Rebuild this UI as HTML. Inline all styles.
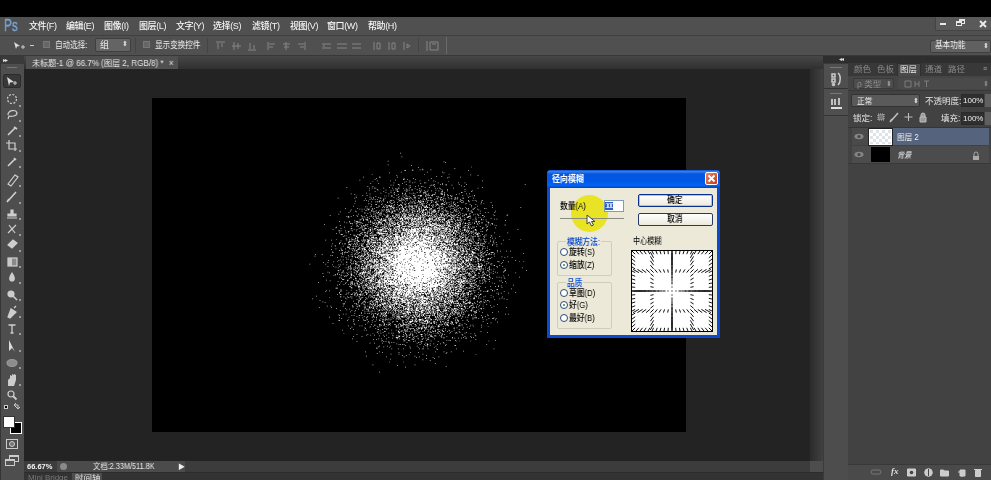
<!DOCTYPE html>
<html lang="zh-CN">
<head>
<meta charset="utf-8">
<title>Photoshop - 径向模糊</title>
<style>
*{box-sizing:border-box;margin:0;padding:0}
html,body{width:991px;height:480px;overflow:hidden;background:#232323}
body{position:relative;font-family:"Liberation Sans","Noto Sans CJK SC",sans-serif;font-size:9px;color:#dcdcdc;line-height:1}
.a{position:absolute}
.t{position:absolute;white-space:nowrap;will-change:transform}
#topblack{left:0;top:0;width:991px;height:17px;background:#000}
#menubar{left:0;top:17px;width:991px;height:18px;background:#505050}
#optbar{left:0;top:35px;width:991px;height:21px;background:#505050;border-top:1px solid #404040;border-bottom:1px solid #383838}
#menubar .t{top:5px;font-size:9px;color:#f6f6f6;letter-spacing:-0.4px;font-weight:500}
.n{transform:scaleX(.84);transform-origin:0 0}
.m{transform:scaleX(.86);transform-origin:0 0;font-weight:500}
#menubar #ps{left:4px;top:0px;font-size:17px;font-weight:normal;color:#7aa3d2;letter-spacing:0;transform:scaleX(.7);transform-origin:0 0;-webkit-text-stroke:0.4px #7aa3d2}
#toolbox{left:0;top:56px;width:24px;height:424px;background:#4e4e4e}
#tabbar{left:24px;top:56px;width:799px;height:13px;background:linear-gradient(#474747,#303030)}
#doctab{left:2px;top:0;width:152px;height:13px;background:#505050}
#work{left:24px;top:69px;width:786px;height:392px;background:#232323}
#vscroll{left:810px;top:69px;width:13px;height:392px;background:linear-gradient(90deg,#2b2b2b,#414141)}
#canvas{left:152px;top:98px;width:534px;height:334px;background:#000}
#status{left:24px;top:461px;width:799px;height:11px;background:#3c3c3c}
#bottom{left:24px;top:472px;width:799px;height:8px;background:#333}
#dock{left:823px;top:56px;width:168px;height:424px;background:#3a3a3a}
#iconstrip{left:1px;top:8px;width:24px;height:416px;background:#4f4f4f}
#panel{left:25px;top:7px;width:143px;height:417px;background:#424242}
/* dialog */
#dlg{left:547px;top:170px;width:173px;height:168px;background:#ece9d8;border:3px solid #0a49d2;border-top:none;border-radius:4px 4px 0 0;color:#000}
#dlgtitle{left:-3px;top:0;width:173px;height:18px;background:linear-gradient(#0a50d0 0,#3a80ea 9%,#0555e0 22%,#0058e6 60%,#0362f6 86%,#0044b8 100%);border-radius:4px 4px 0 0}
.btn{border:1px solid #253a6a;border-radius:2px;background:linear-gradient(#fff,#ece9dc);text-align:center;color:#000}
.grp{border:1px solid #d0cdbd;border-radius:2px}
.radio{width:8px;height:8px;border-radius:50%;border:1px solid #2a4a7a;background:#fff}
.dot:after{content:"";position:absolute;left:2px;top:2px;width:2px;height:2px;background:#2a9a2a;border-radius:50%}
</style>
</head>
<body>
<div id="topblack" class="a"></div>

<div id="menubar" class="a">
  <div id="ps" class="t">Ps</div>
  <div class="t" style="left:29px">文件(F)</div>
  <div class="t" style="left:66px">编辑(E)</div>
  <div class="t" style="left:104px">图像(I)</div>
  <div class="t" style="left:139px">图层(L)</div>
  <div class="t" style="left:176px">文字(Y)</div>
  <div class="t" style="left:213px">选择(S)</div>
  <div class="t" style="left:252px">滤镜(T)</div>
  <div class="t" style="left:290px">视图(V)</div>
  <div class="t" style="left:327px">窗口(W)</div>
  <div class="t" style="left:368px">帮助(H)</div>
  <div class="a" style="left:935px;top:0;width:56px;height:14px;background:#5a5a5a;border-left:1px solid #444;border-bottom:1px solid #444"></div>
  <div class="a" style="left:940px;top:6px;width:6px;height:2px;background:#e8e8e8"></div>
  <div class="a" style="left:959px;top:2px;width:6px;height:5px;border:1px solid #e8e8e8;border-top-width:2px"></div>
  <div class="a" style="left:956px;top:4px;width:6px;height:5px;border:1px solid #e8e8e8;border-top-width:2px;background:#5a5a5a"></div>
  <svg class="a" style="left:979px;top:3px" width="8" height="8"><path d="M1 1L7 7M7 1L1 7" stroke="#eee" stroke-width="1.8"/></svg>
</div>

<div id="optbar" class="a">
  <svg class="a" style="left:13px;top:5px" width="16" height="10"><path d="M1 1L7 5L4 5.5L3 8Z" fill="#ddd"/><path d="M8 6h4M10 4v4" stroke="#ccc" stroke-width="1"/></svg>
  <div class="a" style="left:30px;top:9px;width:4px;height:1px;background:#ccc"></div>
  <div class="a" style="left:43px;top:5px;width:7px;height:7px;background:#666;border:1px solid #777"></div>
  <div class="t n" style="left:55px;top:5px;color:#f0f0f0;font-size:9px">自动选择:</div>
  <div class="a" style="left:95px;top:2px;width:36px;height:14px;background:#646464;border:1px solid #3f3f3f;border-radius:2px"></div>
  <div class="t" style="left:100px;top:5px;color:#f0f0f0">组</div>
  <div class="t" style="left:122px;top:4px;color:#ddd;font-size:7px">⬍</div>
  <div class="a" style="left:135px;top:2px;width:1px;height:15px;background:#444"></div>
  <div class="a" style="left:143px;top:5px;width:7px;height:7px;background:#666;border:1px solid #777"></div>
  <div class="t n" style="left:155px;top:5px;color:#f0f0f0">显示变换控件</div>
  <div class="a" style="left:207px;top:2px;width:1px;height:15px;background:#444"></div>
  <!-- align icons (dim) -->
  <svg class="a" style="left:0;top:3px" width="460" height="14" fill="none" stroke="#858585" stroke-width="1">
    <path d="M216 3h9M218 4v6M222 4v4"/><path d="M232 7h9M234 3v8M238 4v6"/><path d="M248 11h8M250 4v6M254 6v4"/>
    <path d="M268 3v8M269 5h6M269 8h4"/><path d="M286 3v8M283 5h7M284 8h5"/><path d="M305 3v8M298 5h6M300 8h4"/>
    <path d="M322 5h9M322 9h9M324 6v2"/><path d="M337 5h10M337 9h10"/><path d="M352 5h9M352 9h9"/>
    <path d="M374 3v8M377 4v6h3v-6z"/><path d="M389 3v8M392 4v6h3v-6z"/><path d="M404 3v8M407 5l3 2l-3 2z"/>
    <path d="M427 2v10M430 3h8v8h-8zM432 5h4"/>
  </svg>
  <div class="a" style="left:418px;top:2px;width:1px;height:15px;background:#444"></div>
  <div class="a" style="left:446px;top:1px;width:1px;height:17px;background:#6a6a6a"></div>
  <div class="a" style="left:930px;top:4px;width:61px;height:13px;background:#606060;border:1px solid #3f3f3f;border-radius:2px"></div>
  <div class="t n" style="left:935px;top:5px;color:#f0f0f0;font-size:9px">基本功能</div>
  <div class="t" style="left:983px;top:6px;color:#ddd;font-size:7px">⬍</div>
</div>

<div id="tabbar" class="a">
  <div id="doctab" class="a"></div>
  <div class="t" style="left:7.500px;top:3px;color:#e6e6e6;font-size:8.5px;transform:scaleX(.95);transform-origin:0 0">未标题-1 @ 66.7% (图层 2, RGB/8) * <span style="padding-left:3px">×</span></div>
</div>

<div id="work" class="a"></div>
<div id="vscroll" class="a"></div>
<div id="canvas" class="a"></div>
<svg class="a" style="left:0;top:0" width="991" height="480"><path d="M-24 -154h1v1h-1zM-22 -149h1v1h-1zM-41 -143h1v1h-1zM36 -142h1v1h-1zM38 -141h1v1h-1zM-41 -138h1v1h-1zM-9 -137h1v1h-1zM74 -135h1v1h-1zM1 -134h1v1h-1zM51 -133h1v1h-1zM6 -132h1v1h-1zM-7 -131h1v1h-1zM3 -131h1v1h-1zM7 -131h1v1h-1zM18 -131h1v1h-1zM-18 -130h2v1h-2zM-7 -130h1v1h-1zM70 -130h1v1h-1zM-23 -128h1v1h-1zM13 -128h1v1h-1zM34 -128h1v1h-1zM-39 -127h1v1h-1zM36 -127h1v1h-1zM-63 -125h1v1h-1zM9 -125h1v1h-1zM43 -125h1v1h-1zM73 -124h1v1h-1zM-29 -123h1v1h-1zM83 -123h1v1h-1zM26 -122h1v1h-1zM33 -122h1v1h-1zM-75 -121h1v1h-1zM-53 -121h2v1h-2zM-28 -121h1v1h-1zM43 -121h1v1h-1zM59 -121h1v1h-1zM41 -120h1v1h-1zM-57 -119h1v1h-1zM-19 -119h1v1h-1zM-6 -119h1v1h-1zM19 -119h1v1h-1zM-59 -118h1v1h-1zM-20 -118h2v1h-2zM-14 -118h1v1h-1zM-3 -118h1v1h-1zM-80 -117h1v1h-1zM-31 -117h1v1h-1zM15 -117h1v1h-1zM-56 -116h1v1h-1zM-38 -116h1v1h-1zM-11 -116h1v1h-1zM3 -116h1v1h-1zM22 -116h1v1h-1zM89 -116h1v1h-1zM-62 -115h1v1h-1zM-16 -115h1v1h-1zM24 -115h1v1h-1zM42 -115h1v1h-1zM-18 -114h1v1h-1zM-11 -114h1v1h-1zM-4 -114h1v1h-1zM-33 -113h1v1h-1zM-7 -113h1v1h-1zM9 -113h1v1h-1zM11 -113h1v1h-1zM28 -113h1v1h-1zM56 -113h1v1h-1zM65 -113h1v1h-1zM-65 -112h1v1h-1zM-54 -112h1v1h-1zM-21 -112h1v1h-1zM4 -112h1v1h-1zM34 -112h1v1h-1zM-27 -111h2v1h-2zM-16 -111h1v1h-1zM23 -111h1v1h-1zM31 -111h1v1h-1zM34 -111h1v1h-1zM39 -111h1v1h-1zM57 -111h1v1h-1zM67 -111h1v1h-1zM148 -111h1v1h-1zM-37 -110h1v1h-1zM-34 -110h1v1h-1zM19 -110h1v1h-1zM21 -110h2v1h-2zM39 -110h1v1h-1zM47 -110h1v1h-1zM-25 -109h1v1h-1zM-12 -109h1v1h-1zM-10 -109h1v1h-1zM1 -109h1v1h-1zM17 -109h1v1h-1zM60 -109h1v1h-1zM-69 -108h1v1h-1zM-62 -108h1v1h-1zM-3 -108h1v1h-1zM5 -108h1v1h-1zM7 -108h1v1h-1zM23 -108h1v1h-1zM64 -108h1v1h-1zM-98 -107h1v1h-1zM-39 -107h1v1h-1zM-10 -107h1v1h-1zM10 -107h1v1h-1zM16 -107h1v1h-1zM89 -107h1v1h-1zM-67 -106h1v1h-1zM-63 -106h1v1h-1zM-60 -106h1v1h-1zM-58 -106h1v1h-1zM-47 -106h1v1h-1zM-35 -106h1v1h-1zM-27 -106h2v1h-2zM-12 -106h1v1h-1zM24 -106h1v1h-1zM30 -106h1v1h-1zM49 -106h1v1h-1zM83 -106h1v1h-1zM-31 -105h1v1h-1zM-29 -105h1v1h-1zM-20 -105h1v1h-1zM-16 -105h1v1h-1zM-4 -105h1v1h-1zM2 -105h2v1h-2zM27 -105h1v1h-1zM31 -105h1v1h-1zM-56 -104h1v1h-1zM-30 -104h1v1h-1zM-28 -104h1v1h-1zM-15 -104h1v1h-1zM-8 -104h1v1h-1zM-1 -104h1v1h-1zM32 -104h1v1h-1zM41 -104h1v1h-1zM65 -104h1v1h-1zM-67 -103h1v1h-1zM-55 -103h1v1h-1zM-44 -103h1v1h-1zM-34 -103h1v1h-1zM-18 -103h1v1h-1zM-16 -103h1v1h-1zM-12 -103h1v1h-1zM-8 -103h1v1h-1zM2 -103h1v1h-1zM5 -103h1v1h-1zM14 -103h1v1h-1zM25 -103h1v1h-1zM34 -103h1v1h-1zM-37 -102h1v1h-1zM-30 -102h1v1h-1zM-28 -102h1v1h-1zM-14 -102h1v1h-1zM3 -102h1v1h-1zM9 -102h1v1h-1zM19 -102h1v1h-1zM29 -102h1v1h-1zM41 -102h1v1h-1zM75 -102h1v1h-1zM-59 -101h1v1h-1zM-47 -101h1v1h-1zM-28 -101h2v1h-2zM-16 -101h1v1h-1zM4 -101h1v1h-1zM11 -101h1v1h-1zM13 -101h1v1h-1zM33 -101h2v1h-2zM65 -101h1v1h-1zM74 -101h1v1h-1zM-44 -100h1v1h-1zM-37 -100h1v1h-1zM-32 -100h1v1h-1zM-1 -100h1v1h-1zM3 -100h1v1h-1zM8 -100h2v1h-2zM11 -100h1v1h-1zM24 -100h1v1h-1zM37 -100h1v1h-1zM60 -100h2v1h-2zM-71 -99h1v1h-1zM-51 -99h1v1h-1zM-33 -99h1v1h-1zM-21 -99h1v1h-1zM-17 -99h1v1h-1zM-11 -99h1v1h-1zM-6 -99h1v1h-1zM10 -99h1v1h-1zM32 -99h3v1h-3zM-92 -98h1v1h-1zM-66 -98h1v1h-1zM-40 -98h1v1h-1zM-21 -98h1v1h-1zM-17 -98h1v1h-1zM-8 -98h1v1h-1zM-4 -98h1v1h-1zM8 -98h1v1h-1zM11 -98h1v1h-1zM15 -98h1v1h-1zM24 -98h1v1h-1zM32 -98h1v1h-1zM37 -98h1v1h-1zM57 -98h1v1h-1zM67 -98h1v1h-1zM71 -98h1v1h-1zM-87 -97h1v1h-1zM-32 -97h1v1h-1zM-27 -97h1v1h-1zM-18 -97h1v1h-1zM12 -97h1v1h-1zM14 -97h1v1h-1zM20 -97h1v1h-1zM22 -97h2v1h-2zM33 -97h2v1h-2zM37 -97h1v1h-1zM41 -97h1v1h-1zM53 -97h1v1h-1zM-76 -96h1v1h-1zM-70 -96h1v1h-1zM-36 -96h1v1h-1zM-29 -96h1v1h-1zM-16 -96h1v1h-1zM-6 -96h2v1h-2zM1 -96h1v1h-1zM3 -96h3v1h-3zM11 -96h1v1h-1zM14 -96h1v1h-1zM16 -96h1v1h-1zM19 -96h2v1h-2zM37 -96h1v1h-1zM42 -96h1v1h-1zM45 -96h1v1h-1zM62 -96h1v1h-1zM78 -96h1v1h-1zM-85 -95h1v1h-1zM-66 -95h1v1h-1zM-46 -95h1v1h-1zM-43 -95h1v1h-1zM-40 -95h1v1h-1zM-35 -95h1v1h-1zM-21 -95h2v1h-2zM-17 -95h1v1h-1zM-1 -95h1v1h-1zM3 -95h1v1h-1zM5 -95h1v1h-1zM11 -95h1v1h-1zM14 -95h1v1h-1zM20 -95h1v1h-1zM41 -95h1v1h-1zM46 -95h1v1h-1zM48 -95h1v1h-1zM69 -95h1v1h-1zM75 -95h1v1h-1zM78 -95h1v1h-1zM-58 -94h1v1h-1zM-36 -94h1v1h-1zM-26 -94h1v1h-1zM-15 -94h1v1h-1zM-12 -94h1v1h-1zM-4 -94h1v1h-1zM4 -94h1v1h-1zM11 -94h1v1h-1zM26 -94h1v1h-1zM28 -94h1v1h-1zM36 -94h1v1h-1zM46 -94h1v1h-1zM72 -94h1v1h-1zM-85 -93h1v1h-1zM-66 -93h1v1h-1zM-61 -93h1v1h-1zM-54 -93h1v1h-1zM-33 -93h1v1h-1zM-27 -93h1v1h-1zM-19 -93h1v1h-1zM-10 -93h1v1h-1zM-5 -93h1v1h-1zM-3 -93h1v1h-1zM15 -93h1v1h-1zM17 -93h1v1h-1zM29 -93h1v1h-1zM32 -93h2v1h-2zM42 -93h1v1h-1zM52 -93h1v1h-1zM55 -93h1v1h-1zM70 -93h1v1h-1zM-110 -92h1v1h-1zM-87 -92h1v1h-1zM-64 -92h1v1h-1zM-52 -92h2v1h-2zM-45 -92h1v1h-1zM-22 -92h1v1h-1zM-18 -92h1v1h-1zM-16 -92h1v1h-1zM-14 -92h1v1h-1zM-12 -92h1v1h-1zM-9 -92h1v1h-1zM-5 -92h1v1h-1zM1 -92h2v1h-2zM8 -92h1v1h-1zM12 -92h1v1h-1zM14 -92h1v1h-1zM17 -92h1v1h-1zM19 -92h1v1h-1zM27 -92h1v1h-1zM31 -92h1v1h-1zM36 -92h1v1h-1zM46 -92h1v1h-1zM51 -92h1v1h-1zM62 -92h2v1h-2zM77 -92h1v1h-1zM-72 -91h1v1h-1zM-61 -91h1v1h-1zM-47 -91h1v1h-1zM-29 -91h1v1h-1zM-25 -91h1v1h-1zM-22 -91h1v1h-1zM-17 -91h4v1h-4zM-11 -91h1v1h-1zM-3 -91h1v1h-1zM12 -91h1v1h-1zM25 -91h1v1h-1zM27 -91h1v1h-1zM35 -91h1v1h-1zM38 -91h1v1h-1zM43 -91h1v1h-1zM47 -91h1v1h-1zM52 -91h1v1h-1zM54 -91h2v1h-2zM-66 -90h1v1h-1zM-63 -90h1v1h-1zM-59 -90h1v1h-1zM-56 -90h1v1h-1zM-47 -90h1v1h-1zM-27 -90h1v1h-1zM-22 -90h1v1h-1zM-20 -90h1v1h-1zM-7 -90h1v1h-1zM7 -90h1v1h-1zM9 -90h1v1h-1zM12 -90h1v1h-1zM23 -90h1v1h-1zM31 -90h2v1h-2zM34 -90h1v1h-1zM51 -90h1v1h-1zM59 -90h1v1h-1zM-74 -89h1v1h-1zM-71 -89h1v1h-1zM-52 -89h1v1h-1zM-48 -89h1v1h-1zM-38 -89h1v1h-1zM-36 -89h1v1h-1zM-34 -89h1v1h-1zM-25 -89h2v1h-2zM-22 -89h1v1h-1zM-19 -89h1v1h-1zM-15 -89h1v1h-1zM-3 -89h1v1h-1zM1 -89h1v1h-1zM4 -89h1v1h-1zM13 -89h1v1h-1zM15 -89h1v1h-1zM17 -89h1v1h-1zM19 -89h2v1h-2zM32 -89h1v1h-1zM35 -89h1v1h-1zM60 -89h1v1h-1zM62 -89h1v1h-1zM70 -89h1v1h-1zM76 -89h1v1h-1zM79 -89h1v1h-1zM89 -89h1v1h-1zM-86 -88h1v1h-1zM-68 -88h1v1h-1zM-53 -88h1v1h-1zM-47 -88h1v1h-1zM-37 -88h1v1h-1zM-26 -88h1v1h-1zM-10 -88h1v1h-1zM-6 -88h1v1h-1zM1 -88h1v1h-1zM3 -88h1v1h-1zM6 -88h1v1h-1zM8 -88h1v1h-1zM11 -88h1v1h-1zM25 -88h1v1h-1zM28 -88h1v1h-1zM35 -88h1v1h-1zM38 -88h1v1h-1zM58 -88h2v1h-2zM70 -88h1v1h-1zM81 -88h1v1h-1zM88 -88h1v1h-1zM-64 -87h1v1h-1zM-58 -87h1v1h-1zM-56 -87h2v1h-2zM-53 -87h1v1h-1zM-50 -87h1v1h-1zM-42 -87h1v1h-1zM-39 -87h1v1h-1zM-32 -87h1v1h-1zM-23 -87h1v1h-1zM-17 -87h1v1h-1zM-8 -87h1v1h-1zM-5 -87h1v1h-1zM1 -87h3v1h-3zM5 -87h1v1h-1zM7 -87h2v1h-2zM13 -87h1v1h-1zM19 -87h1v1h-1zM21 -87h1v1h-1zM26 -87h1v1h-1zM46 -87h1v1h-1zM50 -87h1v1h-1zM63 -87h1v1h-1zM71 -87h1v1h-1zM-42 -86h1v1h-1zM-38 -86h1v1h-1zM-33 -86h1v1h-1zM-28 -86h1v1h-1zM-21 -86h1v1h-1zM-11 -86h1v1h-1zM-8 -86h1v1h-1zM-4 -86h1v1h-1zM-1 -86h1v1h-1zM3 -86h2v1h-2zM13 -86h1v1h-1zM19 -86h1v1h-1zM24 -86h2v1h-2zM37 -86h1v1h-1zM40 -86h1v1h-1zM43 -86h1v1h-1zM49 -86h1v1h-1zM55 -86h1v1h-1zM60 -86h1v1h-1zM62 -86h1v1h-1zM88 -86h1v1h-1zM101 -86h1v1h-1zM-87 -85h1v1h-1zM-66 -85h1v1h-1zM-36 -85h2v1h-2zM-21 -85h1v1h-1zM-18 -85h1v1h-1zM-16 -85h1v1h-1zM-13 -85h1v1h-1zM-8 -85h1v1h-1zM-5 -85h3v1h-3zM6 -85h1v1h-1zM9 -85h1v1h-1zM12 -85h1v1h-1zM17 -85h1v1h-1zM34 -85h1v1h-1zM39 -85h1v1h-1zM49 -85h1v1h-1zM67 -85h1v1h-1zM91 -85h1v1h-1zM-68 -84h1v1h-1zM-49 -84h1v1h-1zM-37 -84h1v1h-1zM-13 -84h1v1h-1zM-11 -84h1v1h-1zM2 -84h1v1h-1zM5 -84h2v1h-2zM8 -84h1v1h-1zM26 -84h2v1h-2zM32 -84h4v1h-4zM40 -84h1v1h-1zM46 -84h1v1h-1zM52 -84h1v1h-1zM66 -84h1v1h-1zM87 -84h1v1h-1zM-64 -83h1v1h-1zM-58 -83h2v1h-2zM-50 -83h1v1h-1zM-45 -83h1v1h-1zM-32 -83h1v1h-1zM-28 -83h1v1h-1zM-24 -83h2v1h-2zM-18 -83h2v1h-2zM0 -83h1v1h-1zM4 -83h1v1h-1zM6 -83h1v1h-1zM14 -83h1v1h-1zM16 -83h1v1h-1zM21 -83h1v1h-1zM25 -83h1v1h-1zM27 -83h2v1h-2zM33 -83h1v1h-1zM36 -83h2v1h-2zM44 -83h1v1h-1zM50 -83h2v1h-2zM72 -83h1v1h-1zM80 -83h1v1h-1zM-43 -82h1v1h-1zM-40 -82h2v1h-2zM-36 -82h1v1h-1zM-33 -82h1v1h-1zM-26 -82h2v1h-2zM-23 -82h2v1h-2zM-12 -82h1v1h-1zM-8 -82h1v1h-1zM-5 -82h1v1h-1zM-3 -82h1v1h-1zM-1 -82h1v1h-1zM6 -82h2v1h-2zM12 -82h1v1h-1zM16 -82h1v1h-1zM19 -82h1v1h-1zM21 -82h1v1h-1zM26 -82h1v1h-1zM29 -82h1v1h-1zM46 -82h1v1h-1zM52 -82h1v1h-1zM55 -82h2v1h-2zM74 -82h1v1h-1zM103 -82h1v1h-1zM-89 -81h1v1h-1zM-64 -81h1v1h-1zM-54 -81h2v1h-2zM-47 -81h1v1h-1zM-44 -81h1v1h-1zM-42 -81h2v1h-2zM-39 -81h2v1h-2zM-36 -81h1v1h-1zM-21 -81h1v1h-1zM-17 -81h2v1h-2zM-12 -81h3v1h-3zM-8 -81h1v1h-1zM-2 -81h1v1h-1zM0 -81h1v1h-1zM3 -81h1v1h-1zM8 -81h3v1h-3zM12 -81h1v1h-1zM21 -81h1v1h-1zM24 -81h1v1h-1zM32 -81h1v1h-1zM34 -81h1v1h-1zM42 -81h1v1h-1zM46 -81h1v1h-1zM48 -81h2v1h-2zM82 -81h1v1h-1zM-72 -80h1v1h-1zM-70 -80h1v1h-1zM-65 -80h1v1h-1zM-47 -80h1v1h-1zM-38 -80h3v1h-3zM-34 -80h1v1h-1zM-27 -80h1v1h-1zM-21 -80h1v1h-1zM-15 -80h1v1h-1zM-13 -80h1v1h-1zM-9 -80h3v1h-3zM-5 -80h1v1h-1zM-3 -80h2v1h-2zM2 -80h1v1h-1zM5 -80h1v1h-1zM11 -80h3v1h-3zM20 -80h1v1h-1zM30 -80h1v1h-1zM32 -80h1v1h-1zM44 -80h2v1h-2zM53 -80h1v1h-1zM55 -80h1v1h-1zM74 -80h1v1h-1zM-57 -79h1v1h-1zM-55 -79h1v1h-1zM-49 -79h1v1h-1zM-46 -79h1v1h-1zM-43 -79h2v1h-2zM-35 -79h2v1h-2zM-32 -79h1v1h-1zM-29 -79h1v1h-1zM-23 -79h1v1h-1zM-21 -79h1v1h-1zM-18 -79h2v1h-2zM-12 -79h1v1h-1zM-8 -79h1v1h-1zM-2 -79h1v1h-1zM1 -79h1v1h-1zM5 -79h1v1h-1zM9 -79h3v1h-3zM13 -79h2v1h-2zM16 -79h1v1h-1zM21 -79h1v1h-1zM29 -79h1v1h-1zM35 -79h1v1h-1zM40 -79h1v1h-1zM51 -79h1v1h-1zM58 -79h1v1h-1zM66 -79h1v1h-1zM79 -79h1v1h-1zM103 -79h1v1h-1zM142 -79h1v1h-1zM-100 -78h1v1h-1zM-83 -78h1v1h-1zM-70 -78h1v1h-1zM-63 -78h1v1h-1zM-60 -78h1v1h-1zM-37 -78h1v1h-1zM-34 -78h2v1h-2zM-25 -78h1v1h-1zM-21 -78h2v1h-2zM-11 -78h1v1h-1zM-7 -78h3v1h-3zM1 -78h2v1h-2zM5 -78h1v1h-1zM18 -78h2v1h-2zM27 -78h2v1h-2zM30 -78h1v1h-1zM33 -78h2v1h-2zM47 -78h1v1h-1zM49 -78h1v1h-1zM56 -78h1v1h-1zM59 -78h1v1h-1zM62 -78h1v1h-1zM67 -78h1v1h-1zM70 -78h1v1h-1zM78 -78h1v1h-1zM92 -78h1v1h-1zM94 -78h1v1h-1zM-80 -77h1v1h-1zM-77 -77h1v1h-1zM-74 -77h1v1h-1zM-68 -77h2v1h-2zM-62 -77h1v1h-1zM-43 -77h1v1h-1zM-41 -77h2v1h-2zM-38 -77h1v1h-1zM-29 -77h1v1h-1zM-25 -77h1v1h-1zM-23 -77h1v1h-1zM-20 -77h2v1h-2zM-16 -77h2v1h-2zM-11 -77h1v1h-1zM-8 -77h1v1h-1zM-2 -77h1v1h-1zM2 -77h2v1h-2zM8 -77h1v1h-1zM11 -77h2v1h-2zM16 -77h2v1h-2zM24 -77h1v1h-1zM35 -77h1v1h-1zM38 -77h1v1h-1zM45 -77h1v1h-1zM51 -77h1v1h-1zM54 -77h1v1h-1zM61 -77h1v1h-1zM68 -77h1v1h-1zM70 -77h1v1h-1zM76 -77h2v1h-2zM82 -77h1v1h-1zM-92 -76h1v1h-1zM-70 -76h1v1h-1zM-68 -76h1v1h-1zM-63 -76h1v1h-1zM-50 -76h1v1h-1zM-48 -76h1v1h-1zM-46 -76h1v1h-1zM-43 -76h2v1h-2zM-36 -76h1v1h-1zM-33 -76h1v1h-1zM-30 -76h1v1h-1zM-28 -76h1v1h-1zM-25 -76h1v1h-1zM-20 -76h2v1h-2zM-15 -76h1v1h-1zM-11 -76h1v1h-1zM-9 -76h1v1h-1zM-7 -76h1v1h-1zM-4 -76h1v1h-1zM1 -76h2v1h-2zM5 -76h1v1h-1zM7 -76h2v1h-2zM10 -76h3v1h-3zM17 -76h1v1h-1zM19 -76h1v1h-1zM21 -76h1v1h-1zM23 -76h1v1h-1zM30 -76h1v1h-1zM32 -76h1v1h-1zM51 -76h1v1h-1zM53 -76h1v1h-1zM84 -76h1v1h-1zM-72 -75h2v1h-2zM-64 -75h1v1h-1zM-57 -75h1v1h-1zM-53 -75h1v1h-1zM-49 -75h1v1h-1zM-43 -75h1v1h-1zM-40 -75h1v1h-1zM-32 -75h1v1h-1zM-21 -75h1v1h-1zM-17 -75h3v1h-3zM-8 -75h1v1h-1zM-6 -75h1v1h-1zM0 -75h1v1h-1zM2 -75h1v1h-1zM5 -75h1v1h-1zM7 -75h3v1h-3zM13 -75h1v1h-1zM16 -75h1v1h-1zM22 -75h3v1h-3zM28 -75h2v1h-2zM37 -75h2v1h-2zM40 -75h1v1h-1zM50 -75h2v1h-2zM56 -75h1v1h-1zM60 -75h1v1h-1zM70 -75h1v1h-1zM74 -75h1v1h-1zM-93 -74h1v1h-1zM-86 -74h1v1h-1zM-77 -74h1v1h-1zM-64 -74h1v1h-1zM-62 -74h1v1h-1zM-58 -74h1v1h-1zM-48 -74h1v1h-1zM-44 -74h1v1h-1zM-41 -74h3v1h-3zM-35 -74h1v1h-1zM-33 -74h3v1h-3zM-27 -74h1v1h-1zM-22 -74h4v1h-4zM-17 -74h1v1h-1zM-14 -74h1v1h-1zM-12 -74h1v1h-1zM-7 -74h1v1h-1zM-5 -74h2v1h-2zM-1 -74h2v1h-2zM2 -74h1v1h-1zM6 -74h2v1h-2zM19 -74h1v1h-1zM21 -74h4v1h-4zM29 -74h1v1h-1zM34 -74h2v1h-2zM39 -74h1v1h-1zM52 -74h2v1h-2zM69 -74h1v1h-1zM72 -74h1v1h-1zM86 -74h1v1h-1zM107 -74h1v1h-1zM-107 -73h1v1h-1zM-85 -73h1v1h-1zM-61 -73h2v1h-2zM-54 -73h1v1h-1zM-50 -73h1v1h-1zM-42 -73h1v1h-1zM-39 -73h1v1h-1zM-36 -73h2v1h-2zM-24 -73h1v1h-1zM-21 -73h1v1h-1zM-16 -73h1v1h-1zM-11 -73h1v1h-1zM-7 -73h1v1h-1zM-4 -73h1v1h-1zM-1 -73h2v1h-2zM3 -73h2v1h-2zM6 -73h1v1h-1zM8 -73h1v1h-1zM13 -73h2v1h-2zM16 -73h1v1h-1zM20 -73h2v1h-2zM24 -73h2v1h-2zM28 -73h1v1h-1zM33 -73h1v1h-1zM39 -73h1v1h-1zM41 -73h2v1h-2zM45 -73h1v1h-1zM49 -73h1v1h-1zM54 -73h1v1h-1zM57 -73h1v1h-1zM74 -73h2v1h-2zM-95 -72h1v1h-1zM-73 -72h1v1h-1zM-66 -72h1v1h-1zM-57 -72h1v1h-1zM-55 -72h2v1h-2zM-51 -72h1v1h-1zM-43 -72h1v1h-1zM-37 -72h1v1h-1zM-35 -72h1v1h-1zM-25 -72h2v1h-2zM-19 -72h1v1h-1zM-14 -72h2v1h-2zM-8 -72h2v1h-2zM2 -72h1v1h-1zM6 -72h2v1h-2zM10 -72h2v1h-2zM14 -72h1v1h-1zM16 -72h1v1h-1zM19 -72h1v1h-1zM21 -72h1v1h-1zM23 -72h1v1h-1zM28 -72h1v1h-1zM35 -72h1v1h-1zM46 -72h1v1h-1zM48 -72h1v1h-1zM58 -72h1v1h-1zM75 -72h1v1h-1zM93 -72h1v1h-1zM97 -72h1v1h-1zM106 -72h1v1h-1zM-73 -71h1v1h-1zM-69 -71h1v1h-1zM-59 -71h1v1h-1zM-56 -71h1v1h-1zM-52 -71h1v1h-1zM-50 -71h1v1h-1zM-36 -71h1v1h-1zM-33 -71h1v1h-1zM-26 -71h1v1h-1zM-23 -71h1v1h-1zM-20 -71h1v1h-1zM-18 -71h1v1h-1zM-11 -71h1v1h-1zM-7 -71h1v1h-1zM-4 -71h1v1h-1zM0 -71h1v1h-1zM5 -71h1v1h-1zM8 -71h1v1h-1zM11 -71h1v1h-1zM13 -71h1v1h-1zM16 -71h1v1h-1zM18 -71h2v1h-2zM26 -71h1v1h-1zM31 -71h1v1h-1zM34 -71h1v1h-1zM41 -71h2v1h-2zM56 -71h1v1h-1zM62 -71h1v1h-1zM72 -71h1v1h-1zM86 -71h1v1h-1zM-109 -70h1v1h-1zM-82 -70h1v1h-1zM-65 -70h1v1h-1zM-61 -70h1v1h-1zM-53 -70h2v1h-2zM-47 -70h1v1h-1zM-42 -70h1v1h-1zM-31 -70h2v1h-2zM-28 -70h1v1h-1zM-19 -70h4v1h-4zM-13 -70h1v1h-1zM-10 -70h2v1h-2zM-6 -70h1v1h-1zM-2 -70h1v1h-1zM0 -70h3v1h-3zM6 -70h1v1h-1zM10 -70h2v1h-2zM13 -70h1v1h-1zM20 -70h2v1h-2zM25 -70h2v1h-2zM31 -70h5v1h-5zM39 -70h1v1h-1zM41 -70h1v1h-1zM45 -70h2v1h-2zM50 -70h1v1h-1zM54 -70h1v1h-1zM59 -70h1v1h-1zM66 -70h2v1h-2zM71 -70h1v1h-1zM79 -70h1v1h-1zM82 -70h1v1h-1zM-59 -69h1v1h-1zM-54 -69h1v1h-1zM-50 -69h1v1h-1zM-46 -69h1v1h-1zM-40 -69h1v1h-1zM-30 -69h2v1h-2zM-27 -69h3v1h-3zM-22 -69h3v1h-3zM-16 -69h1v1h-1zM-13 -69h1v1h-1zM-11 -69h1v1h-1zM-8 -69h3v1h-3zM-2 -69h1v1h-1zM6 -69h6v1h-6zM16 -69h1v1h-1zM19 -69h1v1h-1zM24 -69h1v1h-1zM28 -69h1v1h-1zM33 -69h1v1h-1zM36 -69h1v1h-1zM38 -69h2v1h-2zM46 -69h1v1h-1zM53 -69h1v1h-1zM64 -69h1v1h-1zM67 -69h1v1h-1zM77 -69h1v1h-1zM83 -69h1v1h-1zM104 -69h1v1h-1zM124 -69h1v1h-1zM-121 -68h1v1h-1zM-89 -68h1v1h-1zM-84 -68h1v1h-1zM-78 -68h1v1h-1zM-71 -68h1v1h-1zM-64 -68h1v1h-1zM-58 -68h1v1h-1zM-52 -68h1v1h-1zM-44 -68h1v1h-1zM-42 -68h2v1h-2zM-35 -68h2v1h-2zM-30 -68h1v1h-1zM-28 -68h1v1h-1zM-26 -68h1v1h-1zM-21 -68h1v1h-1zM-19 -68h3v1h-3zM-12 -68h4v1h-4zM-6 -68h1v1h-1zM-4 -68h1v1h-1zM-2 -68h1v1h-1zM0 -68h1v1h-1zM3 -68h2v1h-2zM6 -68h1v1h-1zM8 -68h1v1h-1zM12 -68h2v1h-2zM15 -68h3v1h-3zM19 -68h1v1h-1zM22 -68h2v1h-2zM26 -68h1v1h-1zM30 -68h1v1h-1zM32 -68h2v1h-2zM35 -68h1v1h-1zM37 -68h1v1h-1zM39 -68h1v1h-1zM42 -68h3v1h-3zM47 -68h3v1h-3zM51 -68h2v1h-2zM56 -68h2v1h-2zM62 -68h1v1h-1zM64 -68h1v1h-1zM72 -68h1v1h-1zM84 -68h1v1h-1zM89 -68h2v1h-2zM106 -68h1v1h-1zM123 -68h1v1h-1zM-98 -67h1v1h-1zM-96 -67h1v1h-1zM-92 -67h1v1h-1zM-83 -67h1v1h-1zM-77 -67h1v1h-1zM-74 -67h1v1h-1zM-66 -67h1v1h-1zM-64 -67h1v1h-1zM-61 -67h1v1h-1zM-59 -67h1v1h-1zM-55 -67h1v1h-1zM-49 -67h1v1h-1zM-43 -67h3v1h-3zM-38 -67h1v1h-1zM-35 -67h2v1h-2zM-31 -67h1v1h-1zM-28 -67h1v1h-1zM-25 -67h1v1h-1zM-22 -67h1v1h-1zM-19 -67h3v1h-3zM-14 -67h1v1h-1zM-11 -67h1v1h-1zM-7 -67h1v1h-1zM-3 -67h3v1h-3zM1 -67h1v1h-1zM4 -67h1v1h-1zM6 -67h1v1h-1zM9 -67h1v1h-1zM11 -67h1v1h-1zM14 -67h2v1h-2zM18 -67h1v1h-1zM20 -67h1v1h-1zM23 -67h3v1h-3zM27 -67h1v1h-1zM32 -67h1v1h-1zM37 -67h1v1h-1zM41 -67h1v1h-1zM43 -67h1v1h-1zM45 -67h1v1h-1zM49 -67h1v1h-1zM51 -67h1v1h-1zM62 -67h1v1h-1zM70 -67h3v1h-3zM92 -67h1v1h-1zM-96 -66h2v1h-2zM-76 -66h1v1h-1zM-69 -66h1v1h-1zM-62 -66h1v1h-1zM-58 -66h2v1h-2zM-54 -66h1v1h-1zM-44 -66h2v1h-2zM-32 -66h1v1h-1zM-30 -66h1v1h-1zM-27 -66h1v1h-1zM-25 -66h1v1h-1zM-23 -66h1v1h-1zM-20 -66h2v1h-2zM-17 -66h1v1h-1zM-15 -66h1v1h-1zM-13 -66h2v1h-2zM-10 -66h1v1h-1zM-8 -66h1v1h-1zM-5 -66h1v1h-1zM1 -66h4v1h-4zM7 -66h2v1h-2zM17 -66h1v1h-1zM21 -66h2v1h-2zM30 -66h2v1h-2zM33 -66h1v1h-1zM36 -66h1v1h-1zM39 -66h1v1h-1zM46 -66h3v1h-3zM54 -66h2v1h-2zM59 -66h1v1h-1zM68 -66h3v1h-3zM73 -66h1v1h-1zM80 -66h1v1h-1zM-73 -65h1v1h-1zM-70 -65h1v1h-1zM-42 -65h2v1h-2zM-39 -65h1v1h-1zM-37 -65h1v1h-1zM-34 -65h3v1h-3zM-29 -65h1v1h-1zM-27 -65h2v1h-2zM-23 -65h2v1h-2zM-19 -65h2v1h-2zM-16 -65h4v1h-4zM-11 -65h1v1h-1zM-9 -65h2v1h-2zM-5 -65h1v1h-1zM-3 -65h1v1h-1zM-1 -65h1v1h-1zM2 -65h1v1h-1zM4 -65h2v1h-2zM7 -65h1v1h-1zM9 -65h2v1h-2zM16 -65h1v1h-1zM19 -65h2v1h-2zM23 -65h2v1h-2zM26 -65h6v1h-6zM33 -65h3v1h-3zM41 -65h1v1h-1zM46 -65h1v1h-1zM49 -65h1v1h-1zM51 -65h1v1h-1zM54 -65h1v1h-1zM56 -65h1v1h-1zM58 -65h1v1h-1zM64 -65h1v1h-1zM68 -65h1v1h-1zM84 -65h1v1h-1zM86 -65h1v1h-1zM91 -65h1v1h-1zM-76 -64h1v1h-1zM-67 -64h1v1h-1zM-61 -64h1v1h-1zM-57 -64h2v1h-2zM-54 -64h1v1h-1zM-50 -64h1v1h-1zM-47 -64h1v1h-1zM-40 -64h1v1h-1zM-38 -64h1v1h-1zM-36 -64h1v1h-1zM-34 -64h1v1h-1zM-32 -64h2v1h-2zM-27 -64h1v1h-1zM-25 -64h5v1h-5zM-18 -64h5v1h-5zM-12 -64h3v1h-3zM-8 -64h2v1h-2zM-5 -64h4v1h-4zM0 -64h2v1h-2zM3 -64h2v1h-2zM8 -64h1v1h-1zM10 -64h1v1h-1zM15 -64h3v1h-3zM19 -64h2v1h-2zM25 -64h2v1h-2zM28 -64h2v1h-2zM35 -64h1v1h-1zM37 -64h1v1h-1zM39 -64h1v1h-1zM46 -64h1v1h-1zM49 -64h1v1h-1zM59 -64h1v1h-1zM72 -64h1v1h-1zM80 -64h1v1h-1zM101 -64h1v1h-1zM-78 -63h1v1h-1zM-75 -63h1v1h-1zM-72 -63h1v1h-1zM-70 -63h2v1h-2zM-53 -63h1v1h-1zM-50 -63h1v1h-1zM-45 -63h2v1h-2zM-41 -63h4v1h-4zM-36 -63h1v1h-1zM-24 -63h1v1h-1zM-22 -63h2v1h-2zM-19 -63h1v1h-1zM-17 -63h1v1h-1zM-14 -63h2v1h-2zM-9 -63h1v1h-1zM-7 -63h1v1h-1zM-5 -63h3v1h-3zM0 -63h5v1h-5zM7 -63h2v1h-2zM12 -63h1v1h-1zM16 -63h3v1h-3zM20 -63h1v1h-1zM24 -63h1v1h-1zM26 -63h1v1h-1zM28 -63h4v1h-4zM33 -63h2v1h-2zM36 -63h2v1h-2zM46 -63h1v1h-1zM50 -63h2v1h-2zM55 -63h1v1h-1zM57 -63h1v1h-1zM59 -63h1v1h-1zM64 -63h1v1h-1zM66 -63h1v1h-1zM88 -63h1v1h-1zM106 -63h1v1h-1zM109 -63h1v1h-1zM-80 -62h2v1h-2zM-75 -62h1v1h-1zM-71 -62h2v1h-2zM-60 -62h1v1h-1zM-58 -62h1v1h-1zM-52 -62h3v1h-3zM-48 -62h1v1h-1zM-46 -62h1v1h-1zM-44 -62h1v1h-1zM-38 -62h2v1h-2zM-31 -62h1v1h-1zM-29 -62h2v1h-2zM-25 -62h2v1h-2zM-21 -62h1v1h-1zM-19 -62h1v1h-1zM-17 -62h1v1h-1zM-15 -62h1v1h-1zM-13 -62h1v1h-1zM-11 -62h1v1h-1zM-9 -62h5v1h-5zM-2 -62h4v1h-4zM4 -62h1v1h-1zM7 -62h1v1h-1zM9 -62h1v1h-1zM11 -62h7v1h-7zM19 -62h2v1h-2zM22 -62h3v1h-3zM26 -62h1v1h-1zM30 -62h2v1h-2zM34 -62h4v1h-4zM42 -62h7v1h-7zM55 -62h1v1h-1zM60 -62h2v1h-2zM64 -62h1v1h-1zM76 -62h1v1h-1zM79 -62h1v1h-1zM81 -62h1v1h-1zM88 -62h1v1h-1zM90 -62h1v1h-1zM94 -62h1v1h-1zM-87 -61h1v1h-1zM-75 -61h1v1h-1zM-69 -61h1v1h-1zM-65 -61h1v1h-1zM-59 -61h1v1h-1zM-56 -61h2v1h-2zM-51 -61h1v1h-1zM-48 -61h5v1h-5zM-40 -61h2v1h-2zM-37 -61h1v1h-1zM-35 -61h1v1h-1zM-32 -61h1v1h-1zM-29 -61h1v1h-1zM-27 -61h1v1h-1zM-22 -61h3v1h-3zM-13 -61h1v1h-1zM-9 -61h1v1h-1zM-7 -61h1v1h-1zM-4 -61h1v1h-1zM-2 -61h1v1h-1zM0 -61h1v1h-1zM3 -61h1v1h-1zM6 -61h1v1h-1zM8 -61h2v1h-2zM11 -61h1v1h-1zM13 -61h4v1h-4zM21 -61h1v1h-1zM23 -61h1v1h-1zM25 -61h1v1h-1zM27 -61h2v1h-2zM30 -61h1v1h-1zM33 -61h1v1h-1zM37 -61h1v1h-1zM41 -61h2v1h-2zM52 -61h1v1h-1zM54 -61h1v1h-1zM56 -61h2v1h-2zM59 -61h1v1h-1zM70 -61h2v1h-2zM121 -61h1v1h-1zM-108 -60h1v1h-1zM-94 -60h1v1h-1zM-85 -60h3v1h-3zM-65 -60h1v1h-1zM-54 -60h2v1h-2zM-49 -60h1v1h-1zM-45 -60h2v1h-2zM-39 -60h2v1h-2zM-36 -60h1v1h-1zM-33 -60h1v1h-1zM-25 -60h4v1h-4zM-19 -60h2v1h-2zM-16 -60h1v1h-1zM-13 -60h1v1h-1zM-9 -60h1v1h-1zM-6 -60h4v1h-4zM-1 -60h1v1h-1zM1 -60h2v1h-2zM4 -60h3v1h-3zM9 -60h2v1h-2zM13 -60h1v1h-1zM16 -60h4v1h-4zM22 -60h1v1h-1zM25 -60h1v1h-1zM28 -60h1v1h-1zM31 -60h1v1h-1zM34 -60h1v1h-1zM39 -60h2v1h-2zM42 -60h1v1h-1zM44 -60h1v1h-1zM46 -60h3v1h-3zM52 -60h1v1h-1zM60 -60h1v1h-1zM80 -60h2v1h-2zM84 -60h2v1h-2zM95 -60h1v1h-1zM-101 -59h1v1h-1zM-94 -59h1v1h-1zM-87 -59h1v1h-1zM-82 -59h3v1h-3zM-68 -59h1v1h-1zM-66 -59h2v1h-2zM-63 -59h2v1h-2zM-58 -59h1v1h-1zM-54 -59h5v1h-5zM-42 -59h1v1h-1zM-36 -59h2v1h-2zM-33 -59h1v1h-1zM-28 -59h2v1h-2zM-23 -59h1v1h-1zM-21 -59h2v1h-2zM-17 -59h2v1h-2zM-14 -59h1v1h-1zM-11 -59h1v1h-1zM-9 -59h4v1h-4zM-3 -59h1v1h-1zM-1 -59h1v1h-1zM1 -59h1v1h-1zM3 -59h2v1h-2zM8 -59h1v1h-1zM10 -59h2v1h-2zM13 -59h2v1h-2zM17 -59h1v1h-1zM31 -59h1v1h-1zM33 -59h2v1h-2zM36 -59h1v1h-1zM39 -59h1v1h-1zM41 -59h4v1h-4zM49 -59h1v1h-1zM57 -59h1v1h-1zM59 -59h1v1h-1zM63 -59h1v1h-1zM81 -59h1v1h-1zM84 -59h1v1h-1zM97 -59h1v1h-1zM-98 -58h1v1h-1zM-84 -58h2v1h-2zM-79 -58h2v1h-2zM-60 -58h1v1h-1zM-57 -58h1v1h-1zM-55 -58h3v1h-3zM-51 -58h1v1h-1zM-44 -58h2v1h-2zM-40 -58h3v1h-3zM-36 -58h1v1h-1zM-34 -58h1v1h-1zM-32 -58h2v1h-2zM-28 -58h2v1h-2zM-24 -58h1v1h-1zM-22 -58h2v1h-2zM-18 -58h1v1h-1zM-16 -58h4v1h-4zM-11 -58h1v1h-1zM-7 -58h1v1h-1zM-4 -58h1v1h-1zM-2 -58h1v1h-1zM0 -58h3v1h-3zM4 -58h3v1h-3zM10 -58h2v1h-2zM14 -58h3v1h-3zM18 -58h1v1h-1zM20 -58h1v1h-1zM24 -58h3v1h-3zM29 -58h1v1h-1zM35 -58h1v1h-1zM39 -58h1v1h-1zM41 -58h1v1h-1zM43 -58h2v1h-2zM48 -58h1v1h-1zM53 -58h1v1h-1zM55 -58h1v1h-1zM57 -58h2v1h-2zM66 -58h1v1h-1zM70 -58h3v1h-3zM75 -58h1v1h-1zM78 -58h1v1h-1zM88 -58h2v1h-2zM97 -58h2v1h-2zM-93 -57h2v1h-2zM-90 -57h1v1h-1zM-85 -57h1v1h-1zM-76 -57h1v1h-1zM-62 -57h3v1h-3zM-57 -57h1v1h-1zM-55 -57h1v1h-1zM-51 -57h2v1h-2zM-46 -57h1v1h-1zM-42 -57h1v1h-1zM-39 -57h1v1h-1zM-36 -57h3v1h-3zM-31 -57h1v1h-1zM-29 -57h2v1h-2zM-25 -57h1v1h-1zM-22 -57h3v1h-3zM-17 -57h2v1h-2zM-13 -57h1v1h-1zM-10 -57h5v1h-5zM-4 -57h1v1h-1zM-2 -57h1v1h-1zM0 -57h1v1h-1zM2 -57h1v1h-1zM5 -57h2v1h-2zM9 -57h2v1h-2zM16 -57h2v1h-2zM20 -57h5v1h-5zM26 -57h1v1h-1zM29 -57h1v1h-1zM37 -57h1v1h-1zM40 -57h2v1h-2zM44 -57h1v1h-1zM51 -57h2v1h-2zM55 -57h1v1h-1zM59 -57h1v1h-1zM62 -57h1v1h-1zM65 -57h2v1h-2zM68 -57h1v1h-1zM78 -57h1v1h-1zM82 -57h1v1h-1zM85 -57h1v1h-1zM102 -57h2v1h-2zM-129 -56h1v1h-1zM-80 -56h1v1h-1zM-72 -56h1v1h-1zM-69 -56h1v1h-1zM-65 -56h1v1h-1zM-59 -56h1v1h-1zM-56 -56h1v1h-1zM-54 -56h1v1h-1zM-51 -56h1v1h-1zM-49 -56h1v1h-1zM-46 -56h1v1h-1zM-41 -56h1v1h-1zM-39 -56h2v1h-2zM-33 -56h3v1h-3zM-28 -56h3v1h-3zM-22 -56h3v1h-3zM-18 -56h1v1h-1zM-12 -56h4v1h-4zM-7 -56h2v1h-2zM-4 -56h4v1h-4zM1 -56h1v1h-1zM3 -56h1v1h-1zM5 -56h1v1h-1zM7 -56h1v1h-1zM9 -56h2v1h-2zM14 -56h1v1h-1zM16 -56h4v1h-4zM21 -56h1v1h-1zM23 -56h2v1h-2zM26 -56h2v1h-2zM30 -56h1v1h-1zM33 -56h1v1h-1zM35 -56h1v1h-1zM37 -56h1v1h-1zM39 -56h1v1h-1zM41 -56h1v1h-1zM43 -56h1v1h-1zM45 -56h1v1h-1zM47 -56h1v1h-1zM52 -56h1v1h-1zM54 -56h1v1h-1zM56 -56h1v1h-1zM58 -56h2v1h-2zM70 -56h1v1h-1zM73 -56h1v1h-1zM82 -56h1v1h-1zM94 -56h1v1h-1zM103 -56h1v1h-1zM-90 -55h1v1h-1zM-85 -55h2v1h-2zM-71 -55h2v1h-2zM-62 -55h1v1h-1zM-58 -55h1v1h-1zM-52 -55h1v1h-1zM-49 -55h1v1h-1zM-47 -55h1v1h-1zM-45 -55h3v1h-3zM-41 -55h1v1h-1zM-39 -55h2v1h-2zM-35 -55h5v1h-5zM-27 -55h3v1h-3zM-22 -55h2v1h-2zM-16 -55h1v1h-1zM-13 -55h1v1h-1zM-10 -55h1v1h-1zM-7 -55h3v1h-3zM-3 -55h1v1h-1zM-1 -55h1v1h-1zM1 -55h8v1h-8zM10 -55h5v1h-5zM17 -55h2v1h-2zM20 -55h1v1h-1zM22 -55h5v1h-5zM28 -55h2v1h-2zM31 -55h2v1h-2zM34 -55h1v1h-1zM36 -55h1v1h-1zM41 -55h2v1h-2zM44 -55h1v1h-1zM47 -55h1v1h-1zM49 -55h2v1h-2zM54 -55h3v1h-3zM58 -55h1v1h-1zM62 -55h1v1h-1zM70 -55h2v1h-2zM84 -55h1v1h-1zM97 -55h1v1h-1zM100 -55h1v1h-1zM106 -55h1v1h-1zM120 -55h2v1h-2zM-107 -54h1v1h-1zM-83 -54h1v1h-1zM-78 -54h1v1h-1zM-75 -54h2v1h-2zM-72 -54h1v1h-1zM-61 -54h1v1h-1zM-56 -54h1v1h-1zM-46 -54h1v1h-1zM-40 -54h1v1h-1zM-38 -54h1v1h-1zM-36 -54h2v1h-2zM-26 -54h3v1h-3zM-22 -54h1v1h-1zM-17 -54h1v1h-1zM-14 -54h1v1h-1zM-12 -54h1v1h-1zM-9 -54h3v1h-3zM-2 -54h2v1h-2zM1 -54h1v1h-1zM7 -54h1v1h-1zM13 -54h1v1h-1zM15 -54h8v1h-8zM26 -54h7v1h-7zM34 -54h1v1h-1zM36 -54h2v1h-2zM39 -54h2v1h-2zM42 -54h3v1h-3zM51 -54h1v1h-1zM54 -54h3v1h-3zM58 -54h1v1h-1zM65 -54h2v1h-2zM68 -54h1v1h-1zM94 -54h1v1h-1zM108 -54h1v1h-1zM-92 -53h1v1h-1zM-84 -53h1v1h-1zM-82 -53h1v1h-1zM-77 -53h1v1h-1zM-74 -53h1v1h-1zM-69 -53h1v1h-1zM-59 -53h3v1h-3zM-49 -53h1v1h-1zM-47 -53h1v1h-1zM-44 -53h2v1h-2zM-40 -53h1v1h-1zM-38 -53h2v1h-2zM-34 -53h1v1h-1zM-31 -53h1v1h-1zM-29 -53h5v1h-5zM-21 -53h6v1h-6zM-14 -53h5v1h-5zM-6 -53h2v1h-2zM-3 -53h5v1h-5zM4 -53h3v1h-3zM9 -53h1v1h-1zM11 -53h3v1h-3zM19 -53h2v1h-2zM23 -53h3v1h-3zM30 -53h1v1h-1zM32 -53h5v1h-5zM42 -53h5v1h-5zM48 -53h1v1h-1zM52 -53h2v1h-2zM55 -53h1v1h-1zM57 -53h1v1h-1zM59 -53h1v1h-1zM64 -53h1v1h-1zM70 -53h1v1h-1zM76 -53h1v1h-1zM81 -53h1v1h-1zM86 -53h1v1h-1zM96 -53h1v1h-1zM-112 -52h1v1h-1zM-101 -52h1v1h-1zM-78 -52h1v1h-1zM-76 -52h1v1h-1zM-63 -52h1v1h-1zM-56 -52h2v1h-2zM-51 -52h2v1h-2zM-46 -52h2v1h-2zM-33 -52h1v1h-1zM-30 -52h4v1h-4zM-25 -52h1v1h-1zM-22 -52h1v1h-1zM-19 -52h1v1h-1zM-13 -52h1v1h-1zM-11 -52h1v1h-1zM-9 -52h1v1h-1zM-7 -52h1v1h-1zM-4 -52h2v1h-2zM2 -52h2v1h-2zM7 -52h1v1h-1zM9 -52h4v1h-4zM14 -52h2v1h-2zM17 -52h1v1h-1zM19 -52h1v1h-1zM22 -52h2v1h-2zM25 -52h3v1h-3zM29 -52h3v1h-3zM33 -52h1v1h-1zM38 -52h1v1h-1zM41 -52h1v1h-1zM45 -52h1v1h-1zM49 -52h1v1h-1zM52 -52h1v1h-1zM55 -52h2v1h-2zM63 -52h1v1h-1zM68 -52h1v1h-1zM70 -52h1v1h-1zM72 -52h1v1h-1zM78 -52h1v1h-1zM95 -52h1v1h-1zM-113 -51h1v1h-1zM-79 -51h1v1h-1zM-73 -51h1v1h-1zM-66 -51h2v1h-2zM-57 -51h1v1h-1zM-54 -51h1v1h-1zM-52 -51h1v1h-1zM-49 -51h1v1h-1zM-47 -51h2v1h-2zM-44 -51h1v1h-1zM-42 -51h1v1h-1zM-40 -51h2v1h-2zM-32 -51h2v1h-2zM-26 -51h2v1h-2zM-23 -51h2v1h-2zM-18 -51h1v1h-1zM-15 -51h1v1h-1zM-11 -51h1v1h-1zM-9 -51h1v1h-1zM-7 -51h3v1h-3zM-1 -51h1v1h-1zM2 -51h1v1h-1zM4 -51h1v1h-1zM6 -51h4v1h-4zM12 -51h1v1h-1zM14 -51h3v1h-3zM18 -51h1v1h-1zM20 -51h1v1h-1zM22 -51h5v1h-5zM28 -51h1v1h-1zM32 -51h1v1h-1zM34 -51h4v1h-4zM39 -51h4v1h-4zM46 -51h1v1h-1zM49 -51h1v1h-1zM51 -51h2v1h-2zM54 -51h1v1h-1zM56 -51h2v1h-2zM62 -51h1v1h-1zM64 -51h3v1h-3zM70 -51h1v1h-1zM75 -51h1v1h-1zM77 -51h1v1h-1zM89 -51h1v1h-1zM91 -51h1v1h-1zM107 -51h1v1h-1zM-106 -50h1v1h-1zM-92 -50h2v1h-2zM-81 -50h1v1h-1zM-77 -50h1v1h-1zM-73 -50h3v1h-3zM-68 -50h1v1h-1zM-63 -50h1v1h-1zM-60 -50h3v1h-3zM-49 -50h1v1h-1zM-47 -50h1v1h-1zM-45 -50h1v1h-1zM-43 -50h2v1h-2zM-39 -50h2v1h-2zM-36 -50h1v1h-1zM-33 -50h2v1h-2zM-30 -50h1v1h-1zM-28 -50h2v1h-2zM-25 -50h1v1h-1zM-23 -50h1v1h-1zM-21 -50h4v1h-4zM-16 -50h2v1h-2zM-13 -50h1v1h-1zM-9 -50h2v1h-2zM-5 -50h10v1h-10zM6 -50h10v1h-10zM17 -50h3v1h-3zM21 -50h1v1h-1zM23 -50h1v1h-1zM25 -50h1v1h-1zM27 -50h5v1h-5zM33 -50h4v1h-4zM38 -50h3v1h-3zM43 -50h2v1h-2zM49 -50h1v1h-1zM52 -50h2v1h-2zM56 -50h1v1h-1zM58 -50h1v1h-1zM69 -50h1v1h-1zM71 -50h1v1h-1zM74 -50h1v1h-1zM89 -50h1v1h-1zM-117 -49h1v1h-1zM-88 -49h1v1h-1zM-84 -49h1v1h-1zM-76 -49h1v1h-1zM-74 -49h1v1h-1zM-66 -49h2v1h-2zM-62 -49h1v1h-1zM-60 -49h1v1h-1zM-56 -49h2v1h-2zM-53 -49h5v1h-5zM-47 -49h1v1h-1zM-45 -49h1v1h-1zM-41 -49h2v1h-2zM-38 -49h2v1h-2zM-33 -49h1v1h-1zM-31 -49h3v1h-3zM-27 -49h2v1h-2zM-21 -49h3v1h-3zM-17 -49h4v1h-4zM-12 -49h2v1h-2zM-9 -49h7v1h-7zM-1 -49h3v1h-3zM4 -49h1v1h-1zM7 -49h2v1h-2zM10 -49h8v1h-8zM19 -49h1v1h-1zM22 -49h6v1h-6zM29 -49h3v1h-3zM37 -49h5v1h-5zM43 -49h3v1h-3zM48 -49h2v1h-2zM56 -49h1v1h-1zM59 -49h1v1h-1zM64 -49h2v1h-2zM68 -49h1v1h-1zM79 -49h2v1h-2zM87 -49h1v1h-1zM96 -49h1v1h-1zM138 -49h1v1h-1zM-92 -48h1v1h-1zM-76 -48h2v1h-2zM-66 -48h2v1h-2zM-62 -48h1v1h-1zM-58 -48h1v1h-1zM-56 -48h1v1h-1zM-54 -48h1v1h-1zM-52 -48h1v1h-1zM-50 -48h2v1h-2zM-47 -48h1v1h-1zM-44 -48h1v1h-1zM-40 -48h1v1h-1zM-38 -48h2v1h-2zM-34 -48h2v1h-2zM-27 -48h1v1h-1zM-25 -48h2v1h-2zM-20 -48h2v1h-2zM-17 -48h2v1h-2zM-13 -48h12v1h-12zM0 -48h5v1h-5zM6 -48h2v1h-2zM9 -48h1v1h-1zM11 -48h5v1h-5zM17 -48h5v1h-5zM25 -48h1v1h-1zM27 -48h1v1h-1zM29 -48h2v1h-2zM33 -48h1v1h-1zM36 -48h1v1h-1zM39 -48h1v1h-1zM43 -48h1v1h-1zM45 -48h1v1h-1zM47 -48h1v1h-1zM51 -48h2v1h-2zM54 -48h2v1h-2zM62 -48h1v1h-1zM64 -48h3v1h-3zM71 -48h1v1h-1zM79 -48h2v1h-2zM95 -48h1v1h-1zM-109 -47h2v1h-2zM-106 -47h1v1h-1zM-100 -47h1v1h-1zM-90 -47h1v1h-1zM-85 -47h1v1h-1zM-74 -47h1v1h-1zM-68 -47h1v1h-1zM-65 -47h1v1h-1zM-54 -47h5v1h-5zM-45 -47h1v1h-1zM-43 -47h1v1h-1zM-39 -47h1v1h-1zM-37 -47h1v1h-1zM-35 -47h1v1h-1zM-33 -47h1v1h-1zM-31 -47h3v1h-3zM-26 -47h2v1h-2zM-23 -47h1v1h-1zM-21 -47h9v1h-9zM-10 -47h3v1h-3zM-6 -47h4v1h-4zM-1 -47h2v1h-2zM2 -47h1v1h-1zM5 -47h3v1h-3zM10 -47h1v1h-1zM12 -47h1v1h-1zM14 -47h4v1h-4zM20 -47h1v1h-1zM23 -47h2v1h-2zM27 -47h1v1h-1zM29 -47h1v1h-1zM31 -47h1v1h-1zM33 -47h8v1h-8zM44 -47h2v1h-2zM47 -47h2v1h-2zM50 -47h4v1h-4zM56 -47h1v1h-1zM58 -47h1v1h-1zM61 -47h1v1h-1zM64 -47h1v1h-1zM67 -47h4v1h-4zM77 -47h1v1h-1zM81 -47h1v1h-1zM95 -47h1v1h-1zM-96 -46h2v1h-2zM-80 -46h1v1h-1zM-69 -46h1v1h-1zM-66 -46h1v1h-1zM-62 -46h1v1h-1zM-55 -46h1v1h-1zM-51 -46h1v1h-1zM-48 -46h6v1h-6zM-41 -46h1v1h-1zM-38 -46h2v1h-2zM-33 -46h1v1h-1zM-31 -46h2v1h-2zM-27 -46h1v1h-1zM-25 -46h2v1h-2zM-16 -46h2v1h-2zM-13 -46h16v1h-16zM4 -46h2v1h-2zM7 -46h2v1h-2zM10 -46h4v1h-4zM15 -46h1v1h-1zM17 -46h6v1h-6zM24 -46h1v1h-1zM26 -46h3v1h-3zM31 -46h1v1h-1zM33 -46h1v1h-1zM36 -46h1v1h-1zM38 -46h1v1h-1zM40 -46h1v1h-1zM42 -46h3v1h-3zM46 -46h1v1h-1zM48 -46h1v1h-1zM51 -46h1v1h-1zM53 -46h2v1h-2zM59 -46h1v1h-1zM67 -46h1v1h-1zM70 -46h1v1h-1zM73 -46h2v1h-2zM76 -46h1v1h-1zM87 -46h1v1h-1zM89 -46h1v1h-1zM-77 -45h1v1h-1zM-73 -45h2v1h-2zM-64 -45h1v1h-1zM-62 -45h1v1h-1zM-56 -45h3v1h-3zM-52 -45h1v1h-1zM-39 -45h3v1h-3zM-33 -45h1v1h-1zM-30 -45h1v1h-1zM-28 -45h8v1h-8zM-19 -45h1v1h-1zM-17 -45h5v1h-5zM-11 -45h3v1h-3zM-7 -45h2v1h-2zM-3 -45h3v1h-3zM1 -45h2v1h-2zM6 -45h1v1h-1zM8 -45h1v1h-1zM11 -45h2v1h-2zM14 -45h2v1h-2zM19 -45h1v1h-1zM22 -45h3v1h-3zM30 -45h2v1h-2zM33 -45h2v1h-2zM36 -45h1v1h-1zM39 -45h1v1h-1zM41 -45h1v1h-1zM44 -45h4v1h-4zM49 -45h2v1h-2zM54 -45h2v1h-2zM63 -45h1v1h-1zM66 -45h1v1h-1zM69 -45h1v1h-1zM74 -45h1v1h-1zM76 -45h1v1h-1zM-108 -44h1v1h-1zM-99 -44h1v1h-1zM-96 -44h1v1h-1zM-77 -44h1v1h-1zM-74 -44h2v1h-2zM-70 -44h2v1h-2zM-64 -44h1v1h-1zM-57 -44h1v1h-1zM-55 -44h3v1h-3zM-51 -44h2v1h-2zM-48 -44h1v1h-1zM-45 -44h1v1h-1zM-42 -44h1v1h-1zM-36 -44h2v1h-2zM-30 -44h1v1h-1zM-28 -44h1v1h-1zM-21 -44h4v1h-4zM-14 -44h3v1h-3zM-10 -44h7v1h-7zM-2 -44h4v1h-4zM5 -44h1v1h-1zM9 -44h1v1h-1zM11 -44h4v1h-4zM17 -44h1v1h-1zM19 -44h1v1h-1zM21 -44h1v1h-1zM25 -44h1v1h-1zM27 -44h3v1h-3zM32 -44h2v1h-2zM35 -44h3v1h-3zM41 -44h1v1h-1zM49 -44h2v1h-2zM53 -44h1v1h-1zM56 -44h2v1h-2zM60 -44h1v1h-1zM62 -44h1v1h-1zM69 -44h1v1h-1zM72 -44h1v1h-1zM76 -44h1v1h-1zM79 -44h3v1h-3zM84 -44h1v1h-1zM106 -44h1v1h-1zM124 -44h1v1h-1zM-112 -43h1v1h-1zM-79 -43h2v1h-2zM-70 -43h1v1h-1zM-66 -43h2v1h-2zM-62 -43h1v1h-1zM-56 -43h1v1h-1zM-54 -43h10v1h-10zM-43 -43h2v1h-2zM-38 -43h2v1h-2zM-35 -43h1v1h-1zM-31 -43h2v1h-2zM-28 -43h1v1h-1zM-23 -43h3v1h-3zM-18 -43h2v1h-2zM-15 -43h5v1h-5zM-9 -43h2v1h-2zM-6 -43h1v1h-1zM-3 -43h4v1h-4zM3 -43h3v1h-3zM8 -43h1v1h-1zM10 -43h7v1h-7zM18 -43h3v1h-3zM25 -43h1v1h-1zM27 -43h1v1h-1zM31 -43h1v1h-1zM33 -43h2v1h-2zM37 -43h1v1h-1zM39 -43h2v1h-2zM42 -43h4v1h-4zM49 -43h2v1h-2zM52 -43h1v1h-1zM57 -43h1v1h-1zM60 -43h1v1h-1zM62 -43h1v1h-1zM71 -43h1v1h-1zM74 -43h1v1h-1zM79 -43h1v1h-1zM82 -43h2v1h-2zM85 -43h1v1h-1zM-106 -42h3v1h-3zM-93 -42h1v1h-1zM-83 -42h1v1h-1zM-81 -42h1v1h-1zM-76 -42h1v1h-1zM-72 -42h1v1h-1zM-63 -42h1v1h-1zM-59 -42h1v1h-1zM-53 -42h2v1h-2zM-50 -42h2v1h-2zM-43 -42h2v1h-2zM-39 -42h2v1h-2zM-34 -42h8v1h-8zM-23 -42h3v1h-3zM-18 -42h2v1h-2zM-15 -42h2v1h-2zM-11 -42h5v1h-5zM-5 -42h6v1h-6zM2 -42h6v1h-6zM9 -42h5v1h-5zM15 -42h1v1h-1zM17 -42h2v1h-2zM20 -42h1v1h-1zM22 -42h1v1h-1zM24 -42h1v1h-1zM26 -42h2v1h-2zM30 -42h2v1h-2zM33 -42h1v1h-1zM36 -42h1v1h-1zM38 -42h1v1h-1zM43 -42h1v1h-1zM45 -42h2v1h-2zM48 -42h1v1h-1zM52 -42h1v1h-1zM55 -42h1v1h-1zM60 -42h1v1h-1zM63 -42h1v1h-1zM66 -42h1v1h-1zM70 -42h1v1h-1zM77 -42h1v1h-1zM81 -42h3v1h-3zM89 -42h1v1h-1zM94 -42h1v1h-1zM-89 -41h1v1h-1zM-87 -41h1v1h-1zM-81 -41h3v1h-3zM-73 -41h1v1h-1zM-70 -41h1v1h-1zM-67 -41h1v1h-1zM-65 -41h1v1h-1zM-61 -41h5v1h-5zM-54 -41h1v1h-1zM-48 -41h1v1h-1zM-45 -41h1v1h-1zM-43 -41h1v1h-1zM-41 -41h2v1h-2zM-36 -41h2v1h-2zM-33 -41h1v1h-1zM-31 -41h1v1h-1zM-29 -41h1v1h-1zM-26 -41h1v1h-1zM-23 -41h2v1h-2zM-19 -41h2v1h-2zM-16 -41h1v1h-1zM-14 -41h2v1h-2zM-11 -41h1v1h-1zM-9 -41h3v1h-3zM-5 -41h2v1h-2zM-2 -41h3v1h-3zM3 -41h1v1h-1zM5 -41h2v1h-2zM8 -41h2v1h-2zM16 -41h6v1h-6zM30 -41h1v1h-1zM32 -41h5v1h-5zM38 -41h1v1h-1zM40 -41h3v1h-3zM44 -41h1v1h-1zM46 -41h1v1h-1zM48 -41h1v1h-1zM52 -41h2v1h-2zM58 -41h1v1h-1zM61 -41h1v1h-1zM64 -41h1v1h-1zM67 -41h1v1h-1zM82 -41h1v1h-1zM-101 -40h1v1h-1zM-99 -40h1v1h-1zM-87 -40h1v1h-1zM-85 -40h1v1h-1zM-73 -40h4v1h-4zM-65 -40h4v1h-4zM-50 -40h5v1h-5zM-43 -40h1v1h-1zM-39 -40h3v1h-3zM-31 -40h4v1h-4zM-26 -40h2v1h-2zM-22 -40h2v1h-2zM-19 -40h2v1h-2zM-16 -40h1v1h-1zM-14 -40h10v1h-10zM-3 -40h1v1h-1zM-1 -40h4v1h-4zM5 -40h8v1h-8zM14 -40h4v1h-4zM19 -40h7v1h-7zM27 -40h9v1h-9zM37 -40h2v1h-2zM40 -40h1v1h-1zM42 -40h2v1h-2zM45 -40h2v1h-2zM48 -40h1v1h-1zM58 -40h1v1h-1zM62 -40h2v1h-2zM66 -40h1v1h-1zM72 -40h1v1h-1zM74 -40h1v1h-1zM79 -40h1v1h-1zM84 -40h1v1h-1zM86 -40h1v1h-1zM92 -40h1v1h-1zM94 -40h1v1h-1zM101 -40h2v1h-2zM-103 -39h1v1h-1zM-85 -39h2v1h-2zM-74 -39h1v1h-1zM-70 -39h2v1h-2zM-61 -39h1v1h-1zM-51 -39h1v1h-1zM-47 -39h1v1h-1zM-42 -39h3v1h-3zM-38 -39h3v1h-3zM-34 -39h1v1h-1zM-31 -39h7v1h-7zM-22 -39h6v1h-6zM-15 -39h2v1h-2zM-11 -39h4v1h-4zM-6 -39h1v1h-1zM-4 -39h1v1h-1zM-2 -39h4v1h-4zM4 -39h2v1h-2zM7 -39h8v1h-8zM17 -39h1v1h-1zM21 -39h4v1h-4zM26 -39h2v1h-2zM29 -39h1v1h-1zM33 -39h5v1h-5zM39 -39h2v1h-2zM44 -39h1v1h-1zM49 -39h1v1h-1zM51 -39h2v1h-2zM57 -39h1v1h-1zM59 -39h2v1h-2zM65 -39h1v1h-1zM70 -39h1v1h-1zM75 -39h1v1h-1zM77 -39h1v1h-1zM79 -39h1v1h-1zM82 -39h1v1h-1zM84 -39h1v1h-1zM91 -39h1v1h-1zM113 -39h1v1h-1zM-95 -38h1v1h-1zM-83 -38h2v1h-2zM-75 -38h1v1h-1zM-67 -38h1v1h-1zM-64 -38h4v1h-4zM-58 -38h2v1h-2zM-52 -38h3v1h-3zM-47 -38h1v1h-1zM-44 -38h2v1h-2zM-40 -38h2v1h-2zM-37 -38h1v1h-1zM-34 -38h1v1h-1zM-32 -38h6v1h-6zM-25 -38h6v1h-6zM-18 -38h3v1h-3zM-14 -38h1v1h-1zM-12 -38h7v1h-7zM-4 -38h3v1h-3zM0 -38h2v1h-2zM4 -38h3v1h-3zM8 -38h4v1h-4zM14 -38h5v1h-5zM20 -38h5v1h-5zM26 -38h1v1h-1zM28 -38h3v1h-3zM32 -38h1v1h-1zM35 -38h3v1h-3zM39 -38h2v1h-2zM42 -38h1v1h-1zM44 -38h1v1h-1zM47 -38h2v1h-2zM59 -38h1v1h-1zM61 -38h3v1h-3zM66 -38h1v1h-1zM69 -38h1v1h-1zM76 -38h1v1h-1zM92 -38h1v1h-1zM100 -38h1v1h-1zM-91 -37h1v1h-1zM-86 -37h1v1h-1zM-84 -37h2v1h-2zM-62 -37h3v1h-3zM-58 -37h2v1h-2zM-53 -37h1v1h-1zM-50 -37h3v1h-3zM-45 -37h2v1h-2zM-42 -37h1v1h-1zM-39 -37h3v1h-3zM-35 -37h2v1h-2zM-32 -37h1v1h-1zM-30 -37h7v1h-7zM-22 -37h4v1h-4zM-16 -37h5v1h-5zM-10 -37h1v1h-1zM-8 -37h2v1h-2zM-5 -37h3v1h-3zM-1 -37h6v1h-6zM7 -37h12v1h-12zM20 -37h3v1h-3zM24 -37h1v1h-1zM26 -37h1v1h-1zM28 -37h3v1h-3zM32 -37h2v1h-2zM35 -37h2v1h-2zM40 -37h1v1h-1zM43 -37h1v1h-1zM45 -37h2v1h-2zM48 -37h8v1h-8zM58 -37h1v1h-1zM61 -37h1v1h-1zM66 -37h3v1h-3zM73 -37h1v1h-1zM75 -37h1v1h-1zM84 -37h1v1h-1zM103 -37h1v1h-1zM107 -37h1v1h-1zM-99 -36h2v1h-2zM-86 -36h1v1h-1zM-75 -36h1v1h-1zM-67 -36h4v1h-4zM-59 -36h1v1h-1zM-56 -36h1v1h-1zM-53 -36h3v1h-3zM-49 -36h1v1h-1zM-47 -36h4v1h-4zM-42 -36h2v1h-2zM-37 -36h1v1h-1zM-35 -36h1v1h-1zM-33 -36h6v1h-6zM-25 -36h4v1h-4zM-20 -36h1v1h-1zM-18 -36h6v1h-6zM-11 -36h3v1h-3zM-6 -36h8v1h-8zM3 -36h6v1h-6zM10 -36h1v1h-1zM12 -36h6v1h-6zM20 -36h3v1h-3zM24 -36h1v1h-1zM26 -36h3v1h-3zM32 -36h1v1h-1zM34 -36h2v1h-2zM37 -36h1v1h-1zM39 -36h5v1h-5zM45 -36h1v1h-1zM50 -36h1v1h-1zM57 -36h1v1h-1zM60 -36h1v1h-1zM68 -36h1v1h-1zM77 -36h1v1h-1zM85 -36h1v1h-1zM91 -36h1v1h-1zM-112 -35h1v1h-1zM-94 -35h1v1h-1zM-91 -35h3v1h-3zM-87 -35h1v1h-1zM-83 -35h1v1h-1zM-73 -35h1v1h-1zM-70 -35h2v1h-2zM-64 -35h3v1h-3zM-57 -35h1v1h-1zM-54 -35h3v1h-3zM-49 -35h1v1h-1zM-47 -35h5v1h-5zM-40 -35h1v1h-1zM-37 -35h1v1h-1zM-33 -35h3v1h-3zM-29 -35h2v1h-2zM-24 -35h4v1h-4zM-18 -35h3v1h-3zM-14 -35h4v1h-4zM-9 -35h9v1h-9zM1 -35h9v1h-9zM12 -35h5v1h-5zM18 -35h1v1h-1zM20 -35h3v1h-3zM24 -35h1v1h-1zM26 -35h1v1h-1zM29 -35h4v1h-4zM36 -35h1v1h-1zM38 -35h2v1h-2zM41 -35h3v1h-3zM49 -35h2v1h-2zM52 -35h1v1h-1zM57 -35h3v1h-3zM63 -35h1v1h-1zM65 -35h4v1h-4zM70 -35h2v1h-2zM73 -35h1v1h-1zM76 -35h1v1h-1zM87 -35h1v1h-1zM91 -35h1v1h-1zM94 -35h1v1h-1zM126 -35h1v1h-1zM142 -35h1v1h-1zM-127 -34h1v1h-1zM-119 -34h1v1h-1zM-98 -34h1v1h-1zM-94 -34h1v1h-1zM-91 -34h1v1h-1zM-83 -34h1v1h-1zM-78 -34h1v1h-1zM-76 -34h3v1h-3zM-72 -34h1v1h-1zM-69 -34h3v1h-3zM-64 -34h2v1h-2zM-61 -34h1v1h-1zM-59 -34h1v1h-1zM-56 -34h1v1h-1zM-53 -34h1v1h-1zM-51 -34h3v1h-3zM-47 -34h2v1h-2zM-43 -34h3v1h-3zM-39 -34h3v1h-3zM-33 -34h1v1h-1zM-31 -34h1v1h-1zM-29 -34h7v1h-7zM-21 -34h2v1h-2zM-18 -34h2v1h-2zM-12 -34h4v1h-4zM-7 -34h8v1h-8zM2 -34h1v1h-1zM4 -34h1v1h-1zM7 -34h5v1h-5zM15 -34h1v1h-1zM17 -34h5v1h-5zM24 -34h7v1h-7zM34 -34h2v1h-2zM37 -34h1v1h-1zM39 -34h1v1h-1zM41 -34h1v1h-1zM44 -34h3v1h-3zM48 -34h1v1h-1zM50 -34h2v1h-2zM55 -34h3v1h-3zM63 -34h1v1h-1zM65 -34h2v1h-2zM71 -34h2v1h-2zM74 -34h1v1h-1zM77 -34h1v1h-1zM83 -34h2v1h-2zM92 -34h1v1h-1zM100 -34h1v1h-1zM105 -34h1v1h-1zM118 -34h1v1h-1zM-106 -33h1v1h-1zM-88 -33h1v1h-1zM-86 -33h1v1h-1zM-84 -33h3v1h-3zM-73 -33h1v1h-1zM-69 -33h3v1h-3zM-63 -33h1v1h-1zM-61 -33h2v1h-2zM-58 -33h1v1h-1zM-56 -33h2v1h-2zM-52 -33h1v1h-1zM-49 -33h3v1h-3zM-45 -33h1v1h-1zM-43 -33h4v1h-4zM-38 -33h1v1h-1zM-36 -33h5v1h-5zM-30 -33h1v1h-1zM-28 -33h2v1h-2zM-25 -33h2v1h-2zM-22 -33h3v1h-3zM-18 -33h9v1h-9zM-8 -33h10v1h-10zM3 -33h3v1h-3zM7 -33h9v1h-9zM17 -33h5v1h-5zM23 -33h1v1h-1zM25 -33h1v1h-1zM27 -33h1v1h-1zM29 -33h4v1h-4zM35 -33h1v1h-1zM37 -33h7v1h-7zM45 -33h1v1h-1zM47 -33h4v1h-4zM53 -33h1v1h-1zM55 -33h2v1h-2zM59 -33h4v1h-4zM66 -33h2v1h-2zM69 -33h1v1h-1zM71 -33h1v1h-1zM73 -33h1v1h-1zM87 -33h1v1h-1zM-95 -32h3v1h-3zM-91 -32h1v1h-1zM-87 -32h1v1h-1zM-82 -32h2v1h-2zM-76 -32h1v1h-1zM-74 -32h1v1h-1zM-70 -32h3v1h-3zM-65 -32h2v1h-2zM-59 -32h1v1h-1zM-48 -32h2v1h-2zM-45 -32h5v1h-5zM-38 -32h1v1h-1zM-36 -32h2v1h-2zM-32 -32h6v1h-6zM-23 -32h11v1h-11zM-11 -32h10v1h-10zM0 -32h4v1h-4zM5 -32h13v1h-13zM20 -32h2v1h-2zM23 -32h1v1h-1zM25 -32h4v1h-4zM30 -32h5v1h-5zM37 -32h5v1h-5zM43 -32h3v1h-3zM47 -32h1v1h-1zM49 -32h1v1h-1zM53 -32h1v1h-1zM55 -32h1v1h-1zM60 -32h1v1h-1zM63 -32h2v1h-2zM67 -32h1v1h-1zM74 -32h2v1h-2zM78 -32h1v1h-1zM92 -32h1v1h-1zM94 -32h1v1h-1zM100 -32h1v1h-1zM104 -32h1v1h-1zM-107 -31h1v1h-1zM-96 -31h2v1h-2zM-84 -31h1v1h-1zM-74 -31h1v1h-1zM-69 -31h2v1h-2zM-66 -31h1v1h-1zM-64 -31h1v1h-1zM-62 -31h5v1h-5zM-56 -31h1v1h-1zM-54 -31h3v1h-3zM-49 -31h1v1h-1zM-46 -31h4v1h-4zM-40 -31h2v1h-2zM-37 -31h2v1h-2zM-33 -31h4v1h-4zM-28 -31h2v1h-2zM-24 -31h1v1h-1zM-22 -31h5v1h-5zM-16 -31h6v1h-6zM-9 -31h5v1h-5zM-1 -31h14v1h-14zM14 -31h13v1h-13zM28 -31h2v1h-2zM33 -31h1v1h-1zM39 -31h4v1h-4zM44 -31h1v1h-1zM46 -31h3v1h-3zM59 -31h1v1h-1zM71 -31h1v1h-1zM76 -31h1v1h-1zM80 -31h1v1h-1zM83 -31h2v1h-2zM93 -31h1v1h-1zM104 -31h1v1h-1zM108 -31h1v1h-1zM-108 -30h1v1h-1zM-87 -30h1v1h-1zM-84 -30h1v1h-1zM-70 -30h1v1h-1zM-67 -30h1v1h-1zM-65 -30h1v1h-1zM-63 -30h4v1h-4zM-58 -30h1v1h-1zM-56 -30h2v1h-2zM-52 -30h2v1h-2zM-48 -30h2v1h-2zM-44 -30h3v1h-3zM-40 -30h2v1h-2zM-37 -30h3v1h-3zM-33 -30h4v1h-4zM-28 -30h2v1h-2zM-25 -30h1v1h-1zM-23 -30h2v1h-2zM-20 -30h1v1h-1zM-18 -30h15v1h-15zM-2 -30h10v1h-10zM9 -30h1v1h-1zM11 -30h10v1h-10zM22 -30h1v1h-1zM26 -30h5v1h-5zM32 -30h2v1h-2zM35 -30h1v1h-1zM37 -30h2v1h-2zM41 -30h1v1h-1zM44 -30h1v1h-1zM46 -30h1v1h-1zM48 -30h1v1h-1zM50 -30h2v1h-2zM54 -30h2v1h-2zM58 -30h2v1h-2zM62 -30h2v1h-2zM69 -30h1v1h-1zM71 -30h1v1h-1zM73 -30h1v1h-1zM77 -30h1v1h-1zM80 -30h1v1h-1zM84 -30h1v1h-1zM87 -30h1v1h-1zM90 -30h1v1h-1zM98 -30h1v1h-1zM-118 -29h1v1h-1zM-108 -29h1v1h-1zM-104 -29h1v1h-1zM-101 -29h2v1h-2zM-95 -29h1v1h-1zM-91 -29h1v1h-1zM-87 -29h1v1h-1zM-84 -29h1v1h-1zM-80 -29h1v1h-1zM-78 -29h1v1h-1zM-76 -29h2v1h-2zM-69 -29h3v1h-3zM-57 -29h1v1h-1zM-52 -29h1v1h-1zM-48 -29h1v1h-1zM-46 -29h7v1h-7zM-38 -29h2v1h-2zM-34 -29h1v1h-1zM-31 -29h3v1h-3zM-26 -29h2v1h-2zM-23 -29h9v1h-9zM-12 -29h1v1h-1zM-10 -29h3v1h-3zM-5 -29h16v1h-16zM12 -29h1v1h-1zM14 -29h1v1h-1zM17 -29h1v1h-1zM19 -29h3v1h-3zM23 -29h6v1h-6zM31 -29h7v1h-7zM43 -29h1v1h-1zM46 -29h2v1h-2zM50 -29h2v1h-2zM53 -29h1v1h-1zM55 -29h1v1h-1zM60 -29h1v1h-1zM62 -29h1v1h-1zM65 -29h1v1h-1zM67 -29h2v1h-2zM72 -29h3v1h-3zM81 -29h3v1h-3zM87 -29h1v1h-1zM89 -29h1v1h-1zM91 -29h2v1h-2zM105 -29h1v1h-1zM115 -29h1v1h-1zM-95 -28h3v1h-3zM-89 -28h1v1h-1zM-86 -28h1v1h-1zM-83 -28h1v1h-1zM-77 -28h1v1h-1zM-71 -28h2v1h-2zM-67 -28h1v1h-1zM-63 -28h2v1h-2zM-60 -28h1v1h-1zM-56 -28h2v1h-2zM-52 -28h2v1h-2zM-48 -28h1v1h-1zM-46 -28h1v1h-1zM-43 -28h3v1h-3zM-35 -28h2v1h-2zM-30 -28h2v1h-2zM-26 -28h2v1h-2zM-22 -28h2v1h-2zM-19 -28h4v1h-4zM-14 -28h9v1h-9zM-4 -28h2v1h-2zM-1 -28h1v1h-1zM2 -28h10v1h-10zM13 -28h2v1h-2zM16 -28h5v1h-5zM22 -28h3v1h-3zM27 -28h2v1h-2zM33 -28h2v1h-2zM36 -28h4v1h-4zM41 -28h5v1h-5zM47 -28h2v1h-2zM50 -28h6v1h-6zM65 -28h2v1h-2zM69 -28h1v1h-1zM86 -28h1v1h-1zM103 -28h1v1h-1zM109 -28h1v1h-1zM-114 -27h1v1h-1zM-93 -27h1v1h-1zM-81 -27h1v1h-1zM-78 -27h2v1h-2zM-70 -27h1v1h-1zM-65 -27h2v1h-2zM-60 -27h2v1h-2zM-54 -27h2v1h-2zM-51 -27h1v1h-1zM-49 -27h6v1h-6zM-42 -27h3v1h-3zM-38 -27h2v1h-2zM-35 -27h2v1h-2zM-31 -27h3v1h-3zM-27 -27h5v1h-5zM-21 -27h2v1h-2zM-18 -27h2v1h-2zM-15 -27h8v1h-8zM-5 -27h3v1h-3zM-1 -27h16v1h-16zM16 -27h3v1h-3zM20 -27h1v1h-1zM22 -27h1v1h-1zM25 -27h2v1h-2zM31 -27h5v1h-5zM38 -27h4v1h-4zM44 -27h4v1h-4zM50 -27h1v1h-1zM52 -27h1v1h-1zM54 -27h1v1h-1zM56 -27h1v1h-1zM59 -27h1v1h-1zM61 -27h1v1h-1zM67 -27h1v1h-1zM70 -27h1v1h-1zM73 -27h1v1h-1zM77 -27h2v1h-2zM80 -27h1v1h-1zM82 -27h1v1h-1zM84 -27h1v1h-1zM86 -27h1v1h-1zM88 -27h2v1h-2zM103 -27h1v1h-1zM-119 -26h1v1h-1zM-103 -26h1v1h-1zM-96 -26h1v1h-1zM-89 -26h1v1h-1zM-86 -26h3v1h-3zM-76 -26h1v1h-1zM-71 -26h1v1h-1zM-69 -26h2v1h-2zM-65 -26h1v1h-1zM-63 -26h4v1h-4zM-58 -26h1v1h-1zM-56 -26h1v1h-1zM-53 -26h3v1h-3zM-48 -26h1v1h-1zM-46 -26h3v1h-3zM-40 -26h2v1h-2zM-37 -26h1v1h-1zM-34 -26h4v1h-4zM-29 -26h5v1h-5zM-23 -26h9v1h-9zM-13 -26h3v1h-3zM-9 -26h12v1h-12zM4 -26h2v1h-2zM7 -26h11v1h-11zM19 -26h6v1h-6zM26 -26h6v1h-6zM33 -26h1v1h-1zM35 -26h3v1h-3zM43 -26h1v1h-1zM46 -26h1v1h-1zM54 -26h1v1h-1zM58 -26h2v1h-2zM61 -26h2v1h-2zM64 -26h1v1h-1zM72 -26h1v1h-1zM84 -26h1v1h-1zM109 -26h1v1h-1zM-114 -25h1v1h-1zM-97 -25h1v1h-1zM-94 -25h1v1h-1zM-90 -25h1v1h-1zM-88 -25h1v1h-1zM-82 -25h1v1h-1zM-78 -25h1v1h-1zM-76 -25h2v1h-2zM-70 -25h3v1h-3zM-66 -25h1v1h-1zM-63 -25h2v1h-2zM-58 -25h2v1h-2zM-55 -25h2v1h-2zM-52 -25h1v1h-1zM-49 -25h5v1h-5zM-43 -25h3v1h-3zM-39 -25h10v1h-10zM-27 -25h13v1h-13zM-13 -25h5v1h-5zM-7 -25h2v1h-2zM-4 -25h12v1h-12zM9 -25h10v1h-10zM20 -25h7v1h-7zM28 -25h2v1h-2zM32 -25h2v1h-2zM36 -25h5v1h-5zM42 -25h1v1h-1zM45 -25h1v1h-1zM47 -25h1v1h-1zM49 -25h1v1h-1zM51 -25h1v1h-1zM53 -25h1v1h-1zM55 -25h3v1h-3zM60 -25h1v1h-1zM64 -25h1v1h-1zM66 -25h1v1h-1zM68 -25h1v1h-1zM73 -25h1v1h-1zM81 -25h1v1h-1zM90 -25h3v1h-3zM96 -25h1v1h-1zM-97 -24h3v1h-3zM-80 -24h1v1h-1zM-74 -24h1v1h-1zM-72 -24h1v1h-1zM-70 -24h1v1h-1zM-67 -24h1v1h-1zM-64 -24h1v1h-1zM-61 -24h1v1h-1zM-58 -24h1v1h-1zM-55 -24h8v1h-8zM-44 -24h3v1h-3zM-40 -24h2v1h-2zM-37 -24h2v1h-2zM-33 -24h1v1h-1zM-30 -24h3v1h-3zM-26 -24h12v1h-12zM-13 -24h5v1h-5zM-7 -24h11v1h-11zM5 -24h5v1h-5zM11 -24h2v1h-2zM14 -24h1v1h-1zM16 -24h3v1h-3zM20 -24h6v1h-6zM31 -24h2v1h-2zM34 -24h7v1h-7zM42 -24h2v1h-2zM46 -24h1v1h-1zM48 -24h1v1h-1zM50 -24h1v1h-1zM53 -24h1v1h-1zM55 -24h1v1h-1zM58 -24h1v1h-1zM60 -24h1v1h-1zM62 -24h1v1h-1zM66 -24h1v1h-1zM75 -24h1v1h-1zM79 -24h1v1h-1zM84 -24h1v1h-1zM-106 -23h1v1h-1zM-94 -23h1v1h-1zM-89 -23h1v1h-1zM-86 -23h1v1h-1zM-81 -23h2v1h-2zM-77 -23h1v1h-1zM-75 -23h2v1h-2zM-67 -23h1v1h-1zM-63 -23h1v1h-1zM-60 -23h3v1h-3zM-54 -23h1v1h-1zM-51 -23h3v1h-3zM-47 -23h2v1h-2zM-44 -23h5v1h-5zM-37 -23h2v1h-2zM-34 -23h1v1h-1zM-32 -23h1v1h-1zM-30 -23h42v1h-42zM13 -23h1v1h-1zM15 -23h1v1h-1zM17 -23h2v1h-2zM20 -23h5v1h-5zM27 -23h10v1h-10zM38 -23h3v1h-3zM42 -23h1v1h-1zM45 -23h2v1h-2zM48 -23h1v1h-1zM53 -23h1v1h-1zM55 -23h3v1h-3zM59 -23h1v1h-1zM62 -23h1v1h-1zM65 -23h3v1h-3zM71 -23h1v1h-1zM74 -23h1v1h-1zM79 -23h2v1h-2zM85 -23h1v1h-1zM89 -23h2v1h-2zM93 -23h1v1h-1zM96 -23h1v1h-1zM-113 -22h1v1h-1zM-100 -22h1v1h-1zM-94 -22h1v1h-1zM-92 -22h1v1h-1zM-90 -22h2v1h-2zM-82 -22h1v1h-1zM-77 -22h2v1h-2zM-74 -22h2v1h-2zM-67 -22h2v1h-2zM-60 -22h1v1h-1zM-57 -22h4v1h-4zM-52 -22h2v1h-2zM-49 -22h2v1h-2zM-45 -22h5v1h-5zM-39 -22h4v1h-4zM-34 -22h1v1h-1zM-32 -22h2v1h-2zM-29 -22h2v1h-2zM-26 -22h8v1h-8zM-17 -22h19v1h-19zM3 -22h2v1h-2zM6 -22h3v1h-3zM10 -22h6v1h-6zM17 -22h9v1h-9zM27 -22h1v1h-1zM29 -22h1v1h-1zM31 -22h1v1h-1zM33 -22h1v1h-1zM38 -22h1v1h-1zM40 -22h4v1h-4zM45 -22h1v1h-1zM47 -22h3v1h-3zM51 -22h1v1h-1zM55 -22h1v1h-1zM59 -22h1v1h-1zM61 -22h3v1h-3zM68 -22h1v1h-1zM71 -22h1v1h-1zM80 -22h3v1h-3zM-119 -21h1v1h-1zM-105 -21h1v1h-1zM-87 -21h1v1h-1zM-83 -21h2v1h-2zM-80 -21h1v1h-1zM-76 -21h1v1h-1zM-74 -21h3v1h-3zM-68 -21h1v1h-1zM-65 -21h2v1h-2zM-62 -21h4v1h-4zM-56 -21h2v1h-2zM-53 -21h2v1h-2zM-49 -21h5v1h-5zM-43 -21h2v1h-2zM-40 -21h7v1h-7zM-32 -21h4v1h-4zM-27 -21h10v1h-10zM-16 -21h1v1h-1zM-13 -21h18v1h-18zM6 -21h13v1h-13zM20 -21h1v1h-1zM22 -21h3v1h-3zM26 -21h2v1h-2zM29 -21h2v1h-2zM32 -21h3v1h-3zM37 -21h9v1h-9zM47 -21h2v1h-2zM51 -21h1v1h-1zM54 -21h1v1h-1zM57 -21h1v1h-1zM59 -21h1v1h-1zM63 -21h1v1h-1zM66 -21h1v1h-1zM68 -21h1v1h-1zM70 -21h2v1h-2zM75 -21h1v1h-1zM77 -21h2v1h-2zM83 -21h2v1h-2zM89 -21h1v1h-1zM99 -21h1v1h-1zM-108 -20h1v1h-1zM-105 -20h2v1h-2zM-90 -20h1v1h-1zM-87 -20h1v1h-1zM-85 -20h2v1h-2zM-77 -20h1v1h-1zM-74 -20h1v1h-1zM-71 -20h1v1h-1zM-67 -20h2v1h-2zM-64 -20h2v1h-2zM-60 -20h1v1h-1zM-53 -20h2v1h-2zM-50 -20h2v1h-2zM-47 -20h4v1h-4zM-42 -20h1v1h-1zM-39 -20h4v1h-4zM-34 -20h2v1h-2zM-31 -20h1v1h-1zM-28 -20h3v1h-3zM-23 -20h19v1h-19zM-3 -20h1v1h-1zM-1 -20h31v1h-31zM31 -20h1v1h-1zM34 -20h2v1h-2zM37 -20h2v1h-2zM40 -20h2v1h-2zM44 -20h1v1h-1zM47 -20h6v1h-6zM54 -20h1v1h-1zM59 -20h1v1h-1zM61 -20h3v1h-3zM67 -20h1v1h-1zM72 -20h1v1h-1zM80 -20h1v1h-1zM84 -20h1v1h-1zM87 -20h1v1h-1zM95 -20h2v1h-2zM110 -20h1v1h-1zM-96 -19h1v1h-1zM-88 -19h1v1h-1zM-75 -19h1v1h-1zM-72 -19h2v1h-2zM-67 -19h1v1h-1zM-65 -19h14v1h-14zM-50 -19h4v1h-4zM-44 -19h2v1h-2zM-41 -19h2v1h-2zM-38 -19h1v1h-1zM-35 -19h1v1h-1zM-32 -19h1v1h-1zM-30 -19h1v1h-1zM-27 -19h24v1h-24zM-2 -19h7v1h-7zM7 -19h13v1h-13zM22 -19h1v1h-1zM25 -19h8v1h-8zM34 -19h2v1h-2zM37 -19h2v1h-2zM40 -19h1v1h-1zM42 -19h1v1h-1zM44 -19h1v1h-1zM47 -19h1v1h-1zM49 -19h4v1h-4zM54 -19h1v1h-1zM59 -19h1v1h-1zM61 -19h1v1h-1zM63 -19h2v1h-2zM66 -19h2v1h-2zM69 -19h1v1h-1zM74 -19h3v1h-3zM114 -19h1v1h-1zM122 -19h1v1h-1zM128 -19h1v1h-1zM-118 -18h1v1h-1zM-100 -18h1v1h-1zM-95 -18h1v1h-1zM-85 -18h1v1h-1zM-83 -18h1v1h-1zM-78 -18h1v1h-1zM-74 -18h2v1h-2zM-70 -18h1v1h-1zM-63 -18h2v1h-2zM-60 -18h2v1h-2zM-56 -18h2v1h-2zM-53 -18h3v1h-3zM-49 -18h4v1h-4zM-40 -18h1v1h-1zM-36 -18h1v1h-1zM-34 -18h8v1h-8zM-25 -18h9v1h-9zM-15 -18h3v1h-3zM-11 -18h9v1h-9zM-1 -18h2v1h-2zM2 -18h32v1h-32zM35 -18h5v1h-5zM41 -18h1v1h-1zM43 -18h4v1h-4zM48 -18h1v1h-1zM53 -18h4v1h-4zM60 -18h2v1h-2zM63 -18h2v1h-2zM67 -18h2v1h-2zM72 -18h1v1h-1zM75 -18h2v1h-2zM86 -18h1v1h-1zM89 -18h1v1h-1zM93 -18h1v1h-1zM110 -18h1v1h-1zM-117 -17h1v1h-1zM-104 -17h1v1h-1zM-101 -17h1v1h-1zM-99 -17h1v1h-1zM-97 -17h1v1h-1zM-91 -17h1v1h-1zM-84 -17h1v1h-1zM-81 -17h2v1h-2zM-73 -17h1v1h-1zM-70 -17h1v1h-1zM-68 -17h1v1h-1zM-61 -17h1v1h-1zM-58 -17h8v1h-8zM-49 -17h1v1h-1zM-47 -17h1v1h-1zM-44 -17h37v1h-37zM-6 -17h15v1h-15zM11 -17h7v1h-7zM20 -17h8v1h-8zM29 -17h4v1h-4zM34 -17h2v1h-2zM37 -17h4v1h-4zM42 -17h1v1h-1zM44 -17h7v1h-7zM53 -17h6v1h-6zM62 -17h1v1h-1zM68 -17h1v1h-1zM75 -17h5v1h-5zM87 -17h2v1h-2zM92 -17h1v1h-1zM96 -17h1v1h-1zM101 -17h4v1h-4zM-106 -16h1v1h-1zM-104 -16h1v1h-1zM-86 -16h1v1h-1zM-82 -16h1v1h-1zM-77 -16h1v1h-1zM-74 -16h1v1h-1zM-70 -16h2v1h-2zM-63 -16h4v1h-4zM-57 -16h1v1h-1zM-55 -16h3v1h-3zM-51 -16h1v1h-1zM-48 -16h1v1h-1zM-45 -16h1v1h-1zM-43 -16h2v1h-2zM-37 -16h22v1h-22zM-14 -16h5v1h-5zM-8 -16h9v1h-9zM2 -16h15v1h-15zM18 -16h16v1h-16zM35 -16h3v1h-3zM39 -16h1v1h-1zM41 -16h2v1h-2zM44 -16h1v1h-1zM46 -16h1v1h-1zM48 -16h1v1h-1zM51 -16h2v1h-2zM54 -16h2v1h-2zM61 -16h1v1h-1zM63 -16h1v1h-1zM68 -16h1v1h-1zM74 -16h1v1h-1zM76 -16h3v1h-3zM80 -16h1v1h-1zM86 -16h1v1h-1zM91 -16h1v1h-1zM99 -16h1v1h-1zM106 -16h1v1h-1zM146 -16h1v1h-1zM-101 -15h1v1h-1zM-90 -15h1v1h-1zM-87 -15h1v1h-1zM-83 -15h1v1h-1zM-74 -15h1v1h-1zM-72 -15h1v1h-1zM-70 -15h1v1h-1zM-67 -15h3v1h-3zM-63 -15h2v1h-2zM-58 -15h2v1h-2zM-54 -15h2v1h-2zM-51 -15h1v1h-1zM-48 -15h4v1h-4zM-43 -15h2v1h-2zM-40 -15h5v1h-5zM-32 -15h3v1h-3zM-28 -15h4v1h-4zM-23 -15h33v1h-33zM11 -15h5v1h-5zM17 -15h6v1h-6zM24 -15h2v1h-2zM27 -15h1v1h-1zM29 -15h4v1h-4zM35 -15h3v1h-3zM39 -15h1v1h-1zM41 -15h2v1h-2zM44 -15h4v1h-4zM49 -15h1v1h-1zM51 -15h2v1h-2zM54 -15h1v1h-1zM56 -15h4v1h-4zM61 -15h2v1h-2zM65 -15h8v1h-8zM82 -15h3v1h-3zM87 -15h1v1h-1zM89 -15h2v1h-2zM97 -15h1v1h-1zM99 -15h1v1h-1zM102 -15h1v1h-1zM-141 -14h1v1h-1zM-132 -14h1v1h-1zM-104 -14h1v1h-1zM-92 -14h1v1h-1zM-87 -14h1v1h-1zM-84 -14h1v1h-1zM-77 -14h1v1h-1zM-74 -14h1v1h-1zM-72 -14h1v1h-1zM-69 -14h2v1h-2zM-61 -14h2v1h-2zM-58 -14h3v1h-3zM-53 -14h16v1h-16zM-34 -14h9v1h-9zM-24 -14h7v1h-7zM-16 -14h26v1h-26zM11 -14h7v1h-7zM19 -14h5v1h-5zM25 -14h7v1h-7zM33 -14h7v1h-7zM42 -14h5v1h-5zM48 -14h1v1h-1zM53 -14h3v1h-3zM60 -14h3v1h-3zM66 -14h2v1h-2zM71 -14h2v1h-2zM74 -14h3v1h-3zM88 -14h1v1h-1zM94 -14h2v1h-2zM98 -14h1v1h-1zM101 -14h1v1h-1zM105 -14h1v1h-1zM-120 -13h1v1h-1zM-118 -13h1v1h-1zM-96 -13h1v1h-1zM-81 -13h1v1h-1zM-78 -13h2v1h-2zM-74 -13h2v1h-2zM-68 -13h1v1h-1zM-66 -13h2v1h-2zM-63 -13h1v1h-1zM-61 -13h1v1h-1zM-57 -13h1v1h-1zM-54 -13h1v1h-1zM-51 -13h6v1h-6zM-44 -13h5v1h-5zM-38 -13h1v1h-1zM-36 -13h2v1h-2zM-33 -13h1v1h-1zM-31 -13h2v1h-2zM-28 -13h23v1h-23zM-4 -13h22v1h-22zM19 -13h15v1h-15zM35 -13h6v1h-6zM43 -13h2v1h-2zM46 -13h2v1h-2zM50 -13h5v1h-5zM58 -13h1v1h-1zM70 -13h1v1h-1zM75 -13h2v1h-2zM84 -13h1v1h-1zM86 -13h1v1h-1zM88 -13h1v1h-1zM94 -13h1v1h-1zM-142 -12h1v1h-1zM-92 -12h1v1h-1zM-90 -12h1v1h-1zM-87 -12h1v1h-1zM-82 -12h2v1h-2zM-79 -12h1v1h-1zM-77 -12h1v1h-1zM-75 -12h1v1h-1zM-70 -12h1v1h-1zM-68 -12h2v1h-2zM-65 -12h1v1h-1zM-62 -12h1v1h-1zM-60 -12h1v1h-1zM-57 -12h1v1h-1zM-54 -12h2v1h-2zM-51 -12h4v1h-4zM-46 -12h3v1h-3zM-42 -12h2v1h-2zM-38 -12h10v1h-10zM-27 -12h25v1h-25zM-1 -12h10v1h-10zM10 -12h20v1h-20zM31 -12h3v1h-3zM35 -12h5v1h-5zM41 -12h2v1h-2zM44 -12h1v1h-1zM47 -12h2v1h-2zM51 -12h1v1h-1zM53 -12h1v1h-1zM57 -12h4v1h-4zM64 -12h2v1h-2zM67 -12h1v1h-1zM71 -12h2v1h-2zM75 -12h2v1h-2zM78 -12h1v1h-1zM80 -12h1v1h-1zM89 -12h1v1h-1zM91 -12h1v1h-1zM106 -12h1v1h-1zM-105 -11h1v1h-1zM-103 -11h1v1h-1zM-95 -11h1v1h-1zM-90 -11h1v1h-1zM-86 -11h1v1h-1zM-83 -11h1v1h-1zM-79 -11h2v1h-2zM-76 -11h2v1h-2zM-70 -11h2v1h-2zM-66 -11h1v1h-1zM-63 -11h2v1h-2zM-60 -11h4v1h-4zM-55 -11h1v1h-1zM-53 -11h1v1h-1zM-50 -11h1v1h-1zM-47 -11h1v1h-1zM-45 -11h1v1h-1zM-43 -11h5v1h-5zM-37 -11h3v1h-3zM-32 -11h3v1h-3zM-28 -11h19v1h-19zM-8 -11h29v1h-29zM22 -11h9v1h-9zM32 -11h9v1h-9zM45 -11h3v1h-3zM49 -11h1v1h-1zM51 -11h3v1h-3zM55 -11h1v1h-1zM57 -11h1v1h-1zM59 -11h1v1h-1zM62 -11h1v1h-1zM64 -11h2v1h-2zM68 -11h1v1h-1zM70 -11h1v1h-1zM72 -11h3v1h-3zM79 -11h1v1h-1zM81 -11h1v1h-1zM86 -11h2v1h-2zM91 -11h1v1h-1zM116 -11h1v1h-1zM124 -11h1v1h-1zM-111 -10h1v1h-1zM-99 -10h1v1h-1zM-86 -10h1v1h-1zM-84 -10h2v1h-2zM-80 -10h1v1h-1zM-73 -10h1v1h-1zM-71 -10h1v1h-1zM-68 -10h1v1h-1zM-65 -10h1v1h-1zM-61 -10h1v1h-1zM-55 -10h2v1h-2zM-48 -10h13v1h-13zM-34 -10h1v1h-1zM-32 -10h3v1h-3zM-28 -10h27v1h-27zM0 -10h11v1h-11zM12 -10h14v1h-14zM27 -10h5v1h-5zM34 -10h6v1h-6zM41 -10h3v1h-3zM45 -10h1v1h-1zM47 -10h5v1h-5zM54 -10h1v1h-1zM57 -10h1v1h-1zM60 -10h2v1h-2zM63 -10h2v1h-2zM67 -10h2v1h-2zM72 -10h1v1h-1zM76 -10h1v1h-1zM79 -10h1v1h-1zM81 -10h2v1h-2zM88 -10h1v1h-1zM102 -10h1v1h-1zM120 -10h1v1h-1zM130 -10h1v1h-1zM-82 -9h1v1h-1zM-79 -9h1v1h-1zM-77 -9h1v1h-1zM-73 -9h2v1h-2zM-69 -9h2v1h-2zM-65 -9h1v1h-1zM-63 -9h1v1h-1zM-57 -9h1v1h-1zM-49 -9h1v1h-1zM-47 -9h1v1h-1zM-44 -9h7v1h-7zM-36 -9h4v1h-4zM-31 -9h21v1h-21zM-9 -9h12v1h-12zM4 -9h20v1h-20zM25 -9h12v1h-12zM38 -9h10v1h-10zM49 -9h4v1h-4zM54 -9h1v1h-1zM56 -9h1v1h-1zM59 -9h1v1h-1zM61 -9h1v1h-1zM64 -9h2v1h-2zM68 -9h1v1h-1zM70 -9h2v1h-2zM74 -9h2v1h-2zM82 -9h2v1h-2zM97 -9h2v1h-2zM100 -9h1v1h-1zM-98 -8h1v1h-1zM-96 -8h1v1h-1zM-91 -8h1v1h-1zM-80 -8h1v1h-1zM-78 -8h1v1h-1zM-74 -8h1v1h-1zM-71 -8h2v1h-2zM-65 -8h2v1h-2zM-62 -8h1v1h-1zM-60 -8h2v1h-2zM-57 -8h2v1h-2zM-53 -8h4v1h-4zM-47 -8h1v1h-1zM-44 -8h7v1h-7zM-36 -8h1v1h-1zM-34 -8h16v1h-16zM-17 -8h5v1h-5zM-11 -8h2v1h-2zM-8 -8h31v1h-31zM24 -8h8v1h-8zM33 -8h2v1h-2zM36 -8h1v1h-1zM38 -8h4v1h-4zM43 -8h3v1h-3zM47 -8h2v1h-2zM50 -8h1v1h-1zM52 -8h2v1h-2zM55 -8h6v1h-6zM65 -8h1v1h-1zM67 -8h1v1h-1zM70 -8h1v1h-1zM72 -8h1v1h-1zM74 -8h1v1h-1zM79 -8h1v1h-1zM83 -8h2v1h-2zM86 -8h2v1h-2zM91 -8h1v1h-1zM96 -8h2v1h-2zM-107 -7h1v1h-1zM-103 -7h1v1h-1zM-93 -7h1v1h-1zM-79 -7h1v1h-1zM-73 -7h1v1h-1zM-71 -7h2v1h-2zM-67 -7h1v1h-1zM-64 -7h1v1h-1zM-62 -7h1v1h-1zM-60 -7h2v1h-2zM-57 -7h3v1h-3zM-51 -7h2v1h-2zM-48 -7h4v1h-4zM-41 -7h6v1h-6zM-34 -7h6v1h-6zM-27 -7h7v1h-7zM-19 -7h21v1h-21zM3 -7h4v1h-4zM8 -7h12v1h-12zM21 -7h12v1h-12zM34 -7h8v1h-8zM44 -7h2v1h-2zM47 -7h1v1h-1zM49 -7h2v1h-2zM54 -7h2v1h-2zM60 -7h2v1h-2zM66 -7h3v1h-3zM70 -7h1v1h-1zM72 -7h3v1h-3zM76 -7h2v1h-2zM82 -7h1v1h-1zM86 -7h2v1h-2zM91 -7h1v1h-1zM-123 -6h1v1h-1zM-109 -6h1v1h-1zM-92 -6h1v1h-1zM-87 -6h1v1h-1zM-77 -6h4v1h-4zM-67 -6h4v1h-4zM-62 -6h1v1h-1zM-60 -6h3v1h-3zM-54 -6h1v1h-1zM-52 -6h4v1h-4zM-42 -6h2v1h-2zM-39 -6h7v1h-7zM-31 -6h21v1h-21zM-9 -6h22v1h-22zM14 -6h6v1h-6zM21 -6h4v1h-4zM26 -6h4v1h-4zM31 -6h1v1h-1zM33 -6h9v1h-9zM43 -6h3v1h-3zM47 -6h1v1h-1zM50 -6h3v1h-3zM54 -6h4v1h-4zM62 -6h2v1h-2zM66 -6h5v1h-5zM73 -6h2v1h-2zM83 -6h1v1h-1zM86 -6h1v1h-1zM89 -6h1v1h-1zM91 -6h1v1h-1zM118 -6h1v1h-1zM135 -6h1v1h-1zM-111 -5h1v1h-1zM-92 -5h1v1h-1zM-86 -5h1v1h-1zM-84 -5h1v1h-1zM-82 -5h1v1h-1zM-78 -5h1v1h-1zM-75 -5h2v1h-2zM-69 -5h5v1h-5zM-63 -5h2v1h-2zM-60 -5h7v1h-7zM-52 -5h12v1h-12zM-39 -5h35v1h-35zM-3 -5h27v1h-27zM25 -5h3v1h-3zM29 -5h10v1h-10zM41 -5h6v1h-6zM50 -5h3v1h-3zM56 -5h1v1h-1zM58 -5h1v1h-1zM62 -5h2v1h-2zM67 -5h4v1h-4zM83 -5h2v1h-2zM94 -5h1v1h-1zM96 -5h1v1h-1zM110 -5h2v1h-2zM140 -5h1v1h-1zM146 -5h1v1h-1zM-116 -4h1v1h-1zM-105 -4h1v1h-1zM-98 -4h1v1h-1zM-89 -4h1v1h-1zM-86 -4h1v1h-1zM-80 -4h3v1h-3zM-73 -4h2v1h-2zM-70 -4h2v1h-2zM-65 -4h3v1h-3zM-61 -4h3v1h-3zM-57 -4h1v1h-1zM-55 -4h1v1h-1zM-50 -4h1v1h-1zM-48 -4h1v1h-1zM-46 -4h1v1h-1zM-43 -4h1v1h-1zM-41 -4h4v1h-4zM-36 -4h13v1h-13zM-22 -4h8v1h-8zM-13 -4h13v1h-13zM1 -4h9v1h-9zM11 -4h14v1h-14zM26 -4h5v1h-5zM32 -4h1v1h-1zM34 -4h4v1h-4zM40 -4h1v1h-1zM42 -4h5v1h-5zM48 -4h3v1h-3zM52 -4h2v1h-2zM55 -4h1v1h-1zM59 -4h1v1h-1zM61 -4h3v1h-3zM65 -4h1v1h-1zM67 -4h1v1h-1zM72 -4h1v1h-1zM76 -4h1v1h-1zM79 -4h2v1h-2zM83 -4h1v1h-1zM92 -4h1v1h-1zM112 -4h1v1h-1zM125 -4h1v1h-1zM-130 -3h1v1h-1zM-124 -3h1v1h-1zM-98 -3h1v1h-1zM-93 -3h1v1h-1zM-84 -3h1v1h-1zM-77 -3h1v1h-1zM-74 -3h2v1h-2zM-70 -3h1v1h-1zM-68 -3h1v1h-1zM-63 -3h1v1h-1zM-61 -3h2v1h-2zM-57 -3h3v1h-3zM-51 -3h4v1h-4zM-45 -3h3v1h-3zM-40 -3h4v1h-4zM-34 -3h9v1h-9zM-24 -3h7v1h-7zM-16 -3h29v1h-29zM15 -3h25v1h-25zM41 -3h1v1h-1zM43 -3h1v1h-1zM46 -3h1v1h-1zM48 -3h2v1h-2zM51 -3h2v1h-2zM54 -3h1v1h-1zM60 -3h1v1h-1zM62 -3h2v1h-2zM66 -3h1v1h-1zM70 -3h1v1h-1zM72 -3h1v1h-1zM98 -3h1v1h-1zM117 -3h1v1h-1zM-91 -2h1v1h-1zM-89 -2h1v1h-1zM-86 -2h2v1h-2zM-74 -2h1v1h-1zM-72 -2h1v1h-1zM-69 -2h1v1h-1zM-66 -2h1v1h-1zM-61 -2h2v1h-2zM-57 -2h1v1h-1zM-54 -2h2v1h-2zM-51 -2h1v1h-1zM-49 -2h5v1h-5zM-43 -2h2v1h-2zM-40 -2h2v1h-2zM-37 -2h9v1h-9zM-27 -2h3v1h-3zM-23 -2h12v1h-12zM-10 -2h17v1h-17zM8 -2h5v1h-5zM14 -2h9v1h-9zM24 -2h3v1h-3zM28 -2h3v1h-3zM32 -2h3v1h-3zM36 -2h1v1h-1zM38 -2h1v1h-1zM41 -2h1v1h-1zM43 -2h1v1h-1zM48 -2h1v1h-1zM50 -2h1v1h-1zM55 -2h1v1h-1zM57 -2h2v1h-2zM60 -2h2v1h-2zM64 -2h2v1h-2zM69 -2h1v1h-1zM71 -2h1v1h-1zM83 -2h2v1h-2zM87 -2h1v1h-1zM95 -2h1v1h-1zM97 -2h1v1h-1zM102 -2h1v1h-1zM115 -2h1v1h-1zM-149 -1h1v1h-1zM-127 -1h1v1h-1zM-103 -1h1v1h-1zM-91 -1h1v1h-1zM-86 -1h1v1h-1zM-84 -1h1v1h-1zM-77 -1h2v1h-2zM-70 -1h1v1h-1zM-68 -1h2v1h-2zM-65 -1h2v1h-2zM-58 -1h1v1h-1zM-56 -1h2v1h-2zM-52 -1h5v1h-5zM-46 -1h1v1h-1zM-44 -1h1v1h-1zM-42 -1h2v1h-2zM-38 -1h8v1h-8zM-28 -1h7v1h-7zM-20 -1h7v1h-7zM-12 -1h35v1h-35zM24 -1h9v1h-9zM34 -1h2v1h-2zM37 -1h10v1h-10zM48 -1h1v1h-1zM50 -1h1v1h-1zM52 -1h1v1h-1zM55 -1h2v1h-2zM58 -1h2v1h-2zM66 -1h1v1h-1zM68 -1h1v1h-1zM71 -1h4v1h-4zM84 -1h1v1h-1zM88 -1h1v1h-1zM100 -1h1v1h-1zM-118 0h1v1h-1zM-109 0h1v1h-1zM-107 0h1v1h-1zM-98 0h1v1h-1zM-85 0h1v1h-1zM-83 0h1v1h-1zM-81 0h1v1h-1zM-77 0h2v1h-2zM-73 0h1v1h-1zM-70 0h2v1h-2zM-67 0h2v1h-2zM-60 0h7v1h-7zM-52 0h4v1h-4zM-46 0h13v1h-13zM-32 0h14v1h-14zM-17 0h8v1h-8zM-8 0h32v1h-32zM25 0h2v1h-2zM28 0h5v1h-5zM34 0h11v1h-11zM47 0h3v1h-3zM51 0h3v1h-3zM55 0h1v1h-1zM58 0h4v1h-4zM65 0h3v1h-3zM71 0h2v1h-2zM75 0h2v1h-2zM79 0h1v1h-1zM81 0h1v1h-1zM84 0h2v1h-2zM89 0h1v1h-1zM95 0h1v1h-1zM102 0h1v1h-1zM-93 1h1v1h-1zM-82 1h2v1h-2zM-73 1h1v1h-1zM-71 1h2v1h-2zM-68 1h1v1h-1zM-66 1h1v1h-1zM-64 1h2v1h-2zM-61 1h2v1h-2zM-58 1h3v1h-3zM-54 1h1v1h-1zM-52 1h2v1h-2zM-49 1h1v1h-1zM-47 1h1v1h-1zM-45 1h3v1h-3zM-40 1h3v1h-3zM-36 1h7v1h-7zM-28 1h21v1h-21zM-6 1h31v1h-31zM26 1h4v1h-4zM31 1h12v1h-12zM44 1h4v1h-4zM49 1h1v1h-1zM51 1h2v1h-2zM54 1h1v1h-1zM56 1h2v1h-2zM60 1h1v1h-1zM63 1h1v1h-1zM68 1h3v1h-3zM72 1h1v1h-1zM76 1h1v1h-1zM84 1h1v1h-1zM88 1h2v1h-2zM92 1h1v1h-1zM105 1h2v1h-2zM113 1h1v1h-1zM-124 2h1v1h-1zM-116 2h1v1h-1zM-108 2h1v1h-1zM-95 2h1v1h-1zM-93 2h1v1h-1zM-86 2h1v1h-1zM-81 2h1v1h-1zM-78 2h2v1h-2zM-75 2h1v1h-1zM-72 2h3v1h-3zM-66 2h4v1h-4zM-61 2h3v1h-3zM-57 2h2v1h-2zM-54 2h1v1h-1zM-52 2h1v1h-1zM-50 2h1v1h-1zM-48 2h2v1h-2zM-45 2h1v1h-1zM-42 2h5v1h-5zM-36 2h1v1h-1zM-33 2h23v1h-23zM-9 2h14v1h-14zM6 2h37v1h-37zM45 2h2v1h-2zM48 2h1v1h-1zM50 2h1v1h-1zM52 2h1v1h-1zM54 2h1v1h-1zM57 2h2v1h-2zM61 2h3v1h-3zM68 2h3v1h-3zM73 2h2v1h-2zM77 2h2v1h-2zM80 2h1v1h-1zM83 2h6v1h-6zM99 2h1v1h-1zM109 2h1v1h-1zM117 2h1v1h-1zM-113 3h1v1h-1zM-96 3h1v1h-1zM-82 3h1v1h-1zM-72 3h2v1h-2zM-65 3h2v1h-2zM-61 3h1v1h-1zM-58 3h1v1h-1zM-56 3h1v1h-1zM-53 3h9v1h-9zM-42 3h2v1h-2zM-39 3h1v1h-1zM-35 3h4v1h-4zM-30 3h8v1h-8zM-21 3h29v1h-29zM9 3h6v1h-6zM16 3h19v1h-19zM36 3h2v1h-2zM39 3h3v1h-3zM43 3h3v1h-3zM48 3h2v1h-2zM51 3h2v1h-2zM54 3h1v1h-1zM59 3h4v1h-4zM64 3h1v1h-1zM66 3h2v1h-2zM73 3h1v1h-1zM75 3h1v1h-1zM83 3h3v1h-3zM88 3h1v1h-1zM93 3h1v1h-1zM110 3h1v1h-1zM-110 4h1v1h-1zM-99 4h1v1h-1zM-96 4h1v1h-1zM-93 4h2v1h-2zM-88 4h1v1h-1zM-86 4h1v1h-1zM-84 4h2v1h-2zM-80 4h1v1h-1zM-78 4h2v1h-2zM-75 4h2v1h-2zM-71 4h2v1h-2zM-68 4h1v1h-1zM-66 4h2v1h-2zM-63 4h4v1h-4zM-58 4h5v1h-5zM-52 4h10v1h-10zM-41 4h23v1h-23zM-17 4h11v1h-11zM-4 4h30v1h-30zM27 4h4v1h-4zM32 4h4v1h-4zM37 4h4v1h-4zM42 4h3v1h-3zM46 4h1v1h-1zM48 4h11v1h-11zM60 4h1v1h-1zM62 4h1v1h-1zM66 4h1v1h-1zM69 4h1v1h-1zM72 4h1v1h-1zM74 4h1v1h-1zM77 4h1v1h-1zM81 4h1v1h-1zM85 4h1v1h-1zM87 4h1v1h-1zM98 4h2v1h-2zM144 4h1v1h-1zM-94 5h1v1h-1zM-92 5h1v1h-1zM-86 5h1v1h-1zM-83 5h1v1h-1zM-80 5h1v1h-1zM-78 5h2v1h-2zM-75 5h5v1h-5zM-69 5h1v1h-1zM-65 5h3v1h-3zM-60 5h2v1h-2zM-57 5h4v1h-4zM-49 5h1v1h-1zM-47 5h6v1h-6zM-40 5h2v1h-2zM-36 5h1v1h-1zM-34 5h3v1h-3zM-29 5h24v1h-24zM-4 5h15v1h-15zM12 5h17v1h-17zM30 5h7v1h-7zM39 5h5v1h-5zM45 5h1v1h-1zM49 5h6v1h-6zM56 5h4v1h-4zM62 5h3v1h-3zM70 5h4v1h-4zM77 5h2v1h-2zM80 5h1v1h-1zM82 5h1v1h-1zM88 5h1v1h-1zM90 5h1v1h-1zM96 5h1v1h-1zM119 5h1v1h-1zM-96 6h1v1h-1zM-92 6h1v1h-1zM-89 6h1v1h-1zM-76 6h2v1h-2zM-73 6h1v1h-1zM-65 6h1v1h-1zM-59 6h3v1h-3zM-54 6h3v1h-3zM-50 6h1v1h-1zM-48 6h1v1h-1zM-46 6h3v1h-3zM-42 6h1v1h-1zM-40 6h3v1h-3zM-36 6h1v1h-1zM-33 6h22v1h-22zM-10 6h35v1h-35zM26 6h1v1h-1zM28 6h7v1h-7zM37 6h1v1h-1zM39 6h1v1h-1zM41 6h2v1h-2zM44 6h7v1h-7zM52 6h1v1h-1zM55 6h4v1h-4zM61 6h2v1h-2zM64 6h2v1h-2zM69 6h1v1h-1zM73 6h3v1h-3zM78 6h1v1h-1zM80 6h8v1h-8zM90 6h1v1h-1zM93 6h1v1h-1zM99 6h1v1h-1zM105 6h1v1h-1zM121 6h1v1h-1zM-107 7h1v1h-1zM-97 7h1v1h-1zM-93 7h1v1h-1zM-88 7h2v1h-2zM-82 7h1v1h-1zM-80 7h1v1h-1zM-75 7h1v1h-1zM-73 7h1v1h-1zM-71 7h2v1h-2zM-68 7h1v1h-1zM-66 7h1v1h-1zM-59 7h2v1h-2zM-54 7h1v1h-1zM-52 7h5v1h-5zM-46 7h5v1h-5zM-40 7h1v1h-1zM-38 7h2v1h-2zM-34 7h9v1h-9zM-24 7h8v1h-8zM-15 7h4v1h-4zM-10 7h3v1h-3zM-6 7h14v1h-14zM9 7h10v1h-10zM20 7h6v1h-6zM28 7h1v1h-1zM30 7h1v1h-1zM33 7h2v1h-2zM37 7h1v1h-1zM39 7h1v1h-1zM42 7h5v1h-5zM48 7h1v1h-1zM50 7h1v1h-1zM52 7h1v1h-1zM54 7h1v1h-1zM56 7h2v1h-2zM61 7h1v1h-1zM63 7h2v1h-2zM67 7h2v1h-2zM71 7h1v1h-1zM76 7h1v1h-1zM85 7h1v1h-1zM90 7h1v1h-1zM99 7h1v1h-1zM101 7h1v1h-1zM-110 8h2v1h-2zM-103 8h1v1h-1zM-86 8h1v1h-1zM-84 8h1v1h-1zM-82 8h1v1h-1zM-77 8h1v1h-1zM-73 8h1v1h-1zM-66 8h2v1h-2zM-60 8h2v1h-2zM-57 8h2v1h-2zM-53 8h4v1h-4zM-47 8h1v1h-1zM-44 8h3v1h-3zM-40 8h7v1h-7zM-30 8h25v1h-25zM-3 8h8v1h-8zM6 8h1v1h-1zM8 8h23v1h-23zM32 8h8v1h-8zM41 8h1v1h-1zM43 8h4v1h-4zM48 8h5v1h-5zM55 8h1v1h-1zM58 8h1v1h-1zM62 8h1v1h-1zM66 8h1v1h-1zM76 8h1v1h-1zM80 8h2v1h-2zM87 8h1v1h-1zM96 8h2v1h-2zM120 8h2v1h-2zM150 8h1v1h-1zM-103 9h1v1h-1zM-92 9h1v1h-1zM-85 9h1v1h-1zM-83 9h1v1h-1zM-75 9h1v1h-1zM-72 9h1v1h-1zM-68 9h1v1h-1zM-66 9h1v1h-1zM-62 9h1v1h-1zM-60 9h1v1h-1zM-57 9h1v1h-1zM-55 9h1v1h-1zM-53 9h3v1h-3zM-49 9h3v1h-3zM-43 9h5v1h-5zM-37 9h2v1h-2zM-34 9h1v1h-1zM-32 9h3v1h-3zM-28 9h6v1h-6zM-21 9h3v1h-3zM-17 9h40v1h-40zM24 9h4v1h-4zM30 9h1v1h-1zM32 9h7v1h-7zM40 9h1v1h-1zM43 9h1v1h-1zM46 9h1v1h-1zM48 9h6v1h-6zM56 9h1v1h-1zM58 9h2v1h-2zM61 9h1v1h-1zM63 9h2v1h-2zM66 9h1v1h-1zM73 9h1v1h-1zM75 9h2v1h-2zM86 9h1v1h-1zM90 9h1v1h-1zM98 9h1v1h-1zM104 9h1v1h-1zM119 9h1v1h-1zM-124 10h1v1h-1zM-109 10h1v1h-1zM-104 10h1v1h-1zM-95 10h1v1h-1zM-88 10h1v1h-1zM-84 10h2v1h-2zM-78 10h1v1h-1zM-76 10h5v1h-5zM-70 10h4v1h-4zM-65 10h1v1h-1zM-62 10h1v1h-1zM-59 10h1v1h-1zM-57 10h1v1h-1zM-55 10h8v1h-8zM-46 10h3v1h-3zM-41 10h30v1h-30zM-10 10h43v1h-43zM34 10h3v1h-3zM38 10h3v1h-3zM42 10h1v1h-1zM44 10h1v1h-1zM46 10h3v1h-3zM50 10h2v1h-2zM56 10h1v1h-1zM60 10h1v1h-1zM66 10h1v1h-1zM68 10h1v1h-1zM74 10h1v1h-1zM77 10h3v1h-3zM91 10h1v1h-1zM95 10h1v1h-1zM107 10h1v1h-1zM118 10h1v1h-1zM-122 11h1v1h-1zM-105 11h1v1h-1zM-102 11h1v1h-1zM-98 11h1v1h-1zM-92 11h1v1h-1zM-87 11h1v1h-1zM-80 11h2v1h-2zM-77 11h4v1h-4zM-72 11h2v1h-2zM-67 11h1v1h-1zM-63 11h1v1h-1zM-58 11h10v1h-10zM-45 11h3v1h-3zM-40 11h1v1h-1zM-38 11h1v1h-1zM-36 11h1v1h-1zM-33 11h12v1h-12zM-20 11h4v1h-4zM-15 11h45v1h-45zM31 11h2v1h-2zM35 11h3v1h-3zM40 11h1v1h-1zM42 11h1v1h-1zM45 11h1v1h-1zM47 11h2v1h-2zM51 11h2v1h-2zM54 11h4v1h-4zM62 11h1v1h-1zM68 11h2v1h-2zM71 11h1v1h-1zM84 11h1v1h-1zM89 11h2v1h-2zM99 11h1v1h-1zM101 11h1v1h-1zM110 11h1v1h-1zM135 11h1v1h-1zM-131 12h1v1h-1zM-111 12h1v1h-1zM-97 12h1v1h-1zM-92 12h1v1h-1zM-85 12h1v1h-1zM-80 12h2v1h-2zM-77 12h2v1h-2zM-74 12h1v1h-1zM-69 12h3v1h-3zM-65 12h1v1h-1zM-60 12h2v1h-2zM-57 12h2v1h-2zM-54 12h2v1h-2zM-50 12h1v1h-1zM-46 12h2v1h-2zM-43 12h3v1h-3zM-39 12h4v1h-4zM-33 12h2v1h-2zM-30 12h9v1h-9zM-20 12h40v1h-40zM21 12h21v1h-21zM43 12h1v1h-1zM45 12h2v1h-2zM48 12h4v1h-4zM53 12h3v1h-3zM62 12h1v1h-1zM64 12h1v1h-1zM66 12h2v1h-2zM70 12h3v1h-3zM75 12h1v1h-1zM78 12h1v1h-1zM84 12h2v1h-2zM92 12h1v1h-1zM104 12h1v1h-1zM-114 13h1v1h-1zM-111 13h1v1h-1zM-108 13h1v1h-1zM-96 13h1v1h-1zM-92 13h2v1h-2zM-85 13h1v1h-1zM-82 13h1v1h-1zM-80 13h1v1h-1zM-77 13h2v1h-2zM-74 13h1v1h-1zM-70 13h1v1h-1zM-66 13h2v1h-2zM-61 13h1v1h-1zM-58 13h2v1h-2zM-55 13h3v1h-3zM-50 13h1v1h-1zM-46 13h5v1h-5zM-40 13h4v1h-4zM-35 13h7v1h-7zM-27 13h13v1h-13zM-13 13h20v1h-20zM8 13h20v1h-20zM29 13h7v1h-7zM38 13h1v1h-1zM42 13h6v1h-6zM54 13h1v1h-1zM58 13h3v1h-3zM62 13h3v1h-3zM70 13h2v1h-2zM73 13h1v1h-1zM80 13h1v1h-1zM91 13h1v1h-1zM93 13h1v1h-1zM99 13h1v1h-1zM-114 14h1v1h-1zM-106 14h2v1h-2zM-92 14h1v1h-1zM-80 14h1v1h-1zM-78 14h1v1h-1zM-74 14h1v1h-1zM-71 14h1v1h-1zM-69 14h1v1h-1zM-63 14h1v1h-1zM-61 14h5v1h-5zM-52 14h2v1h-2zM-48 14h2v1h-2zM-45 14h1v1h-1zM-43 14h4v1h-4zM-38 14h1v1h-1zM-36 14h2v1h-2zM-33 14h4v1h-4zM-28 14h4v1h-4zM-22 14h11v1h-11zM-10 14h39v1h-39zM31 14h10v1h-10zM42 14h1v1h-1zM47 14h2v1h-2zM52 14h3v1h-3zM56 14h1v1h-1zM58 14h4v1h-4zM64 14h1v1h-1zM72 14h1v1h-1zM74 14h1v1h-1zM78 14h3v1h-3zM89 14h2v1h-2zM95 14h2v1h-2zM98 14h1v1h-1zM125 14h1v1h-1zM-116 15h1v1h-1zM-102 15h1v1h-1zM-100 15h1v1h-1zM-98 15h2v1h-2zM-92 15h2v1h-2zM-89 15h2v1h-2zM-81 15h1v1h-1zM-79 15h1v1h-1zM-75 15h1v1h-1zM-73 15h1v1h-1zM-69 15h1v1h-1zM-66 15h1v1h-1zM-64 15h2v1h-2zM-61 15h1v1h-1zM-59 15h2v1h-2zM-55 15h3v1h-3zM-51 15h15v1h-15zM-35 15h1v1h-1zM-33 15h1v1h-1zM-31 15h5v1h-5zM-25 15h48v1h-48zM24 15h8v1h-8zM33 15h5v1h-5zM39 15h9v1h-9zM49 15h2v1h-2zM52 15h1v1h-1zM54 15h1v1h-1zM58 15h1v1h-1zM66 15h1v1h-1zM69 15h3v1h-3zM73 15h1v1h-1zM80 15h1v1h-1zM84 15h1v1h-1zM87 15h1v1h-1zM96 15h1v1h-1zM118 15h1v1h-1zM-130 16h1v1h-1zM-101 16h1v1h-1zM-99 16h1v1h-1zM-87 16h1v1h-1zM-83 16h1v1h-1zM-80 16h1v1h-1zM-78 16h1v1h-1zM-74 16h2v1h-2zM-71 16h1v1h-1zM-68 16h2v1h-2zM-63 16h1v1h-1zM-61 16h1v1h-1zM-59 16h2v1h-2zM-55 16h2v1h-2zM-52 16h5v1h-5zM-46 16h19v1h-19zM-26 16h2v1h-2zM-22 16h14v1h-14zM-7 16h8v1h-8zM2 16h6v1h-6zM9 16h22v1h-22zM33 16h2v1h-2zM36 16h5v1h-5zM42 16h2v1h-2zM45 16h2v1h-2zM49 16h1v1h-1zM51 16h1v1h-1zM56 16h2v1h-2zM59 16h1v1h-1zM61 16h1v1h-1zM63 16h1v1h-1zM66 16h1v1h-1zM71 16h1v1h-1zM76 16h2v1h-2zM99 16h1v1h-1zM-106 17h1v1h-1zM-93 17h2v1h-2zM-78 17h1v1h-1zM-76 17h1v1h-1zM-73 17h1v1h-1zM-67 17h1v1h-1zM-65 17h6v1h-6zM-52 17h1v1h-1zM-49 17h1v1h-1zM-46 17h2v1h-2zM-43 17h2v1h-2zM-40 17h1v1h-1zM-37 17h13v1h-13zM-23 17h40v1h-40zM18 17h6v1h-6zM25 17h3v1h-3zM29 17h7v1h-7zM37 17h8v1h-8zM46 17h1v1h-1zM48 17h4v1h-4zM53 17h3v1h-3zM59 17h1v1h-1zM62 17h1v1h-1zM64 17h2v1h-2zM74 17h1v1h-1zM76 17h1v1h-1zM78 17h2v1h-2zM84 17h2v1h-2zM88 17h2v1h-2zM91 17h2v1h-2zM99 17h1v1h-1zM109 17h1v1h-1zM112 17h1v1h-1zM119 17h1v1h-1zM140 17h1v1h-1zM-108 18h1v1h-1zM-92 18h1v1h-1zM-86 18h1v1h-1zM-76 18h1v1h-1zM-74 18h1v1h-1zM-69 18h5v1h-5zM-62 18h2v1h-2zM-58 18h1v1h-1zM-54 18h2v1h-2zM-51 18h2v1h-2zM-46 18h2v1h-2zM-43 18h5v1h-5zM-36 18h2v1h-2zM-33 18h5v1h-5zM-27 18h13v1h-13zM-13 18h8v1h-8zM-3 18h1v1h-1zM-1 18h27v1h-27zM28 18h10v1h-10zM40 18h3v1h-3zM44 18h3v1h-3zM48 18h3v1h-3zM56 18h1v1h-1zM62 18h2v1h-2zM65 18h1v1h-1zM67 18h1v1h-1zM73 18h1v1h-1zM75 18h3v1h-3zM88 18h1v1h-1zM91 18h2v1h-2zM100 18h1v1h-1zM115 18h1v1h-1zM-105 19h1v1h-1zM-94 19h1v1h-1zM-86 19h2v1h-2zM-80 19h1v1h-1zM-75 19h1v1h-1zM-72 19h6v1h-6zM-64 19h3v1h-3zM-59 19h1v1h-1zM-57 19h1v1h-1zM-51 19h3v1h-3zM-47 19h4v1h-4zM-42 19h8v1h-8zM-33 19h5v1h-5zM-27 19h10v1h-10zM-16 19h8v1h-8zM-7 19h13v1h-13zM7 19h6v1h-6zM14 19h5v1h-5zM20 19h2v1h-2zM23 19h9v1h-9zM36 19h2v1h-2zM39 19h1v1h-1zM42 19h3v1h-3zM46 19h2v1h-2zM49 19h5v1h-5zM58 19h2v1h-2zM63 19h4v1h-4zM70 19h1v1h-1zM72 19h1v1h-1zM81 19h2v1h-2zM94 19h1v1h-1zM103 19h1v1h-1zM120 19h1v1h-1zM-104 20h3v1h-3zM-89 20h1v1h-1zM-80 20h1v1h-1zM-78 20h1v1h-1zM-72 20h2v1h-2zM-66 20h1v1h-1zM-64 20h1v1h-1zM-62 20h2v1h-2zM-58 20h1v1h-1zM-56 20h1v1h-1zM-53 20h1v1h-1zM-51 20h6v1h-6zM-42 20h2v1h-2zM-39 20h1v1h-1zM-37 20h1v1h-1zM-34 20h3v1h-3zM-30 20h1v1h-1zM-28 20h9v1h-9zM-18 20h12v1h-12zM-5 20h23v1h-23zM19 20h2v1h-2zM22 20h5v1h-5zM28 20h1v1h-1zM30 20h4v1h-4zM35 20h1v1h-1zM37 20h3v1h-3zM41 20h2v1h-2zM45 20h1v1h-1zM47 20h1v1h-1zM50 20h1v1h-1zM52 20h1v1h-1zM55 20h3v1h-3zM59 20h2v1h-2zM62 20h1v1h-1zM66 20h1v1h-1zM68 20h1v1h-1zM72 20h1v1h-1zM74 20h1v1h-1zM79 20h1v1h-1zM90 20h1v1h-1zM92 20h1v1h-1zM97 20h1v1h-1zM99 20h1v1h-1zM-126 21h1v1h-1zM-97 21h2v1h-2zM-86 21h2v1h-2zM-79 21h1v1h-1zM-75 21h1v1h-1zM-73 21h1v1h-1zM-71 21h1v1h-1zM-66 21h3v1h-3zM-62 21h1v1h-1zM-59 21h2v1h-2zM-55 21h1v1h-1zM-53 21h2v1h-2zM-46 21h7v1h-7zM-38 21h2v1h-2zM-33 21h3v1h-3zM-29 21h11v1h-11zM-17 21h22v1h-22zM6 21h18v1h-18zM25 21h6v1h-6zM32 21h3v1h-3zM36 21h8v1h-8zM45 21h1v1h-1zM50 21h1v1h-1zM53 21h1v1h-1zM57 21h2v1h-2zM60 21h1v1h-1zM63 21h2v1h-2zM72 21h1v1h-1zM75 21h1v1h-1zM77 21h2v1h-2zM-121 22h1v1h-1zM-97 22h1v1h-1zM-84 22h1v1h-1zM-82 22h1v1h-1zM-76 22h2v1h-2zM-72 22h1v1h-1zM-70 22h1v1h-1zM-68 22h6v1h-6zM-59 22h1v1h-1zM-55 22h4v1h-4zM-50 22h8v1h-8zM-41 22h9v1h-9zM-31 22h3v1h-3zM-27 22h1v1h-1zM-25 22h11v1h-11zM-13 22h1v1h-1zM-11 22h25v1h-25zM15 22h2v1h-2zM18 22h1v1h-1zM20 22h4v1h-4zM25 22h7v1h-7zM33 22h4v1h-4zM38 22h2v1h-2zM42 22h3v1h-3zM46 22h4v1h-4zM53 22h1v1h-1zM55 22h2v1h-2zM59 22h3v1h-3zM63 22h7v1h-7zM71 22h1v1h-1zM78 22h1v1h-1zM85 22h2v1h-2zM89 22h1v1h-1zM92 22h2v1h-2zM113 22h1v1h-1zM115 22h1v1h-1zM-110 23h1v1h-1zM-105 23h1v1h-1zM-92 23h1v1h-1zM-90 23h1v1h-1zM-83 23h2v1h-2zM-77 23h1v1h-1zM-73 23h1v1h-1zM-71 23h1v1h-1zM-65 23h2v1h-2zM-62 23h2v1h-2zM-59 23h1v1h-1zM-55 23h3v1h-3zM-51 23h1v1h-1zM-49 23h1v1h-1zM-46 23h4v1h-4zM-41 23h9v1h-9zM-31 23h3v1h-3zM-27 23h4v1h-4zM-22 23h4v1h-4zM-17 23h33v1h-33zM17 23h8v1h-8zM26 23h4v1h-4zM32 23h1v1h-1zM34 23h2v1h-2zM37 23h3v1h-3zM41 23h2v1h-2zM46 23h2v1h-2zM49 23h2v1h-2zM52 23h1v1h-1zM54 23h5v1h-5zM60 23h5v1h-5zM67 23h1v1h-1zM69 23h1v1h-1zM72 23h2v1h-2zM75 23h1v1h-1zM81 23h1v1h-1zM94 23h1v1h-1zM99 23h1v1h-1zM121 23h1v1h-1zM-137 24h1v1h-1zM-99 24h1v1h-1zM-92 24h1v1h-1zM-90 24h1v1h-1zM-84 24h1v1h-1zM-80 24h1v1h-1zM-76 24h1v1h-1zM-68 24h1v1h-1zM-66 24h2v1h-2zM-58 24h8v1h-8zM-49 24h5v1h-5zM-43 24h3v1h-3zM-38 24h3v1h-3zM-34 24h5v1h-5zM-28 24h4v1h-4zM-23 24h13v1h-13zM-9 24h5v1h-5zM-3 24h7v1h-7zM5 24h3v1h-3zM9 24h4v1h-4zM14 24h9v1h-9zM25 24h2v1h-2zM28 24h2v1h-2zM32 24h4v1h-4zM37 24h4v1h-4zM44 24h1v1h-1zM46 24h2v1h-2zM50 24h1v1h-1zM52 24h1v1h-1zM56 24h1v1h-1zM58 24h5v1h-5zM65 24h1v1h-1zM70 24h1v1h-1zM79 24h1v1h-1zM90 24h1v1h-1zM117 24h1v1h-1zM-107 25h1v1h-1zM-93 25h1v1h-1zM-91 25h1v1h-1zM-87 25h1v1h-1zM-78 25h3v1h-3zM-74 25h2v1h-2zM-70 25h1v1h-1zM-68 25h1v1h-1zM-64 25h1v1h-1zM-62 25h1v1h-1zM-60 25h2v1h-2zM-57 25h2v1h-2zM-54 25h4v1h-4zM-46 25h6v1h-6zM-39 25h5v1h-5zM-33 25h4v1h-4zM-28 25h1v1h-1zM-26 25h2v1h-2zM-23 25h6v1h-6zM-15 25h15v1h-15zM1 25h5v1h-5zM7 25h4v1h-4zM12 25h7v1h-7zM20 25h3v1h-3zM24 25h3v1h-3zM28 25h1v1h-1zM30 25h8v1h-8zM39 25h3v1h-3zM43 25h1v1h-1zM45 25h6v1h-6zM54 25h1v1h-1zM56 25h2v1h-2zM59 25h1v1h-1zM63 25h1v1h-1zM65 25h5v1h-5zM71 25h2v1h-2zM74 25h1v1h-1zM77 25h1v1h-1zM80 25h1v1h-1zM85 25h1v1h-1zM93 25h1v1h-1zM103 25h1v1h-1zM122 25h1v1h-1zM-100 26h1v1h-1zM-92 26h1v1h-1zM-90 26h1v1h-1zM-87 26h1v1h-1zM-84 26h2v1h-2zM-79 26h2v1h-2zM-71 26h1v1h-1zM-67 26h2v1h-2zM-63 26h1v1h-1zM-61 26h1v1h-1zM-59 26h1v1h-1zM-54 26h2v1h-2zM-51 26h3v1h-3zM-47 26h2v1h-2zM-43 26h1v1h-1zM-41 26h14v1h-14zM-26 26h5v1h-5zM-20 26h11v1h-11zM-8 26h4v1h-4zM-3 26h11v1h-11zM11 26h1v1h-1zM13 26h14v1h-14zM28 26h6v1h-6zM35 26h5v1h-5zM42 26h3v1h-3zM49 26h1v1h-1zM53 26h2v1h-2zM58 26h2v1h-2zM61 26h1v1h-1zM63 26h2v1h-2zM69 26h1v1h-1zM72 26h1v1h-1zM74 26h2v1h-2zM77 26h2v1h-2zM87 26h1v1h-1zM89 26h1v1h-1zM106 26h1v1h-1zM-108 27h1v1h-1zM-102 27h1v1h-1zM-96 27h1v1h-1zM-93 27h1v1h-1zM-90 27h1v1h-1zM-88 27h1v1h-1zM-83 27h1v1h-1zM-81 27h1v1h-1zM-72 27h1v1h-1zM-70 27h2v1h-2zM-66 27h1v1h-1zM-63 27h2v1h-2zM-60 27h2v1h-2zM-56 27h1v1h-1zM-54 27h3v1h-3zM-50 27h2v1h-2zM-46 27h1v1h-1zM-44 27h23v1h-23zM-20 27h2v1h-2zM-16 27h1v1h-1zM-13 27h2v1h-2zM-10 27h12v1h-12zM3 27h13v1h-13zM17 27h5v1h-5zM23 27h8v1h-8zM33 27h3v1h-3zM37 27h2v1h-2zM42 27h1v1h-1zM44 27h6v1h-6zM51 27h2v1h-2zM56 27h3v1h-3zM60 27h1v1h-1zM72 27h1v1h-1zM80 27h1v1h-1zM-111 28h1v1h-1zM-92 28h1v1h-1zM-87 28h1v1h-1zM-81 28h1v1h-1zM-78 28h1v1h-1zM-76 28h1v1h-1zM-74 28h1v1h-1zM-72 28h2v1h-2zM-63 28h1v1h-1zM-61 28h1v1h-1zM-56 28h1v1h-1zM-54 28h2v1h-2zM-49 28h1v1h-1zM-47 28h3v1h-3zM-41 28h1v1h-1zM-38 28h2v1h-2zM-35 28h1v1h-1zM-31 28h4v1h-4zM-22 28h5v1h-5zM-15 28h1v1h-1zM-12 28h11v1h-11zM0 28h2v1h-2zM3 28h3v1h-3zM7 28h6v1h-6zM14 28h2v1h-2zM17 28h22v1h-22zM40 28h3v1h-3zM44 28h1v1h-1zM47 28h1v1h-1zM55 28h1v1h-1zM58 28h3v1h-3zM64 28h2v1h-2zM73 28h3v1h-3zM78 28h1v1h-1zM80 28h2v1h-2zM132 28h1v1h-1zM-86 29h1v1h-1zM-84 29h1v1h-1zM-82 29h1v1h-1zM-75 29h1v1h-1zM-72 29h3v1h-3zM-67 29h3v1h-3zM-63 29h1v1h-1zM-59 29h1v1h-1zM-57 29h2v1h-2zM-54 29h2v1h-2zM-51 29h3v1h-3zM-46 29h3v1h-3zM-41 29h1v1h-1zM-33 29h5v1h-5zM-27 29h7v1h-7zM-19 29h2v1h-2zM-16 29h5v1h-5zM-10 29h39v1h-39zM30 29h7v1h-7zM41 29h1v1h-1zM43 29h2v1h-2zM46 29h1v1h-1zM48 29h2v1h-2zM51 29h1v1h-1zM54 29h1v1h-1zM57 29h1v1h-1zM59 29h2v1h-2zM62 29h2v1h-2zM72 29h2v1h-2zM83 29h2v1h-2zM111 29h1v1h-1zM115 29h1v1h-1zM-94 30h2v1h-2zM-82 30h3v1h-3zM-76 30h1v1h-1zM-70 30h1v1h-1zM-68 30h1v1h-1zM-64 30h1v1h-1zM-62 30h2v1h-2zM-58 30h1v1h-1zM-56 30h4v1h-4zM-51 30h4v1h-4zM-45 30h2v1h-2zM-42 30h2v1h-2zM-37 30h5v1h-5zM-29 30h3v1h-3zM-25 30h9v1h-9zM-14 30h8v1h-8zM-2 30h4v1h-4zM3 30h4v1h-4zM10 30h2v1h-2zM13 30h15v1h-15zM32 30h4v1h-4zM37 30h4v1h-4zM42 30h1v1h-1zM44 30h1v1h-1zM46 30h1v1h-1zM48 30h1v1h-1zM51 30h1v1h-1zM53 30h1v1h-1zM55 30h2v1h-2zM58 30h2v1h-2zM61 30h1v1h-1zM63 30h1v1h-1zM74 30h2v1h-2zM77 30h1v1h-1zM82 30h1v1h-1zM86 30h1v1h-1zM100 30h1v1h-1zM107 30h1v1h-1zM111 30h1v1h-1zM-92 31h2v1h-2zM-82 31h1v1h-1zM-80 31h1v1h-1zM-76 31h1v1h-1zM-74 31h1v1h-1zM-72 31h1v1h-1zM-69 31h1v1h-1zM-67 31h3v1h-3zM-62 31h3v1h-3zM-58 31h2v1h-2zM-53 31h2v1h-2zM-50 31h2v1h-2zM-47 31h5v1h-5zM-41 31h1v1h-1zM-38 31h1v1h-1zM-35 31h5v1h-5zM-27 31h1v1h-1zM-25 31h3v1h-3zM-21 31h1v1h-1zM-18 31h4v1h-4zM-13 31h8v1h-8zM-4 31h10v1h-10zM7 31h3v1h-3zM11 31h3v1h-3zM15 31h7v1h-7zM24 31h2v1h-2zM28 31h1v1h-1zM30 31h1v1h-1zM33 31h1v1h-1zM35 31h4v1h-4zM41 31h2v1h-2zM44 31h2v1h-2zM47 31h3v1h-3zM51 31h4v1h-4zM57 31h1v1h-1zM59 31h3v1h-3zM67 31h2v1h-2zM72 31h1v1h-1zM78 31h2v1h-2zM93 31h1v1h-1zM116 31h1v1h-1zM-113 32h3v1h-3zM-75 32h1v1h-1zM-69 32h2v1h-2zM-65 32h2v1h-2zM-61 32h1v1h-1zM-59 32h2v1h-2zM-56 32h1v1h-1zM-53 32h1v1h-1zM-47 32h2v1h-2zM-44 32h2v1h-2zM-41 32h4v1h-4zM-36 32h1v1h-1zM-31 32h8v1h-8zM-22 32h1v1h-1zM-20 32h4v1h-4zM-15 32h1v1h-1zM-13 32h3v1h-3zM-9 32h2v1h-2zM-6 32h1v1h-1zM-4 32h1v1h-1zM-2 32h2v1h-2zM1 32h15v1h-15zM17 32h2v1h-2zM21 32h8v1h-8zM30 32h5v1h-5zM36 32h1v1h-1zM39 32h3v1h-3zM44 32h3v1h-3zM52 32h2v1h-2zM58 32h1v1h-1zM62 32h2v1h-2zM66 32h1v1h-1zM70 32h3v1h-3zM74 32h1v1h-1zM76 32h1v1h-1zM83 32h1v1h-1zM85 32h1v1h-1zM-91 33h1v1h-1zM-81 33h1v1h-1zM-76 33h1v1h-1zM-74 33h1v1h-1zM-68 33h6v1h-6zM-61 33h1v1h-1zM-58 33h2v1h-2zM-51 33h1v1h-1zM-49 33h2v1h-2zM-43 33h7v1h-7zM-33 33h1v1h-1zM-31 33h4v1h-4zM-25 33h3v1h-3zM-21 33h1v1h-1zM-19 33h3v1h-3zM-15 33h1v1h-1zM-13 33h2v1h-2zM-10 33h2v1h-2zM-7 33h14v1h-14zM8 33h4v1h-4zM14 33h6v1h-6zM22 33h4v1h-4zM30 33h1v1h-1zM33 33h1v1h-1zM35 33h1v1h-1zM37 33h1v1h-1zM40 33h1v1h-1zM42 33h1v1h-1zM44 33h2v1h-2zM47 33h1v1h-1zM49 33h2v1h-2zM55 33h4v1h-4zM60 33h1v1h-1zM64 33h1v1h-1zM68 33h1v1h-1zM77 33h1v1h-1zM85 33h1v1h-1zM129 33h1v1h-1zM-106 34h1v1h-1zM-81 34h1v1h-1zM-74 34h1v1h-1zM-63 34h1v1h-1zM-57 34h1v1h-1zM-54 34h1v1h-1zM-50 34h1v1h-1zM-47 34h1v1h-1zM-45 34h1v1h-1zM-43 34h2v1h-2zM-38 34h1v1h-1zM-36 34h1v1h-1zM-34 34h1v1h-1zM-32 34h12v1h-12zM-18 34h1v1h-1zM-16 34h10v1h-10zM-5 34h3v1h-3zM-1 34h7v1h-7zM8 34h2v1h-2zM11 34h5v1h-5zM17 34h3v1h-3zM21 34h8v1h-8zM30 34h1v1h-1zM32 34h3v1h-3zM36 34h3v1h-3zM42 34h1v1h-1zM44 34h2v1h-2zM49 34h1v1h-1zM52 34h3v1h-3zM58 34h3v1h-3zM66 34h1v1h-1zM83 34h1v1h-1zM101 34h1v1h-1zM109 34h2v1h-2zM-126 35h1v1h-1zM-105 35h1v1h-1zM-98 35h1v1h-1zM-92 35h1v1h-1zM-85 35h1v1h-1zM-80 35h2v1h-2zM-75 35h1v1h-1zM-72 35h5v1h-5zM-63 35h3v1h-3zM-59 35h1v1h-1zM-54 35h1v1h-1zM-52 35h4v1h-4zM-45 35h5v1h-5zM-38 35h4v1h-4zM-32 35h1v1h-1zM-29 35h5v1h-5zM-23 35h2v1h-2zM-20 35h3v1h-3zM-16 35h1v1h-1zM-13 35h8v1h-8zM-4 35h6v1h-6zM4 35h4v1h-4zM10 35h3v1h-3zM14 35h5v1h-5zM20 35h1v1h-1zM23 35h8v1h-8zM32 35h2v1h-2zM35 35h1v1h-1zM37 35h3v1h-3zM43 35h1v1h-1zM46 35h1v1h-1zM48 35h2v1h-2zM51 35h2v1h-2zM56 35h2v1h-2zM59 35h2v1h-2zM63 35h2v1h-2zM69 35h1v1h-1zM71 35h1v1h-1zM76 35h1v1h-1zM103 35h1v1h-1zM-122 36h1v1h-1zM-107 36h1v1h-1zM-84 36h1v1h-1zM-67 36h1v1h-1zM-65 36h1v1h-1zM-62 36h1v1h-1zM-60 36h2v1h-2zM-53 36h1v1h-1zM-51 36h2v1h-2zM-48 36h1v1h-1zM-46 36h2v1h-2zM-43 36h2v1h-2zM-39 36h1v1h-1zM-36 36h1v1h-1zM-33 36h5v1h-5zM-27 36h17v1h-17zM-8 36h1v1h-1zM-6 36h16v1h-16zM11 36h2v1h-2zM14 36h6v1h-6zM23 36h3v1h-3zM27 36h1v1h-1zM31 36h2v1h-2zM34 36h3v1h-3zM38 36h4v1h-4zM43 36h2v1h-2zM46 36h2v1h-2zM49 36h1v1h-1zM52 36h1v1h-1zM56 36h1v1h-1zM60 36h1v1h-1zM72 36h1v1h-1zM74 36h1v1h-1zM77 36h2v1h-2zM80 36h1v1h-1zM86 36h2v1h-2zM96 36h2v1h-2zM103 36h1v1h-1zM106 36h1v1h-1zM-127 37h1v1h-1zM-106 37h1v1h-1zM-80 37h1v1h-1zM-78 37h2v1h-2zM-72 37h1v1h-1zM-68 37h1v1h-1zM-65 37h1v1h-1zM-63 37h1v1h-1zM-59 37h1v1h-1zM-55 37h1v1h-1zM-52 37h2v1h-2zM-48 37h2v1h-2zM-43 37h1v1h-1zM-41 37h4v1h-4zM-34 37h2v1h-2zM-31 37h1v1h-1zM-29 37h1v1h-1zM-27 37h1v1h-1zM-25 37h3v1h-3zM-21 37h1v1h-1zM-19 37h3v1h-3zM-15 37h9v1h-9zM-5 37h3v1h-3zM2 37h11v1h-11zM15 37h4v1h-4zM20 37h1v1h-1zM22 37h2v1h-2zM25 37h2v1h-2zM28 37h3v1h-3zM32 37h1v1h-1zM34 37h6v1h-6zM41 37h3v1h-3zM46 37h1v1h-1zM54 37h6v1h-6zM62 37h2v1h-2zM71 37h3v1h-3zM91 37h1v1h-1zM94 37h1v1h-1zM96 37h1v1h-1zM119 37h1v1h-1zM-108 38h1v1h-1zM-95 38h1v1h-1zM-88 38h1v1h-1zM-85 38h1v1h-1zM-78 38h1v1h-1zM-73 38h3v1h-3zM-68 38h1v1h-1zM-66 38h1v1h-1zM-64 38h1v1h-1zM-62 38h1v1h-1zM-60 38h1v1h-1zM-57 38h2v1h-2zM-54 38h1v1h-1zM-51 38h1v1h-1zM-46 38h2v1h-2zM-43 38h6v1h-6zM-36 38h1v1h-1zM-34 38h5v1h-5zM-28 38h5v1h-5zM-22 38h4v1h-4zM-16 38h7v1h-7zM-8 38h1v1h-1zM-5 38h7v1h-7zM5 38h1v1h-1zM9 38h2v1h-2zM14 38h1v1h-1zM16 38h4v1h-4zM21 38h1v1h-1zM24 38h1v1h-1zM26 38h1v1h-1zM29 38h4v1h-4zM34 38h1v1h-1zM37 38h3v1h-3zM41 38h1v1h-1zM44 38h1v1h-1zM46 38h4v1h-4zM52 38h1v1h-1zM62 38h1v1h-1zM67 38h1v1h-1zM69 38h2v1h-2zM78 38h1v1h-1zM84 38h1v1h-1zM135 38h1v1h-1zM-108 39h1v1h-1zM-98 39h1v1h-1zM-85 39h1v1h-1zM-70 39h1v1h-1zM-54 39h1v1h-1zM-52 39h1v1h-1zM-49 39h1v1h-1zM-47 39h1v1h-1zM-45 39h1v1h-1zM-42 39h3v1h-3zM-35 39h2v1h-2zM-32 39h2v1h-2zM-28 39h7v1h-7zM-19 39h2v1h-2zM-16 39h2v1h-2zM-13 39h7v1h-7zM-4 39h2v1h-2zM1 39h8v1h-8zM10 39h2v1h-2zM13 39h4v1h-4zM19 39h7v1h-7zM27 39h1v1h-1zM29 39h1v1h-1zM31 39h4v1h-4zM37 39h1v1h-1zM41 39h1v1h-1zM43 39h3v1h-3zM48 39h1v1h-1zM51 39h7v1h-7zM62 39h1v1h-1zM64 39h1v1h-1zM69 39h1v1h-1zM74 39h1v1h-1zM109 39h1v1h-1zM111 39h1v1h-1zM115 39h1v1h-1zM125 39h1v1h-1zM-96 40h1v1h-1zM-90 40h1v1h-1zM-87 40h2v1h-2zM-83 40h1v1h-1zM-79 40h1v1h-1zM-77 40h1v1h-1zM-75 40h1v1h-1zM-71 40h2v1h-2zM-63 40h2v1h-2zM-58 40h1v1h-1zM-56 40h1v1h-1zM-54 40h1v1h-1zM-50 40h3v1h-3zM-45 40h2v1h-2zM-41 40h1v1h-1zM-39 40h2v1h-2zM-34 40h3v1h-3zM-29 40h5v1h-5zM-23 40h2v1h-2zM-20 40h9v1h-9zM-10 40h1v1h-1zM-8 40h3v1h-3zM-4 40h1v1h-1zM-2 40h3v1h-3zM2 40h3v1h-3zM6 40h3v1h-3zM10 40h5v1h-5zM16 40h1v1h-1zM18 40h3v1h-3zM24 40h1v1h-1zM26 40h2v1h-2zM30 40h1v1h-1zM34 40h2v1h-2zM39 40h1v1h-1zM44 40h2v1h-2zM48 40h3v1h-3zM52 40h3v1h-3zM56 40h1v1h-1zM59 40h2v1h-2zM62 40h4v1h-4zM67 40h1v1h-1zM69 40h2v1h-2zM73 40h1v1h-1zM75 40h1v1h-1zM87 40h1v1h-1zM-111 41h1v1h-1zM-107 41h2v1h-2zM-99 41h1v1h-1zM-92 41h2v1h-2zM-87 41h1v1h-1zM-83 41h1v1h-1zM-81 41h3v1h-3zM-77 41h1v1h-1zM-71 41h1v1h-1zM-66 41h1v1h-1zM-56 41h3v1h-3zM-51 41h3v1h-3zM-47 41h1v1h-1zM-43 41h2v1h-2zM-40 41h2v1h-2zM-37 41h2v1h-2zM-34 41h4v1h-4zM-28 41h2v1h-2zM-24 41h3v1h-3zM-20 41h2v1h-2zM-17 41h6v1h-6zM-10 41h5v1h-5zM-3 41h1v1h-1zM-1 41h3v1h-3zM3 41h2v1h-2zM11 41h2v1h-2zM15 41h1v1h-1zM18 41h4v1h-4zM23 41h1v1h-1zM26 41h7v1h-7zM34 41h2v1h-2zM38 41h2v1h-2zM43 41h1v1h-1zM45 41h2v1h-2zM49 41h1v1h-1zM51 41h1v1h-1zM55 41h2v1h-2zM60 41h1v1h-1zM63 41h1v1h-1zM69 41h2v1h-2zM73 41h1v1h-1zM83 41h1v1h-1zM86 41h2v1h-2zM111 41h1v1h-1zM-87 42h1v1h-1zM-83 42h1v1h-1zM-79 42h1v1h-1zM-77 42h1v1h-1zM-74 42h1v1h-1zM-66 42h1v1h-1zM-61 42h3v1h-3zM-57 42h4v1h-4zM-50 42h4v1h-4zM-45 42h4v1h-4zM-39 42h2v1h-2zM-35 42h5v1h-5zM-29 42h1v1h-1zM-27 42h3v1h-3zM-20 42h2v1h-2zM-17 42h5v1h-5zM-11 42h1v1h-1zM-9 42h1v1h-1zM-6 42h2v1h-2zM-3 42h1v1h-1zM-1 42h1v1h-1zM1 42h1v1h-1zM4 42h1v1h-1zM6 42h1v1h-1zM8 42h1v1h-1zM12 42h1v1h-1zM18 42h3v1h-3zM22 42h1v1h-1zM24 42h3v1h-3zM28 42h1v1h-1zM30 42h1v1h-1zM36 42h1v1h-1zM38 42h3v1h-3zM44 42h1v1h-1zM46 42h3v1h-3zM50 42h1v1h-1zM52 42h1v1h-1zM54 42h1v1h-1zM59 42h1v1h-1zM63 42h1v1h-1zM65 42h1v1h-1zM69 42h1v1h-1zM79 42h1v1h-1zM85 42h1v1h-1zM101 42h1v1h-1zM-140 43h1v1h-1zM-85 43h1v1h-1zM-81 43h1v1h-1zM-68 43h1v1h-1zM-66 43h1v1h-1zM-64 43h2v1h-2zM-55 43h1v1h-1zM-53 43h1v1h-1zM-48 43h2v1h-2zM-45 43h2v1h-2zM-42 43h1v1h-1zM-40 43h1v1h-1zM-37 43h2v1h-2zM-34 43h1v1h-1zM-29 43h1v1h-1zM-26 43h1v1h-1zM-24 43h4v1h-4zM-19 43h5v1h-5zM-12 43h10v1h-10zM-1 43h5v1h-5zM5 43h4v1h-4zM12 43h4v1h-4zM17 43h7v1h-7zM25 43h1v1h-1zM27 43h3v1h-3zM32 43h1v1h-1zM34 43h1v1h-1zM37 43h4v1h-4zM42 43h1v1h-1zM44 43h2v1h-2zM47 43h1v1h-1zM52 43h1v1h-1zM54 43h2v1h-2zM59 43h1v1h-1zM62 43h1v1h-1zM65 43h1v1h-1zM73 43h1v1h-1zM79 43h1v1h-1zM81 43h1v1h-1zM93 43h1v1h-1zM-107 44h2v1h-2zM-102 44h1v1h-1zM-97 44h1v1h-1zM-93 44h1v1h-1zM-91 44h1v1h-1zM-81 44h1v1h-1zM-63 44h1v1h-1zM-60 44h1v1h-1zM-53 44h1v1h-1zM-51 44h2v1h-2zM-47 44h2v1h-2zM-43 44h1v1h-1zM-38 44h1v1h-1zM-36 44h1v1h-1zM-34 44h10v1h-10zM-21 44h2v1h-2zM-17 44h3v1h-3zM-13 44h4v1h-4zM-7 44h4v1h-4zM-1 44h1v1h-1zM4 44h4v1h-4zM9 44h1v1h-1zM14 44h3v1h-3zM19 44h3v1h-3zM24 44h1v1h-1zM27 44h3v1h-3zM32 44h3v1h-3zM39 44h1v1h-1zM44 44h2v1h-2zM48 44h1v1h-1zM56 44h1v1h-1zM62 44h2v1h-2zM70 44h1v1h-1zM81 44h1v1h-1zM84 44h1v1h-1zM91 44h1v1h-1zM104 44h1v1h-1zM117 44h1v1h-1zM-122 45h1v1h-1zM-96 45h2v1h-2zM-80 45h1v1h-1zM-77 45h2v1h-2zM-72 45h1v1h-1zM-68 45h1v1h-1zM-65 45h1v1h-1zM-63 45h1v1h-1zM-61 45h2v1h-2zM-56 45h1v1h-1zM-53 45h3v1h-3zM-47 45h1v1h-1zM-44 45h2v1h-2zM-40 45h15v1h-15zM-19 45h2v1h-2zM-15 45h1v1h-1zM-13 45h2v1h-2zM-9 45h4v1h-4zM-4 45h1v1h-1zM-2 45h1v1h-1zM0 45h12v1h-12zM13 45h1v1h-1zM16 45h1v1h-1zM18 45h1v1h-1zM21 45h1v1h-1zM23 45h1v1h-1zM26 45h1v1h-1zM28 45h4v1h-4zM33 45h3v1h-3zM40 45h4v1h-4zM45 45h2v1h-2zM48 45h2v1h-2zM54 45h2v1h-2zM58 45h1v1h-1zM60 45h1v1h-1zM66 45h1v1h-1zM68 45h1v1h-1zM78 45h1v1h-1zM101 45h1v1h-1zM-100 46h1v1h-1zM-91 46h1v1h-1zM-78 46h1v1h-1zM-71 46h1v1h-1zM-61 46h1v1h-1zM-58 46h2v1h-2zM-51 46h2v1h-2zM-48 46h1v1h-1zM-45 46h1v1h-1zM-43 46h1v1h-1zM-41 46h2v1h-2zM-38 46h1v1h-1zM-35 46h6v1h-6zM-27 46h5v1h-5zM-21 46h4v1h-4zM-16 46h2v1h-2zM-11 46h1v1h-1zM-8 46h16v1h-16zM9 46h7v1h-7zM18 46h1v1h-1zM20 46h2v1h-2zM24 46h3v1h-3zM30 46h1v1h-1zM33 46h1v1h-1zM36 46h1v1h-1zM38 46h1v1h-1zM41 46h2v1h-2zM44 46h1v1h-1zM58 46h2v1h-2zM65 46h1v1h-1zM67 46h1v1h-1zM77 46h2v1h-2zM84 46h1v1h-1zM87 46h1v1h-1zM116 46h1v1h-1zM-145 47h1v1h-1zM-98 47h1v1h-1zM-81 47h1v1h-1zM-79 47h1v1h-1zM-70 47h1v1h-1zM-58 47h2v1h-2zM-55 47h2v1h-2zM-50 47h1v1h-1zM-48 47h1v1h-1zM-46 47h1v1h-1zM-41 47h1v1h-1zM-38 47h1v1h-1zM-35 47h1v1h-1zM-33 47h1v1h-1zM-31 47h1v1h-1zM-29 47h4v1h-4zM-24 47h4v1h-4zM-19 47h1v1h-1zM-17 47h1v1h-1zM-15 47h1v1h-1zM-13 47h1v1h-1zM-10 47h2v1h-2zM-6 47h3v1h-3zM-2 47h3v1h-3zM3 47h1v1h-1zM6 47h9v1h-9zM16 47h1v1h-1zM18 47h1v1h-1zM20 47h3v1h-3zM25 47h1v1h-1zM27 47h7v1h-7zM35 47h2v1h-2zM38 47h1v1h-1zM40 47h1v1h-1zM42 47h1v1h-1zM45 47h1v1h-1zM48 47h2v1h-2zM51 47h1v1h-1zM53 47h1v1h-1zM57 47h2v1h-2zM73 47h1v1h-1zM77 47h2v1h-2zM113 47h1v1h-1zM119 47h1v1h-1zM-84 48h1v1h-1zM-79 48h1v1h-1zM-72 48h1v1h-1zM-58 48h3v1h-3zM-54 48h1v1h-1zM-52 48h4v1h-4zM-47 48h1v1h-1zM-43 48h1v1h-1zM-40 48h3v1h-3zM-34 48h1v1h-1zM-31 48h2v1h-2zM-28 48h1v1h-1zM-23 48h3v1h-3zM-19 48h1v1h-1zM-17 48h4v1h-4zM-12 48h2v1h-2zM-8 48h2v1h-2zM-1 48h1v1h-1zM1 48h3v1h-3zM5 48h3v1h-3zM12 48h2v1h-2zM16 48h2v1h-2zM20 48h2v1h-2zM24 48h1v1h-1zM27 48h3v1h-3zM32 48h2v1h-2zM38 48h1v1h-1zM41 48h1v1h-1zM44 48h1v1h-1zM46 48h1v1h-1zM48 48h1v1h-1zM56 48h1v1h-1zM59 48h2v1h-2zM62 48h2v1h-2zM66 48h1v1h-1zM68 48h1v1h-1zM91 48h1v1h-1zM106 48h1v1h-1zM123 48h1v1h-1zM-135 49h1v1h-1zM-105 49h1v1h-1zM-81 49h1v1h-1zM-64 49h1v1h-1zM-60 49h1v1h-1zM-58 49h1v1h-1zM-53 49h1v1h-1zM-50 49h1v1h-1zM-47 49h2v1h-2zM-44 49h1v1h-1zM-42 49h1v1h-1zM-40 49h1v1h-1zM-35 49h4v1h-4zM-30 49h1v1h-1zM-27 49h2v1h-2zM-22 49h6v1h-6zM-15 49h3v1h-3zM-10 49h4v1h-4zM-3 49h1v1h-1zM-1 49h1v1h-1zM1 49h1v1h-1zM3 49h3v1h-3zM7 49h5v1h-5zM13 49h1v1h-1zM18 49h3v1h-3zM22 49h1v1h-1zM25 49h1v1h-1zM28 49h1v1h-1zM30 49h1v1h-1zM32 49h1v1h-1zM36 49h2v1h-2zM42 49h2v1h-2zM45 49h2v1h-2zM48 49h1v1h-1zM53 49h1v1h-1zM55 49h1v1h-1zM67 49h2v1h-2zM93 49h1v1h-1zM96 49h2v1h-2zM-89 50h1v1h-1zM-82 50h2v1h-2zM-74 50h2v1h-2zM-65 50h1v1h-1zM-63 50h1v1h-1zM-61 50h1v1h-1zM-59 50h1v1h-1zM-57 50h2v1h-2zM-53 50h1v1h-1zM-51 50h2v1h-2zM-47 50h1v1h-1zM-41 50h3v1h-3zM-34 50h1v1h-1zM-30 50h4v1h-4zM-24 50h2v1h-2zM-21 50h3v1h-3zM-15 50h2v1h-2zM-12 50h1v1h-1zM-9 50h1v1h-1zM-6 50h4v1h-4zM-1 50h1v1h-1zM2 50h1v1h-1zM5 50h6v1h-6zM12 50h1v1h-1zM15 50h1v1h-1zM17 50h1v1h-1zM21 50h1v1h-1zM23 50h1v1h-1zM25 50h2v1h-2zM31 50h4v1h-4zM37 50h4v1h-4zM42 50h4v1h-4zM47 50h2v1h-2zM50 50h2v1h-2zM54 50h2v1h-2zM61 50h1v1h-1zM63 50h1v1h-1zM66 50h1v1h-1zM71 50h2v1h-2zM82 50h1v1h-1zM87 50h1v1h-1zM-131 51h1v1h-1zM-100 51h1v1h-1zM-75 51h1v1h-1zM-73 51h1v1h-1zM-67 51h1v1h-1zM-65 51h1v1h-1zM-63 51h1v1h-1zM-57 51h3v1h-3zM-50 51h1v1h-1zM-45 51h1v1h-1zM-40 51h1v1h-1zM-37 51h1v1h-1zM-34 51h1v1h-1zM-32 51h4v1h-4zM-26 51h2v1h-2zM-23 51h3v1h-3zM-19 51h3v1h-3zM-13 51h2v1h-2zM-10 51h1v1h-1zM-8 51h1v1h-1zM-6 51h3v1h-3zM-2 51h1v1h-1zM1 51h2v1h-2zM4 51h4v1h-4zM9 51h2v1h-2zM12 51h1v1h-1zM14 51h3v1h-3zM18 51h2v1h-2zM21 51h1v1h-1zM23 51h3v1h-3zM27 51h1v1h-1zM30 51h1v1h-1zM36 51h3v1h-3zM41 51h1v1h-1zM45 51h5v1h-5zM52 51h2v1h-2zM55 51h1v1h-1zM63 51h1v1h-1zM65 51h1v1h-1zM82 51h1v1h-1zM86 51h1v1h-1zM88 51h1v1h-1zM91 51h1v1h-1zM94 51h1v1h-1zM99 51h1v1h-1zM-128 52h1v1h-1zM-82 52h1v1h-1zM-76 52h1v1h-1zM-72 52h1v1h-1zM-69 52h1v1h-1zM-62 52h1v1h-1zM-58 52h1v1h-1zM-56 52h1v1h-1zM-52 52h1v1h-1zM-48 52h1v1h-1zM-46 52h1v1h-1zM-44 52h1v1h-1zM-42 52h1v1h-1zM-39 52h2v1h-2zM-35 52h1v1h-1zM-33 52h1v1h-1zM-31 52h1v1h-1zM-29 52h1v1h-1zM-25 52h1v1h-1zM-21 52h5v1h-5zM-15 52h5v1h-5zM-9 52h2v1h-2zM-5 52h1v1h-1zM-2 52h1v1h-1zM3 52h2v1h-2zM6 52h3v1h-3zM12 52h2v1h-2zM15 52h1v1h-1zM17 52h4v1h-4zM22 52h1v1h-1zM25 52h4v1h-4zM37 52h3v1h-3zM42 52h2v1h-2zM46 52h2v1h-2zM49 52h1v1h-1zM56 52h1v1h-1zM63 52h2v1h-2zM69 52h5v1h-5zM78 52h1v1h-1zM85 52h1v1h-1zM92 52h1v1h-1zM-103 53h1v1h-1zM-101 53h1v1h-1zM-87 53h1v1h-1zM-85 53h1v1h-1zM-77 53h1v1h-1zM-66 53h2v1h-2zM-61 53h1v1h-1zM-59 53h1v1h-1zM-56 53h1v1h-1zM-50 53h2v1h-2zM-47 53h4v1h-4zM-42 53h1v1h-1zM-38 53h1v1h-1zM-33 53h6v1h-6zM-26 53h1v1h-1zM-23 53h1v1h-1zM-21 53h1v1h-1zM-16 53h5v1h-5zM-10 53h2v1h-2zM-2 53h1v1h-1zM0 53h4v1h-4zM5 53h10v1h-10zM16 53h1v1h-1zM19 53h2v1h-2zM22 53h2v1h-2zM25 53h1v1h-1zM30 53h3v1h-3zM34 53h2v1h-2zM37 53h1v1h-1zM40 53h2v1h-2zM44 53h1v1h-1zM46 53h1v1h-1zM49 53h1v1h-1zM51 53h2v1h-2zM54 53h3v1h-3zM59 53h1v1h-1zM66 53h2v1h-2zM69 53h1v1h-1zM71 53h2v1h-2zM75 53h2v1h-2zM79 53h1v1h-1zM-85 54h1v1h-1zM-82 54h1v1h-1zM-78 54h1v1h-1zM-75 54h1v1h-1zM-73 54h1v1h-1zM-62 54h1v1h-1zM-49 54h1v1h-1zM-47 54h3v1h-3zM-41 54h3v1h-3zM-37 54h2v1h-2zM-30 54h2v1h-2zM-26 54h4v1h-4zM-18 54h2v1h-2zM-13 54h6v1h-6zM-6 54h5v1h-5zM0 54h1v1h-1zM4 54h4v1h-4zM9 54h1v1h-1zM11 54h6v1h-6zM18 54h3v1h-3zM23 54h1v1h-1zM25 54h1v1h-1zM27 54h2v1h-2zM30 54h1v1h-1zM35 54h1v1h-1zM39 54h1v1h-1zM41 54h4v1h-4zM46 54h1v1h-1zM50 54h1v1h-1zM53 54h2v1h-2zM56 54h2v1h-2zM59 54h1v1h-1zM62 54h6v1h-6zM86 54h1v1h-1zM90 54h1v1h-1zM-102 55h1v1h-1zM-84 55h1v1h-1zM-74 55h1v1h-1zM-66 55h1v1h-1zM-64 55h2v1h-2zM-61 55h1v1h-1zM-59 55h2v1h-2zM-56 55h1v1h-1zM-53 55h3v1h-3zM-49 55h3v1h-3zM-44 55h1v1h-1zM-41 55h1v1h-1zM-38 55h1v1h-1zM-36 55h5v1h-5zM-30 55h2v1h-2zM-27 55h1v1h-1zM-25 55h2v1h-2zM-17 55h2v1h-2zM-14 55h2v1h-2zM-8 55h2v1h-2zM-4 55h2v1h-2zM-1 55h3v1h-3zM3 55h3v1h-3zM8 55h2v1h-2zM11 55h2v1h-2zM14 55h1v1h-1zM17 55h1v1h-1zM19 55h1v1h-1zM22 55h1v1h-1zM24 55h1v1h-1zM30 55h1v1h-1zM32 55h1v1h-1zM36 55h3v1h-3zM45 55h1v1h-1zM57 55h1v1h-1zM60 55h1v1h-1zM76 55h1v1h-1zM82 55h1v1h-1zM95 55h1v1h-1zM110 55h1v1h-1zM-90 56h1v1h-1zM-81 56h1v1h-1zM-63 56h1v1h-1zM-60 56h2v1h-2zM-55 56h2v1h-2zM-52 56h2v1h-2zM-47 56h1v1h-1zM-43 56h2v1h-2zM-39 56h1v1h-1zM-37 56h1v1h-1zM-35 56h1v1h-1zM-32 56h1v1h-1zM-27 56h1v1h-1zM-25 56h1v1h-1zM-23 56h3v1h-3zM-15 56h4v1h-4zM-10 56h1v1h-1zM-7 56h1v1h-1zM-5 56h2v1h-2zM-1 56h1v1h-1zM1 56h1v1h-1zM3 56h1v1h-1zM5 56h1v1h-1zM8 56h4v1h-4zM14 56h1v1h-1zM18 56h3v1h-3zM25 56h1v1h-1zM30 56h1v1h-1zM32 56h1v1h-1zM34 56h1v1h-1zM36 56h2v1h-2zM45 56h2v1h-2zM51 56h1v1h-1zM54 56h2v1h-2zM57 56h2v1h-2zM61 56h1v1h-1zM74 56h2v1h-2zM85 56h1v1h-1zM100 56h1v1h-1zM-125 57h1v1h-1zM-120 57h1v1h-1zM-103 57h1v1h-1zM-84 57h1v1h-1zM-81 57h2v1h-2zM-74 57h1v1h-1zM-72 57h1v1h-1zM-69 57h1v1h-1zM-66 57h1v1h-1zM-56 57h1v1h-1zM-53 57h2v1h-2zM-47 57h1v1h-1zM-45 57h1v1h-1zM-40 57h4v1h-4zM-35 57h1v1h-1zM-33 57h2v1h-2zM-25 57h1v1h-1zM-21 57h2v1h-2zM-18 57h1v1h-1zM-13 57h2v1h-2zM-10 57h2v1h-2zM-4 57h1v1h-1zM0 57h1v1h-1zM2 57h3v1h-3zM7 57h1v1h-1zM12 57h1v1h-1zM14 57h5v1h-5zM21 57h2v1h-2zM26 57h4v1h-4zM31 57h2v1h-2zM36 57h1v1h-1zM38 57h1v1h-1zM40 57h1v1h-1zM44 57h1v1h-1zM51 57h1v1h-1zM53 57h1v1h-1zM55 57h1v1h-1zM57 57h1v1h-1zM60 57h2v1h-2zM64 57h2v1h-2zM68 57h1v1h-1zM72 57h2v1h-2zM77 57h1v1h-1zM81 57h1v1h-1zM90 57h1v1h-1zM105 57h1v1h-1zM-90 58h2v1h-2zM-83 58h1v1h-1zM-67 58h1v1h-1zM-63 58h1v1h-1zM-61 58h1v1h-1zM-59 58h1v1h-1zM-57 58h2v1h-2zM-47 58h2v1h-2zM-44 58h4v1h-4zM-39 58h3v1h-3zM-33 58h1v1h-1zM-29 58h3v1h-3zM-25 58h1v1h-1zM-22 58h1v1h-1zM-20 58h4v1h-4zM-15 58h2v1h-2zM-12 58h2v1h-2zM-8 58h1v1h-1zM-5 58h2v1h-2zM-1 58h2v1h-2zM4 58h2v1h-2zM7 58h1v1h-1zM10 58h1v1h-1zM12 58h1v1h-1zM14 58h1v1h-1zM16 58h1v1h-1zM22 58h3v1h-3zM26 58h2v1h-2zM34 58h1v1h-1zM37 58h1v1h-1zM39 58h2v1h-2zM43 58h1v1h-1zM51 58h1v1h-1zM59 58h1v1h-1zM64 58h2v1h-2zM71 58h1v1h-1zM84 58h1v1h-1zM-136 59h1v1h-1zM-119 59h1v1h-1zM-74 59h1v1h-1zM-72 59h1v1h-1zM-67 59h2v1h-2zM-64 59h1v1h-1zM-61 59h1v1h-1zM-52 59h1v1h-1zM-49 59h1v1h-1zM-46 59h1v1h-1zM-44 59h1v1h-1zM-39 59h3v1h-3zM-34 59h2v1h-2zM-31 59h1v1h-1zM-27 59h2v1h-2zM-24 59h2v1h-2zM-20 59h1v1h-1zM-15 59h1v1h-1zM-13 59h2v1h-2zM-8 59h1v1h-1zM-4 59h1v1h-1zM-2 59h2v1h-2zM1 59h2v1h-2zM4 59h3v1h-3zM8 59h1v1h-1zM10 59h2v1h-2zM14 59h4v1h-4zM20 59h2v1h-2zM23 59h1v1h-1zM25 59h1v1h-1zM27 59h3v1h-3zM32 59h1v1h-1zM35 59h1v1h-1zM38 59h1v1h-1zM40 59h1v1h-1zM43 59h1v1h-1zM45 59h1v1h-1zM56 59h1v1h-1zM66 59h1v1h-1zM71 59h1v1h-1zM75 59h1v1h-1zM77 59h2v1h-2zM81 59h1v1h-1zM102 59h1v1h-1zM122 59h1v1h-1zM-112 60h1v1h-1zM-100 60h1v1h-1zM-85 60h1v1h-1zM-73 60h1v1h-1zM-66 60h1v1h-1zM-62 60h2v1h-2zM-57 60h1v1h-1zM-48 60h1v1h-1zM-45 60h2v1h-2zM-40 60h1v1h-1zM-37 60h2v1h-2zM-33 60h2v1h-2zM-30 60h2v1h-2zM-25 60h1v1h-1zM-20 60h1v1h-1zM-17 60h3v1h-3zM-13 60h2v1h-2zM-10 60h3v1h-3zM-4 60h1v1h-1zM-2 60h3v1h-3zM3 60h5v1h-5zM10 60h2v1h-2zM14 60h1v1h-1zM16 60h2v1h-2zM20 60h2v1h-2zM25 60h4v1h-4zM38 60h1v1h-1zM41 60h3v1h-3zM47 60h1v1h-1zM50 60h4v1h-4zM58 60h1v1h-1zM60 60h2v1h-2zM66 60h1v1h-1zM69 60h1v1h-1zM75 60h1v1h-1zM86 60h1v1h-1zM88 60h1v1h-1zM91 60h1v1h-1zM-94 61h1v1h-1zM-82 61h1v1h-1zM-71 61h2v1h-2zM-68 61h1v1h-1zM-56 61h1v1h-1zM-48 61h1v1h-1zM-43 61h2v1h-2zM-34 61h2v1h-2zM-31 61h1v1h-1zM-29 61h1v1h-1zM-23 61h1v1h-1zM-20 61h2v1h-2zM-17 61h1v1h-1zM-15 61h4v1h-4zM-8 61h2v1h-2zM-2 61h2v1h-2zM2 61h1v1h-1zM4 61h1v1h-1zM8 61h2v1h-2zM11 61h3v1h-3zM15 61h3v1h-3zM19 61h3v1h-3zM28 61h2v1h-2zM33 61h1v1h-1zM36 61h3v1h-3zM44 61h1v1h-1zM47 61h1v1h-1zM50 61h2v1h-2zM54 61h2v1h-2zM60 61h3v1h-3zM88 61h1v1h-1zM-98 62h1v1h-1zM-74 62h1v1h-1zM-69 62h1v1h-1zM-60 62h1v1h-1zM-53 62h2v1h-2zM-50 62h1v1h-1zM-47 62h3v1h-3zM-43 62h1v1h-1zM-40 62h1v1h-1zM-38 62h2v1h-2zM-33 62h1v1h-1zM-31 62h1v1h-1zM-27 62h2v1h-2zM-18 62h2v1h-2zM-15 62h4v1h-4zM-10 62h2v1h-2zM-7 62h1v1h-1zM-4 62h4v1h-4zM1 62h1v1h-1zM4 62h1v1h-1zM6 62h2v1h-2zM11 62h1v1h-1zM13 62h3v1h-3zM21 62h4v1h-4zM27 62h2v1h-2zM30 62h1v1h-1zM35 62h1v1h-1zM39 62h2v1h-2zM47 62h3v1h-3zM52 62h1v1h-1zM54 62h1v1h-1zM56 62h1v1h-1zM63 62h2v1h-2zM74 62h1v1h-1zM76 62h1v1h-1zM84 62h1v1h-1zM-107 63h1v1h-1zM-91 63h1v1h-1zM-86 63h1v1h-1zM-76 63h1v1h-1zM-68 63h1v1h-1zM-63 63h1v1h-1zM-54 63h2v1h-2zM-49 63h1v1h-1zM-42 63h1v1h-1zM-39 63h1v1h-1zM-35 63h1v1h-1zM-32 63h2v1h-2zM-29 63h2v1h-2zM-26 63h1v1h-1zM-24 63h2v1h-2zM-21 63h2v1h-2zM-13 63h1v1h-1zM-11 63h1v1h-1zM-9 63h2v1h-2zM-6 63h1v1h-1zM-4 63h1v1h-1zM-2 63h4v1h-4zM5 63h5v1h-5zM12 63h1v1h-1zM15 63h1v1h-1zM17 63h2v1h-2zM21 63h1v1h-1zM26 63h5v1h-5zM36 63h5v1h-5zM42 63h1v1h-1zM46 63h1v1h-1zM49 63h1v1h-1zM52 63h2v1h-2zM58 63h1v1h-1zM61 63h1v1h-1zM67 63h1v1h-1zM73 63h2v1h-2zM81 63h1v1h-1zM-87 64h1v1h-1zM-70 64h1v1h-1zM-68 64h1v1h-1zM-62 64h1v1h-1zM-59 64h1v1h-1zM-44 64h1v1h-1zM-40 64h1v1h-1zM-31 64h1v1h-1zM-27 64h2v1h-2zM-23 64h1v1h-1zM-20 64h1v1h-1zM-15 64h4v1h-4zM-7 64h1v1h-1zM-5 64h1v1h-1zM-3 64h1v1h-1zM1 64h3v1h-3zM5 64h2v1h-2zM8 64h1v1h-1zM10 64h2v1h-2zM14 64h1v1h-1zM16 64h1v1h-1zM21 64h2v1h-2zM25 64h1v1h-1zM27 64h2v1h-2zM31 64h1v1h-1zM34 64h1v1h-1zM36 64h1v1h-1zM39 64h1v1h-1zM42 64h1v1h-1zM44 64h1v1h-1zM47 64h1v1h-1zM50 64h1v1h-1zM53 64h1v1h-1zM60 64h1v1h-1zM65 64h1v1h-1zM69 64h1v1h-1zM74 64h1v1h-1zM77 64h1v1h-1zM79 64h1v1h-1zM85 64h1v1h-1zM-93 65h1v1h-1zM-73 65h1v1h-1zM-66 65h1v1h-1zM-64 65h1v1h-1zM-55 65h1v1h-1zM-43 65h1v1h-1zM-36 65h1v1h-1zM-34 65h1v1h-1zM-31 65h1v1h-1zM-26 65h1v1h-1zM-23 65h2v1h-2zM-18 65h5v1h-5zM-11 65h1v1h-1zM-8 65h1v1h-1zM-3 65h1v1h-1zM-1 65h1v1h-1zM2 65h1v1h-1zM4 65h3v1h-3zM12 65h1v1h-1zM15 65h3v1h-3zM19 65h2v1h-2zM22 65h1v1h-1zM24 65h1v1h-1zM31 65h2v1h-2zM35 65h2v1h-2zM38 65h1v1h-1zM48 65h1v1h-1zM50 65h3v1h-3zM56 65h1v1h-1zM62 65h1v1h-1zM66 65h1v1h-1zM78 65h2v1h-2zM81 65h1v1h-1zM111 65h1v1h-1zM-78 66h1v1h-1zM-51 66h1v1h-1zM-48 66h1v1h-1zM-46 66h1v1h-1zM-44 66h2v1h-2zM-40 66h1v1h-1zM-38 66h1v1h-1zM-34 66h1v1h-1zM-30 66h1v1h-1zM-26 66h1v1h-1zM-24 66h1v1h-1zM-22 66h1v1h-1zM-19 66h1v1h-1zM-15 66h6v1h-6zM-7 66h2v1h-2zM-4 66h3v1h-3zM0 66h1v1h-1zM5 66h3v1h-3zM11 66h1v1h-1zM13 66h2v1h-2zM16 66h1v1h-1zM18 66h1v1h-1zM21 66h2v1h-2zM25 66h1v1h-1zM27 66h2v1h-2zM33 66h1v1h-1zM40 66h1v1h-1zM46 66h1v1h-1zM48 66h1v1h-1zM52 66h2v1h-2zM55 66h1v1h-1zM57 66h1v1h-1zM60 66h1v1h-1zM63 66h1v1h-1zM79 66h1v1h-1zM81 66h1v1h-1zM89 66h1v1h-1zM103 66h1v1h-1zM-87 67h1v1h-1zM-78 67h1v1h-1zM-73 67h1v1h-1zM-69 67h1v1h-1zM-67 67h1v1h-1zM-62 67h1v1h-1zM-59 67h2v1h-2zM-54 67h1v1h-1zM-50 67h1v1h-1zM-48 67h1v1h-1zM-45 67h2v1h-2zM-41 67h1v1h-1zM-37 67h1v1h-1zM-31 67h1v1h-1zM-27 67h1v1h-1zM-21 67h5v1h-5zM-14 67h2v1h-2zM-10 67h1v1h-1zM-3 67h1v1h-1zM0 67h1v1h-1zM3 67h1v1h-1zM5 67h1v1h-1zM9 67h2v1h-2zM12 67h4v1h-4zM17 67h2v1h-2zM21 67h1v1h-1zM23 67h2v1h-2zM27 67h1v1h-1zM30 67h1v1h-1zM34 67h1v1h-1zM38 67h2v1h-2zM45 67h1v1h-1zM48 67h1v1h-1zM51 67h1v1h-1zM54 67h1v1h-1zM56 67h2v1h-2zM60 67h1v1h-1zM79 67h1v1h-1zM-103 68h1v1h-1zM-99 68h1v1h-1zM-64 68h1v1h-1zM-56 68h1v1h-1zM-51 68h3v1h-3zM-47 68h1v1h-1zM-45 68h1v1h-1zM-35 68h4v1h-4zM-29 68h1v1h-1zM-25 68h2v1h-2zM-22 68h1v1h-1zM-20 68h2v1h-2zM-16 68h1v1h-1zM-13 68h1v1h-1zM-6 68h1v1h-1zM-3 68h3v1h-3zM2 68h1v1h-1zM6 68h4v1h-4zM20 68h1v1h-1zM22 68h2v1h-2zM27 68h2v1h-2zM31 68h3v1h-3zM35 68h1v1h-1zM41 68h1v1h-1zM45 68h2v1h-2zM49 68h2v1h-2zM55 68h1v1h-1zM63 68h2v1h-2zM121 68h1v1h-1zM125 68h1v1h-1zM-109 69h1v1h-1zM-61 69h1v1h-1zM-56 69h2v1h-2zM-46 69h1v1h-1zM-44 69h1v1h-1zM-28 69h2v1h-2zM-17 69h1v1h-1zM-15 69h1v1h-1zM-13 69h1v1h-1zM-11 69h1v1h-1zM-7 69h1v1h-1zM-4 69h1v1h-1zM-1 69h1v1h-1zM2 69h2v1h-2zM5 69h1v1h-1zM8 69h1v1h-1zM11 69h1v1h-1zM18 69h1v1h-1zM23 69h1v1h-1zM27 69h1v1h-1zM30 69h2v1h-2zM40 69h2v1h-2zM44 69h1v1h-1zM51 69h1v1h-1zM55 69h1v1h-1zM57 69h1v1h-1zM59 69h1v1h-1zM62 69h1v1h-1zM70 69h2v1h-2zM74 69h1v1h-1zM77 69h1v1h-1zM96 69h1v1h-1zM-108 70h1v1h-1zM-91 70h1v1h-1zM-88 70h1v1h-1zM-81 70h2v1h-2zM-77 70h1v1h-1zM-61 70h1v1h-1zM-52 70h1v1h-1zM-48 70h2v1h-2zM-44 70h2v1h-2zM-35 70h1v1h-1zM-33 70h1v1h-1zM-30 70h1v1h-1zM-26 70h1v1h-1zM-19 70h1v1h-1zM-17 70h2v1h-2zM-10 70h2v1h-2zM-6 70h2v1h-2zM-2 70h1v1h-1zM1 70h2v1h-2zM5 70h1v1h-1zM7 70h2v1h-2zM12 70h2v1h-2zM15 70h3v1h-3zM20 70h2v1h-2zM23 70h1v1h-1zM28 70h1v1h-1zM30 70h1v1h-1zM33 70h3v1h-3zM38 70h1v1h-1zM44 70h1v1h-1zM48 70h1v1h-1zM59 70h1v1h-1zM70 70h1v1h-1zM74 70h1v1h-1zM79 70h1v1h-1zM88 70h1v1h-1zM97 70h1v1h-1zM-84 71h1v1h-1zM-74 71h1v1h-1zM-69 71h1v1h-1zM-61 71h1v1h-1zM-52 71h1v1h-1zM-49 71h1v1h-1zM-46 71h1v1h-1zM-44 71h1v1h-1zM-33 71h1v1h-1zM-29 71h3v1h-3zM-25 71h1v1h-1zM-23 71h3v1h-3zM-19 71h1v1h-1zM-17 71h1v1h-1zM-14 71h1v1h-1zM-11 71h1v1h-1zM-5 71h2v1h-2zM-1 71h4v1h-4zM6 71h1v1h-1zM9 71h1v1h-1zM16 71h1v1h-1zM24 71h1v1h-1zM27 71h1v1h-1zM30 71h1v1h-1zM32 71h2v1h-2zM36 71h4v1h-4zM42 71h1v1h-1zM44 71h2v1h-2zM56 71h1v1h-1zM58 71h1v1h-1zM62 71h1v1h-1zM93 71h1v1h-1zM-122 72h1v1h-1zM-95 72h1v1h-1zM-70 72h1v1h-1zM-63 72h2v1h-2zM-60 72h1v1h-1zM-57 72h1v1h-1zM-44 72h1v1h-1zM-35 72h1v1h-1zM-32 72h1v1h-1zM-27 72h2v1h-2zM-22 72h3v1h-3zM-18 72h1v1h-1zM-16 72h1v1h-1zM-13 72h2v1h-2zM-8 72h2v1h-2zM-4 72h2v1h-2zM3 72h1v1h-1zM11 72h2v1h-2zM14 72h1v1h-1zM16 72h1v1h-1zM24 72h2v1h-2zM27 72h2v1h-2zM31 72h1v1h-1zM33 72h1v1h-1zM38 72h1v1h-1zM61 72h1v1h-1zM66 72h1v1h-1zM69 72h1v1h-1zM76 72h1v1h-1zM80 72h1v1h-1zM89 72h1v1h-1zM-108 73h1v1h-1zM-81 73h1v1h-1zM-76 73h1v1h-1zM-71 73h1v1h-1zM-57 73h1v1h-1zM-48 73h1v1h-1zM-37 73h1v1h-1zM-30 73h1v1h-1zM-28 73h1v1h-1zM-26 73h2v1h-2zM-15 73h1v1h-1zM-12 73h1v1h-1zM-8 73h3v1h-3zM-1 73h1v1h-1zM2 73h1v1h-1zM10 73h2v1h-2zM14 73h3v1h-3zM25 73h1v1h-1zM29 73h1v1h-1zM31 73h1v1h-1zM36 73h2v1h-2zM42 73h3v1h-3zM52 73h3v1h-3zM78 73h1v1h-1zM80 73h2v1h-2zM89 73h1v1h-1zM105 73h1v1h-1zM-105 74h1v1h-1zM-51 74h1v1h-1zM-44 74h1v1h-1zM-40 74h1v1h-1zM-34 74h1v1h-1zM-29 74h1v1h-1zM-26 74h1v1h-1zM-24 74h1v1h-1zM-14 74h2v1h-2zM-3 74h2v1h-2zM6 74h1v1h-1zM10 74h2v1h-2zM14 74h1v1h-1zM17 74h1v1h-1zM26 74h1v1h-1zM29 74h1v1h-1zM32 74h1v1h-1zM37 74h1v1h-1zM41 74h1v1h-1zM49 74h1v1h-1zM60 74h1v1h-1zM76 74h1v1h-1zM84 74h1v1h-1zM98 74h1v1h-1zM103 74h2v1h-2zM108 74h1v1h-1zM-96 75h1v1h-1zM-70 75h1v1h-1zM-61 75h1v1h-1zM-53 75h1v1h-1zM-45 75h3v1h-3zM-36 75h1v1h-1zM-27 75h2v1h-2zM-24 75h1v1h-1zM-17 75h1v1h-1zM-9 75h2v1h-2zM-4 75h3v1h-3zM1 75h6v1h-6zM13 75h1v1h-1zM15 75h1v1h-1zM19 75h1v1h-1zM24 75h3v1h-3zM34 75h1v1h-1zM39 75h1v1h-1zM52 75h1v1h-1zM54 75h1v1h-1zM68 75h1v1h-1zM76 75h1v1h-1zM90 75h1v1h-1zM-89 76h2v1h-2zM-75 76h1v1h-1zM-70 76h1v1h-1zM-57 76h1v1h-1zM-49 76h3v1h-3zM-42 76h1v1h-1zM-40 76h1v1h-1zM-38 76h1v1h-1zM-30 76h1v1h-1zM-22 76h1v1h-1zM-16 76h2v1h-2zM-13 76h1v1h-1zM-10 76h1v1h-1zM-7 76h1v1h-1zM-2 76h1v1h-1zM2 76h3v1h-3zM6 76h1v1h-1zM8 76h1v1h-1zM12 76h1v1h-1zM17 76h3v1h-3zM22 76h1v1h-1zM24 76h1v1h-1zM27 76h1v1h-1zM29 76h3v1h-3zM33 76h1v1h-1zM36 76h1v1h-1zM42 76h1v1h-1zM55 76h1v1h-1zM95 76h1v1h-1zM107 76h1v1h-1zM-109 77h2v1h-2zM-97 77h1v1h-1zM-82 77h1v1h-1zM-74 77h1v1h-1zM-72 77h1v1h-1zM-63 77h1v1h-1zM-53 77h2v1h-2zM-45 77h1v1h-1zM-21 77h2v1h-2zM-8 77h2v1h-2zM-4 77h2v1h-2zM0 77h1v1h-1zM2 77h1v1h-1zM4 77h1v1h-1zM6 77h1v1h-1zM8 77h1v1h-1zM10 77h5v1h-5zM27 77h1v1h-1zM41 77h2v1h-2zM52 77h1v1h-1zM55 77h2v1h-2zM62 77h1v1h-1zM68 77h1v1h-1zM-89 78h1v1h-1zM-68 78h1v1h-1zM-59 78h1v1h-1zM-49 78h2v1h-2zM-34 78h1v1h-1zM-29 78h2v1h-2zM-21 78h1v1h-1zM-14 78h1v1h-1zM-11 78h5v1h-5zM-5 78h1v1h-1zM-3 78h3v1h-3zM2 78h1v1h-1zM9 78h3v1h-3zM13 78h2v1h-2zM16 78h1v1h-1zM22 78h2v1h-2zM31 78h1v1h-1zM34 78h2v1h-2zM46 78h1v1h-1zM56 78h1v1h-1zM70 78h1v1h-1zM90 78h1v1h-1zM-63 79h1v1h-1zM-48 79h1v1h-1zM-35 79h1v1h-1zM-17 79h1v1h-1zM-15 79h1v1h-1zM-12 79h4v1h-4zM-4 79h1v1h-1zM-2 79h1v1h-1zM3 79h1v1h-1zM5 79h2v1h-2zM8 79h1v1h-1zM10 79h1v1h-1zM13 79h2v1h-2zM16 79h1v1h-1zM22 79h1v1h-1zM25 79h1v1h-1zM31 79h1v1h-1zM38 79h1v1h-1zM40 79h1v1h-1zM42 79h1v1h-1zM46 79h1v1h-1zM48 79h1v1h-1zM52 79h2v1h-2zM55 79h1v1h-1zM110 79h1v1h-1zM-69 80h1v1h-1zM-47 80h1v1h-1zM-41 80h1v1h-1zM-39 80h1v1h-1zM-21 80h2v1h-2zM-16 80h1v1h-1zM-10 80h1v1h-1zM3 80h1v1h-1zM6 80h1v1h-1zM13 80h1v1h-1zM15 80h1v1h-1zM18 80h2v1h-2zM22 80h2v1h-2zM26 80h1v1h-1zM32 80h1v1h-1zM36 80h1v1h-1zM38 80h1v1h-1zM41 80h2v1h-2zM47 80h2v1h-2zM53 80h1v1h-1zM101 80h1v1h-1zM-117 81h1v1h-1zM-88 81h1v1h-1zM-46 81h1v1h-1zM-38 81h1v1h-1zM-25 81h1v1h-1zM-20 81h1v1h-1zM-13 81h2v1h-2zM-7 81h2v1h-2zM0 81h1v1h-1zM6 81h1v1h-1zM8 81h3v1h-3zM12 81h2v1h-2zM17 81h1v1h-1zM19 81h1v1h-1zM23 81h1v1h-1zM37 81h1v1h-1zM40 81h1v1h-1zM45 81h1v1h-1zM47 81h1v1h-1zM53 81h1v1h-1zM58 81h1v1h-1zM65 81h1v1h-1zM96 81h1v1h-1zM-87 82h1v1h-1zM-72 82h1v1h-1zM-64 82h1v1h-1zM-53 82h2v1h-2zM-46 82h1v1h-1zM-43 82h1v1h-1zM-40 82h2v1h-2zM-32 82h2v1h-2zM-27 82h1v1h-1zM-24 82h1v1h-1zM-20 82h3v1h-3zM-16 82h1v1h-1zM-14 82h1v1h-1zM-12 82h1v1h-1zM-10 82h2v1h-2zM-4 82h2v1h-2zM3 82h1v1h-1zM12 82h1v1h-1zM26 82h1v1h-1zM30 82h1v1h-1zM32 82h1v1h-1zM34 82h1v1h-1zM37 82h1v1h-1zM40 82h2v1h-2zM47 82h1v1h-1zM49 82h1v1h-1zM61 82h1v1h-1zM67 82h1v1h-1zM-60 83h2v1h-2zM-50 83h1v1h-1zM-47 83h2v1h-2zM-41 83h1v1h-1zM-38 83h1v1h-1zM-24 83h1v1h-1zM-22 83h2v1h-2zM-17 83h2v1h-2zM2 83h1v1h-1zM7 83h1v1h-1zM16 83h1v1h-1zM29 83h1v1h-1zM32 83h1v1h-1zM38 83h1v1h-1zM40 83h3v1h-3zM57 83h2v1h-2zM73 83h1v1h-1zM76 83h1v1h-1zM88 83h1v1h-1zM-96 84h1v1h-1zM-80 84h1v1h-1zM-77 84h1v1h-1zM-53 84h2v1h-2zM-30 84h2v1h-2zM-27 84h1v1h-1zM-23 84h2v1h-2zM-20 84h1v1h-1zM-14 84h3v1h-3zM-9 84h1v1h-1zM-3 84h2v1h-2zM7 84h3v1h-3zM12 84h1v1h-1zM15 84h1v1h-1zM20 84h1v1h-1zM28 84h2v1h-2zM42 84h1v1h-1zM56 84h1v1h-1zM58 84h1v1h-1zM61 84h1v1h-1zM-65 85h1v1h-1zM-61 85h1v1h-1zM-56 85h1v1h-1zM-44 85h1v1h-1zM-30 85h1v1h-1zM-24 85h1v1h-1zM-22 85h1v1h-1zM-15 85h1v1h-1zM-7 85h1v1h-1zM-4 85h1v1h-1zM6 85h1v1h-1zM14 85h1v1h-1zM16 85h1v1h-1zM19 85h1v1h-1zM22 85h1v1h-1zM24 85h1v1h-1zM28 85h3v1h-3zM35 85h1v1h-1zM72 85h1v1h-1zM77 85h1v1h-1zM97 85h1v1h-1zM-91 86h1v1h-1zM-66 86h1v1h-1zM-55 86h1v1h-1zM-30 86h2v1h-2zM-26 86h1v1h-1zM-16 86h1v1h-1zM1 86h1v1h-1zM7 86h1v1h-1zM9 86h1v1h-1zM12 86h1v1h-1zM15 86h1v1h-1zM18 86h3v1h-3zM28 86h1v1h-1zM68 86h1v1h-1zM88 86h1v1h-1zM-73 87h1v1h-1zM-27 87h1v1h-1zM-20 87h1v1h-1zM-15 87h3v1h-3zM0 87h1v1h-1zM2 87h1v1h-1zM4 87h3v1h-3zM9 87h4v1h-4zM18 87h1v1h-1zM22 87h1v1h-1zM50 87h1v1h-1zM54 87h1v1h-1zM63 87h1v1h-1zM-93 88h1v1h-1zM-72 88h1v1h-1zM-58 88h1v1h-1zM-46 88h1v1h-1zM-44 88h1v1h-1zM-41 88h1v1h-1zM-12 88h1v1h-1zM-10 88h2v1h-2zM-7 88h2v1h-2zM-2 88h1v1h-1zM1 88h2v1h-2zM5 88h2v1h-2zM11 88h1v1h-1zM18 88h1v1h-1zM22 88h1v1h-1zM35 88h1v1h-1zM38 88h1v1h-1zM50 88h1v1h-1zM71 88h1v1h-1zM-89 89h1v1h-1zM-55 89h2v1h-2zM-49 89h1v1h-1zM-43 89h1v1h-1zM-25 89h1v1h-1zM-18 89h1v1h-1zM-14 89h1v1h-1zM-10 89h1v1h-1zM-5 89h1v1h-1zM0 89h1v1h-1zM5 89h1v1h-1zM11 89h1v1h-1zM14 89h1v1h-1zM17 89h1v1h-1zM27 89h1v1h-1zM29 89h1v1h-1zM57 89h1v1h-1zM62 89h1v1h-1zM-104 90h1v1h-1zM-74 90h1v1h-1zM-71 90h1v1h-1zM-36 90h1v1h-1zM-30 90h1v1h-1zM-18 90h2v1h-2zM-15 90h1v1h-1zM-4 90h1v1h-1zM-2 90h1v1h-1zM0 90h1v1h-1zM9 90h1v1h-1zM24 90h1v1h-1zM28 90h1v1h-1zM32 90h1v1h-1zM34 90h1v1h-1zM38 90h1v1h-1zM43 90h1v1h-1zM50 90h1v1h-1zM-52 91h1v1h-1zM-27 91h1v1h-1zM-23 91h1v1h-1zM-21 91h1v1h-1zM-19 91h1v1h-1zM-15 91h1v1h-1zM-5 91h2v1h-2zM9 91h1v1h-1zM15 91h1v1h-1zM20 91h1v1h-1zM24 91h1v1h-1zM34 91h1v1h-1zM44 91h1v1h-1zM-55 92h1v1h-1zM-46 92h2v1h-2zM-27 92h2v1h-2zM-23 92h1v1h-1zM-17 92h1v1h-1zM-15 92h1v1h-1zM-12 92h1v1h-1zM-8 92h1v1h-1zM0 92h1v1h-1zM3 92h1v1h-1zM7 92h1v1h-1zM14 92h1v1h-1zM17 92h1v1h-1zM21 92h2v1h-2zM24 92h1v1h-1zM29 92h2v1h-2zM35 92h2v1h-2zM41 92h1v1h-1zM47 92h1v1h-1zM57 92h1v1h-1zM87 92h1v1h-1zM-56 93h1v1h-1zM-48 93h1v1h-1zM-26 93h2v1h-2zM-20 93h1v1h-1zM-4 93h1v1h-1zM1 93h2v1h-2zM17 93h1v1h-1zM19 93h1v1h-1zM27 93h1v1h-1zM31 93h1v1h-1zM45 93h1v1h-1zM53 93h1v1h-1zM58 93h1v1h-1zM67 93h1v1h-1zM96 93h1v1h-1zM-51 94h1v1h-1zM-40 94h1v1h-1zM-36 94h1v1h-1zM-34 94h1v1h-1zM-26 94h1v1h-1zM-17 94h1v1h-1zM-10 94h1v1h-1zM-8 94h1v1h-1zM-2 94h1v1h-1zM13 94h1v1h-1zM28 94h1v1h-1zM52 94h1v1h-1zM54 94h1v1h-1zM65 94h1v1h-1zM-102 95h1v1h-1zM-62 95h1v1h-1zM-54 95h1v1h-1zM-17 95h1v1h-1zM9 95h1v1h-1zM22 95h1v1h-1zM25 95h1v1h-1zM28 95h1v1h-1zM32 95h1v1h-1zM34 95h1v1h-1zM44 95h1v1h-1zM73 95h1v1h-1zM78 95h1v1h-1zM-84 96h1v1h-1zM-69 96h1v1h-1zM-20 96h1v1h-1zM-16 96h1v1h-1zM-10 96h1v1h-1zM-7 96h1v1h-1zM4 96h3v1h-3zM11 96h1v1h-1zM16 96h1v1h-1zM34 96h1v1h-1zM37 96h1v1h-1zM61 96h1v1h-1zM-71 97h1v1h-1zM-65 97h1v1h-1zM-60 97h1v1h-1zM-47 97h1v1h-1zM-43 97h1v1h-1zM-35 97h1v1h-1zM-16 97h1v1h-1zM-12 97h2v1h-2zM-7 97h1v1h-1zM5 97h1v1h-1zM14 97h1v1h-1zM18 97h2v1h-2zM30 97h1v1h-1zM33 97h1v1h-1zM62 97h1v1h-1zM79 97h1v1h-1zM-53 98h1v1h-1zM-34 98h1v1h-1zM-29 98h1v1h-1zM-27 98h1v1h-1zM-25 98h1v1h-1zM-19 98h1v1h-1zM-15 98h1v1h-1zM-7 98h1v1h-1zM0 98h1v1h-1zM10 98h1v1h-1zM17 98h1v1h-1zM23 98h3v1h-3zM33 98h1v1h-1zM80 98h1v1h-1zM-89 99h1v1h-1zM-77 99h1v1h-1zM-46 99h1v1h-1zM-26 99h2v1h-2zM-21 99h2v1h-2zM-15 99h1v1h-1zM-4 99h1v1h-1zM-2 99h1v1h-1zM5 99h2v1h-2zM18 99h3v1h-3zM32 99h1v1h-1zM40 99h1v1h-1zM65 99h1v1h-1zM73 99h1v1h-1zM-40 100h1v1h-1zM-30 100h4v1h-4zM-16 100h1v1h-1zM-12 100h2v1h-2zM-6 100h1v1h-1zM15 100h1v1h-1zM21 100h1v1h-1zM33 100h1v1h-1zM36 100h1v1h-1zM48 100h1v1h-1zM63 100h1v1h-1zM74 100h1v1h-1zM77 100h1v1h-1zM-35 101h1v1h-1zM-29 101h1v1h-1zM-5 101h1v1h-1zM0 101h1v1h-1zM8 101h1v1h-1zM11 101h1v1h-1zM36 101h1v1h-1zM48 101h1v1h-1zM51 101h1v1h-1zM56 101h1v1h-1zM60 101h1v1h-1zM66 101h2v1h-2zM-90 102h1v1h-1zM-54 102h1v1h-1zM-50 102h1v1h-1zM-43 102h1v1h-1zM-28 102h1v1h-1zM-25 102h1v1h-1zM-18 102h1v1h-1zM-7 102h1v1h-1zM1 102h1v1h-1zM6 102h1v1h-1zM14 102h1v1h-1zM23 102h1v1h-1zM-61 103h1v1h-1zM-57 103h1v1h-1zM-20 103h1v1h-1zM-16 103h1v1h-1zM-8 103h1v1h-1zM-6 103h1v1h-1zM6 103h1v1h-1zM13 103h1v1h-1zM15 103h1v1h-1zM80 103h1v1h-1zM-49 104h1v1h-1zM-18 104h1v1h-1zM-13 104h2v1h-2zM12 104h1v1h-1zM40 104h1v1h-1zM43 104h1v1h-1zM45 104h1v1h-1zM52 104h1v1h-1zM107 104h1v1h-1zM-50 105h1v1h-1zM-20 105h1v1h-1zM-18 105h1v1h-1zM-11 105h1v1h-1zM-4 105h2v1h-2zM4 105h1v1h-1zM17 105h1v1h-1zM19 105h1v1h-1zM53 105h1v1h-1zM57 105h1v1h-1zM73 105h1v1h-1zM98 105h1v1h-1zM-84 106h1v1h-1zM-47 106h1v1h-1zM-44 106h1v1h-1zM-40 106h1v1h-1zM-6 106h1v1h-1zM5 106h2v1h-2zM28 106h1v1h-1zM-40 107h1v1h-1zM-36 107h1v1h-1zM-33 107h1v1h-1zM-15 107h1v1h-1zM1 107h1v1h-1zM3 107h1v1h-1zM35 107h1v1h-1zM-66 108h1v1h-1zM-60 108h1v1h-1zM-49 108h1v1h-1zM-39 108h1v1h-1zM-1 108h1v1h-1zM5 108h1v1h-1zM11 108h1v1h-1zM36 108h1v1h-1zM-29 109h1v1h-1zM13 109h1v1h-1zM17 109h1v1h-1zM22 109h1v1h-1zM31 109h1v1h-1zM-26 110h1v1h-1zM-24 110h1v1h-1zM-21 110h1v1h-1zM-19 110h1v1h-1zM3 110h1v1h-1zM9 110h1v1h-1zM13 110h2v1h-2zM27 110h1v1h-1zM39 110h1v1h-1zM95 110h1v1h-1zM-17 111h1v1h-1zM11 111h1v1h-1zM13 111h1v1h-1zM17 111h1v1h-1zM38 111h1v1h-1zM51 111h2v1h-2zM-53 112h1v1h-1zM-42 112h1v1h-1zM-38 112h1v1h-1zM-1 112h1v1h-1zM25 112h1v1h-1zM-54 113h1v1h-1zM-47 113h1v1h-1zM-11 113h1v1h-1zM8 113h1v1h-1zM13 113h1v1h-1zM-39 114h1v1h-1zM1 114h1v1h-1zM23 114h1v1h-1zM-57 115h2v1h-2zM-10 115h1v1h-1zM-36 116h1v1h-1zM-27 116h1v1h-1zM-20 116h1v1h-1zM2 116h1v1h-1zM6 116h1v1h-1zM8 116h1v1h-1zM14 116h1v1h-1zM26 116h1v1h-1zM53 116h1v1h-1zM105 116h1v1h-1zM27 117h1v1h-1zM63 119h1v1h-1zM-72 120h1v1h-1zM-53 120h1v1h-1zM24 120h1v1h-1zM36 120h1v1h-1zM46 120h1v1h-1zM-49 121h1v1h-1zM-26 121h1v1h-1zM-10 121h1v1h-1zM1 121h1v1h-1zM40 121h1v1h-1zM-56 122h1v1h-1zM39 122h1v1h-1zM-37 123h1v1h-1zM-26 123h1v1h-1zM7 123h1v1h-1zM-12 124h1v1h-1zM80 124h1v1h-1zM-21 125h1v1h-1zM-16 125h1v1h-1zM12 125h1v1h-1zM-71 126h1v1h-1zM-4 126h1v1h-1zM-43 127h1v1h-1zM-19 127h1v1h-1zM2 127h1v1h-1zM29 127h1v1h-1zM-2 128h1v1h-1zM21 128h1v1h-1zM12 129h1v1h-1zM23 129h1v1h-1zM-38 130h1v1h-1zM7 131h1v1h-1zM17 132h1v1h-1zM-39 134h1v1h-1zM-20 134h1v1h-1zM24 136h1v1h-1zM-62 138h1v1h-1zM-4 138h1v1h-1zM-28 139h1v1h-1zM39 140h1v1h-1zM-17 141h1v1h-1zM-53 148h1v1h-1z" fill="#fff" transform="translate(417.5,264.5) scale(0.725)"/></svg>

<div id="toolbox" class="a">
  <div class="a" style="left:0;top:0;width:24px;height:8px;background:#3a3a3a"></div>
  <div class="t" style="left:3px;top:1px;font-size:6px;color:#ddd;letter-spacing:-1px">▸▸</div>
  <div class="a" style="left:3px;top:18px;width:18px;height:14px;background:#383838;border:1px solid #2c2c2c;border-radius:2px"></div>
  <div class="a" style="left:7px;top:11px;width:10px;height:1px;background:#777"></div>
  <svg class="a" style="left:0;top:12px" width="24" height="410" fill="none" stroke="#cfcfcf" stroke-width="1.2">
    <path d="M7 9L14 14L10 14.5L9 18Z" fill="#ddd" stroke="none"/><path d="M13 15h4M15 13v4" stroke-width="1"/>
    <circle cx="12" cy="31" r="4.500" stroke-dasharray="2 1.500"/>
    <path d="M8 47c0-5 8-6 9-2c0 3-6 4-8 3l-1 3"/>
    <path d="M8 67l7-7M14 59l3 2" stroke-width="1.6"/>
    <path d="M9 72v9h8M6 75h9v8" />
    <path d="M8 98l7-7M14 90l2 2" stroke-width="1.600"/>
    <path d="M8 116l7-9l3 2l-7 9z" />
    <path d="M8 133l8-9M7 134l2-3" stroke-width="1.600"/>
    <path d="M7 150h10M8 148h8v-2h-8zM11 146v-4h2v4" fill="#ccc"/>
    <path d="M8 165l8-8M9 157l6 8" />
    <path d="M8 177l5-5l4 3l-5 5z" fill="#ccc"/>
    <rect x="8" y="190" width="9" height="8" fill="#8a8a8a"/><rect x="8" y="190" width="4" height="8" fill="#c8c8c8" stroke="none"/>
    <path d="M12 205c-3 4-3 8 0 8s3-4 0-8z" fill="#ccc"/>
    <circle cx="11" cy="226" r="3" fill="#ccc"/><path d="M13 228l4 4" stroke-width="1.6"/>
    <path d="M8 249l3-8l5 3l-6 6zM14 240l2-2" fill="#ccc"/>
    <path d="M8.500 257h7M12 257v8M10.500 265h3" stroke-width="1.300"/>
    <path d="M9 272L9 283L12 280L15 284Z" fill="#ddd" stroke="none"/>
    <ellipse cx="12" cy="295" rx="5" ry="3.500" fill="#8c8c8c" stroke="#999"/>
    <path d="M8 318v-6l2-2v-3l2 1v-2l2 1v-1l2 1v5l-2 6z" fill="#ccc" stroke="none"/>
    <circle cx="11" cy="326" r="3"/><path d="M13.500 328.500l3 3" stroke-width="1.800"/>
  </svg>
  <div class="a" style="left:0;top:0;width:1px;height:424px;background:#353535"></div>
  <div class="a" style="left:19px;top:49px;width:2px;height:2px;background:#9a9a9a"></div><div class="a" style="left:19px;top:64px;width:2px;height:2px;background:#9a9a9a"></div><div class="a" style="left:19px;top:79px;width:2px;height:2px;background:#9a9a9a"></div><div class="a" style="left:19px;top:94px;width:2px;height:2px;background:#9a9a9a"></div><div class="a" style="left:19px;top:110px;width:2px;height:2px;background:#9a9a9a"></div><div class="a" style="left:19px;top:129px;width:2px;height:2px;background:#9a9a9a"></div><div class="a" style="left:19px;top:146px;width:2px;height:2px;background:#9a9a9a"></div><div class="a" style="left:19px;top:162px;width:2px;height:2px;background:#9a9a9a"></div><div class="a" style="left:19px;top:178px;width:2px;height:2px;background:#9a9a9a"></div><div class="a" style="left:19px;top:194px;width:2px;height:2px;background:#9a9a9a"></div><div class="a" style="left:19px;top:210px;width:2px;height:2px;background:#9a9a9a"></div><div class="a" style="left:19px;top:226px;width:2px;height:2px;background:#9a9a9a"></div><div class="a" style="left:19px;top:243px;width:2px;height:2px;background:#9a9a9a"></div><div class="a" style="left:19px;top:260px;width:2px;height:2px;background:#9a9a9a"></div><div class="a" style="left:19px;top:277px;width:2px;height:2px;background:#9a9a9a"></div><div class="a" style="left:19px;top:294px;width:2px;height:2px;background:#9a9a9a"></div><div class="a" style="left:19px;top:311px;width:2px;height:2px;background:#9a9a9a"></div><div class="a" style="left:19px;top:328px;width:2px;height:2px;background:#9a9a9a"></div>
  <div class="a" style="left:10px;top:366px;width:12px;height:12px;background:#000;border:1px solid #fff"></div>
  <div class="a" style="left:3px;top:360px;width:12px;height:12px;background:#fff;border:1px solid #333"></div>
  <div class="a" style="left:4px;top:349px;width:4px;height:4px;background:#000;border:1px solid #ccc"></div>
  <svg class="a" style="left:13px;top:347px" width="8" height="8" fill="none" stroke="#ccc"><path d="M1 2h4v4M3 0L1 2l2 2M7 4L5 6 3 4"/></svg>
  <div class="a" style="left:6px;top:383px;width:12px;height:10px;border:1px solid #ccc"></div>
  <div class="a" style="left:9px;top:385px;width:6px;height:6px;border-radius:50%;border:1px solid #ccc;background:#777"></div>
  <div class="a" style="left:9px;top:399px;width:10px;height:7px;border:1px solid #ccc;border-top-width:2px"></div>
  <div class="a" style="left:5px;top:403px;width:10px;height:7px;border:1px solid #ccc;border-top-width:2px;background:#535353"></div>
</div>

<div id="status" class="a">
  <div class="t" style="left:3px;top:2px;color:#f4f4f4;font-weight:bold;font-size:7.5px">66.67%</div>
  <div class="a" style="left:33px;top:0;width:128px;height:11px;background:#4b4b4b"></div>
  <div class="a" style="left:36px;top:2px;width:7px;height:7px;border-radius:50%;background:#8a8a8a"></div>
  <div class="t" style="left:69px;top:1px;color:#e8e8e8;font-size:8.5px;transform:scaleX(.86);transform-origin:0 0">文档:2.33M/511.8K</div>
  <div class="t" style="left:154px;top:2px;color:#f0f0f0;font-size:7px">▶</div>
</div>
<div class="a" style="left:810px;top:461px;width:13px;height:11px;background:#4d4d4d"></div>
<div id="bottom" class="a">
  <div class="a" style="left:0;top:0;width:799px;height:1px;background:#2c2c2c"></div>
  <div class="t" style="left:4px;top:2px;color:#777;font-size:8px">Mini Bridge</div>
  <div class="a" style="left:48px;top:1px;width:30px;height:8px;background:#4d4d4d"></div>
  <div class="t" style="left:51px;top:2px;color:#e4e4e4;font-size:8.5px">时间轴</div>
</div>

<div id="dock" class="a">
  <div class="a" style="left:0;top:0;width:168px;height:7px;background:#2e2e2e"></div>
  <div class="t" style="left:16px;top:0px;font-size:6px;color:#ddd;letter-spacing:-1px">◂◂</div>
  <div id="iconstrip" class="a">
    <div class="a" style="left:0;top:0;width:24px;height:25px;background:#4f4f4f;border-bottom:1px solid #333"></div>
    <div class="a" style="left:6px;top:3px;width:12px;height:1px;background:#777"></div>
    <svg class="a" style="left:6px;top:8px" width="14" height="16" stroke="#ccc" fill="none"><path d="M2 2h3v3h-3zM2 7h3v3h-3zM8 1c3 2 3 9 0 12" stroke-width="1.500"/><circle cx="3.500" cy="12.500" r="1.300" fill="#ccc"/></svg>
    <div class="a" style="left:0;top:26px;width:24px;height:26px;background:#4f4f4f;border-bottom:1px solid #333"></div>
    <div class="a" style="left:6px;top:29px;width:12px;height:1px;background:#777"></div>
    <svg class="a" style="left:6px;top:34px" width="14" height="14" stroke="#ddd" fill="none"><path d="M2 1v6M5 1v6M9 0v7" stroke-width="1.600"/><path d="M1 10h11" stroke-width="2"/></svg>
    <div class="a" style="left:0;top:53px;width:24px;height:363px;background:#4d4d4d"></div>
  </div>
  <div id="panel" class="a">
    <!-- tabs -->
    <div class="a" style="left:0;top:0;width:143px;height:13px;background:#383838"></div>
    <div class="a" style="left:49px;top:0;width:24px;height:13px;background:#4a4a4a;border:1px solid #2e2e2e;border-bottom:none"></div>
    <div class="t" style="left:6px;top:2px;color:#8a8a8a;font-size:8.5px">颜色</div>
    <div class="t" style="left:29px;top:2px;color:#8a8a8a;font-size:8.5px">色板</div>
    <div class="t" style="left:52px;top:2px;color:#e8e8e8;font-size:8.5px">图层</div>
    <div class="t" style="left:77px;top:2px;color:#8a8a8a;font-size:8.5px">通道</div>
    <div class="t" style="left:100px;top:2px;color:#8a8a8a;font-size:8.5px">路径</div>
    <div class="t" style="left:135px;top:2px;color:#aaa;font-size:7px">≡</div>
    <!-- filter row -->
    <div class="a" style="left:0;top:13px;width:143px;height:15px;background:#454545;border-bottom:1px solid #383838"></div>
    <div class="a" style="left:5px;top:15px;width:41px;height:11px;background:#4d4d4d;border:1px solid #3a3a3a;border-radius:2px"></div>
    <div class="t" style="left:9px;top:17px;color:#8c8c8c;font-size:8.5px">ρ 类型</div>
    <div class="t" style="left:38px;top:17px;color:#999;font-size:7px">⬍</div>
    <div class="a" style="left:50px;top:15px;width:90px;height:11px;background:#4a4a4a;border-radius:2px"></div>
    <svg class="a" style="left:55px;top:16px" width="30" height="10" stroke="#7c7c7c" fill="none"><path d="M2 2h6v6h-6zM12 2v6M16 2v6M12 5h4M21 2h5M23.500 2v6"/></svg>
    <div class="t" style="left:135px;top:17px;color:#888;font-size:7px">⬍</div>
    <!-- blend row -->
    <div class="a" style="left:3px;top:31px;width:69px;height:13px;background:#5a5a5a;border:1px solid #333;border-radius:2px"></div>
    <div class="t" style="left:8.500px;top:34px;color:#f0f0f0;font-size:8.5px;transform:scaleX(.9);transform-origin:0 0">正常</div>
    <div class="t" style="left:65px;top:34px;color:#ddd;font-size:7px">⬍</div>
    <div class="t" style="left:77px;top:34px;color:#e6e6e6;font-size:8.5px">不透明度:</div>
    <div class="a" style="left:113px;top:31px;width:23px;height:13px;background:#2f2f2f;border:1px solid #2a2a2a"></div>
    <div class="t" style="left:115px;top:34px;color:#eee;font-size:8px">100%</div>
    <div class="a" style="left:137px;top:31px;width:6px;height:13px;background:#606060"></div>
    <!-- lock row -->
    <div class="t" style="left:5px;top:51px;color:#e6e6e6;font-size:8.5px">锁定:</div>
    <svg class="a" style="left:26px;top:47px" width="60" height="14" fill="none" stroke="#bdbdbd"><path d="M4 4h6v6h-6z" fill="#777" stroke-dasharray="1 1"/><path d="M17 11l7-8M16 12l2-3" stroke-width="1.600"/><path d="M34.500 3v8M30.500 7h8"/><path d="M46 7h6v5h-6zM47 7v-2a2 2 0 0 1 4 0v2" fill="#999"/></svg>
    <div class="t" style="left:93px;top:51px;color:#e6e6e6;font-size:8.5px">填充:</div>
    <div class="a" style="left:113px;top:49px;width:23px;height:13px;background:#2f2f2f;border:1px solid #2a2a2a"></div>
    <div class="t" style="left:115px;top:52px;color:#eee;font-size:8px">100%</div>
    <div class="a" style="left:137px;top:49px;width:6px;height:13px;background:#606060"></div>
    <div class="a" style="left:0;top:64px;width:143px;height:1px;background:#353535"></div>
    <!-- layer 2 -->
    <div class="a" style="left:4px;top:65px;width:137px;height:17px;background:#4a4a4a"></div>
    <div class="a" style="left:20px;top:65px;width:121px;height:17px;background:#56637d"></div>
    <svg class="a" style="left:6px;top:70px" width="10" height="7"><ellipse cx="5" cy="3.500" rx="4.500" ry="2.800" fill="#858585"/><circle cx="5" cy="3.500" r="1.500" fill="#444"/></svg>
    <div class="a" style="left:21px;top:66px;width:23px;height:16px;background:repeating-conic-gradient(#fff 0 25%,#dfe3e8 0 50%) 0 0/6px 6px;border:1px solid #fff;outline:1px solid #222"></div>
    <div class="t" style="left:49px;top:70px;color:#f2f2f2;font-size:8.5px;transform:scaleX(.9);transform-origin:0 0">图层 2</div>
    <!-- background -->
    <div class="a" style="left:4px;top:83px;width:137px;height:17px;background:#4c4c4c"></div>
    <svg class="a" style="left:6px;top:88px" width="10" height="7"><ellipse cx="5" cy="3.500" rx="4.500" ry="2.800" fill="#858585"/><circle cx="5" cy="3.500" r="1.500" fill="#444"/></svg>
    <div class="a" style="left:23px;top:84px;width:19px;height:15px;background:#000"></div>
    <div class="t" style="left:49px;top:89px;color:#f2f2f2;font-size:8px;font-style:italic;transform:scaleX(.9);transform-origin:0 0">背景</div>
    <svg class="a" style="left:123px;top:88px" width="10" height="11"><path d="M2 5h6v4h-6z" fill="#aaa"/><path d="M3 5v-2a2 2 0 0 1 4 0v2" stroke="#aaa" fill="none"/></svg>
    <div class="a" style="left:0;top:100px;width:143px;height:1px;background:#383838"></div>
    <!-- bottom bar -->
    <div class="a" style="left:0;top:401px;width:143px;height:16px;background:#4a4a4a;border-top:1px solid #383838"></div>
    <svg class="a" style="left:22px;top:403px" width="120" height="12" fill="none" stroke="#cfcfcf">
      <path d="M3 4h6a2 2 0 0 1 0 4h-6a2 2 0 0 1 0-4z" stroke="#777"/>
      <path d="M37.500 3h8v7h-8z" fill="#ccc"/><circle cx="41.500" cy="6.500" r="1.800" fill="#444" stroke="none"/>
      <circle cx="58.500" cy="6.500" r="3.800" fill="#ccc"/><path d="M58.500 3v7" stroke="#444"/>
      <path d="M70.500 4h3l1 1h4v5h-8z" fill="#ccc"/>
      <path d="M90 4h5v6h-5z" fill="#ccc"/><path d="M88 6h4v5" stroke="#ccc"/>
      <path d="M105.500 4.500h5v6h-5zM104 3.500h8" fill="#ccc"/>
    </svg>
    <div class="t" style="left:43px;top:404px;color:#ddd;font-size:9px;font-style:italic;font-weight:bold;font-family:'Liberation Serif',serif">fx</div>
  </div>
</div>

<!-- Radial blur dialog -->
<div id="dlg" class="a">
  <div id="dlgtitle" class="a"></div>
  <div class="t" style="left:2px;top:4px;color:#fff;font-weight:bold;font-size:9.5px;transform:scaleX(.84);transform-origin:0 0">径向模糊</div>
  <div class="a" style="left:155px;top:2px;width:13px;height:13px;border:1px solid #fff;border-radius:2px;background:linear-gradient(135deg,#e8836a,#c93a16)"></div>
  <svg class="a" style="left:157px;top:4px" width="9" height="9"><path d="M1.500 1.500L7.500 7.500M7.500 1.500L1.500 7.500" stroke="#fff" stroke-width="1.800"/></svg>
  <!-- yellow highlight -->
  <div class="a" style="left:21px;top:25px;width:37px;height:37px;border-radius:50%;background:#e9e31c;opacity:.95"></div>
  <div class="t m" style="left:10px;top:32px;font-size:9px">数量(A)</div>
  <div class="a" style="left:54px;top:30px;width:20px;height:12px;background:#fff;border:1px solid #7f9db9"></div>
  <div class="a" style="left:55px;top:32px;width:8px;height:8px;background:#2a5fc8"></div>
  <div class="t" style="left:55px;top:32px;font-size:8px;color:#fff;letter-spacing:-2px">100</div>
  <div class="a" style="left:10px;top:48px;width:64px;height:1px;background:#8a8a80"></div>
  <svg class="a" style="left:36px;top:44px" width="12" height="14"><path d="M1 1L1 10L3.500 8L5.500 12L7.500 11L5.500 7.500L9 7.500Z" fill="#fff" stroke="#444" stroke-width="1"/></svg>
  <div class="btn a" style="left:88px;top:24px;width:75px;height:13px;border-color:#0a2f8a;box-shadow:inset 0 0 0 1px #a9c2f0"></div>
  <div class="t m" style="left:116.500px;top:26px;font-size:9px">确定</div>
  <div class="btn a" style="left:88px;top:43px;width:75px;height:13px"></div>
  <div class="t m" style="left:116.500px;top:45px;font-size:9px">取消</div>
  <!-- group 1 -->
  <div class="grp a" style="left:7px;top:71px;width:55px;height:35px"></div>
  <div class="t m" style="left:16px;top:68px;font-size:9px;color:#0046d5;background:#ece9d8;padding:0 1px">模糊方法:</div>
  <div class="radio a" style="left:10px;top:78px"></div>
  <div class="t m" style="left:19px;top:78px;font-size:9px">旋转(S)</div>
  <div class="radio dot a" style="left:10px;top:91px"></div>
  <div class="t m" style="left:19px;top:91px;font-size:9px">缩放(Z)</div>
  <!-- group 2 -->
  <div class="grp a" style="left:7px;top:112px;width:55px;height:47px"></div>
  <div class="t m" style="left:16px;top:109px;font-size:9px;color:#0046d5;background:#ece9d8;padding:0 1px">品质</div>
  <div class="radio a" style="left:10px;top:119px"></div>
  <div class="t m" style="left:19px;top:119px;font-size:9px">草图(D)</div>
  <div class="radio dot a" style="left:10px;top:131px"></div>
  <div class="t m" style="left:19px;top:131px;font-size:9px">好(G)</div>
  <div class="radio a" style="left:10px;top:144px"></div>
  <div class="t m" style="left:19px;top:144px;font-size:9px">最好(B)</div>
  <!-- preview -->
  <div class="t" style="left:83px;top:67px;font-size:9px;transform:scaleX(.79);transform-origin:0 0">中心模糊</div>
  <div class="a" style="left:81px;top:80px;width:82px;height:82px;background:#fff;border:1px solid #000"></div>
  <svg class="a" style="left:82px;top:81px" width="80" height="80"><path d="M3.2 3.2L-3.2 -3.2M3.2 6.9L-3.2 1.1M6.9 3.2L1.1 -3.2M3.2 10.6L-3.2 5.4M10.6 3.2L5.4 -3.2M3.2 14.2L-3.2 9.8M14.2 3.2L9.8 -3.2M3.2 17.9L-3.2 14.1M17.9 3.2L14.1 -3.2M3.2 21.6L-3.2 18.4M21.6 3.2L18.4 -3.2M3.2 25.3L-3.2 22.7M25.3 3.2L22.7 -3.2M3.2 29.0L-3.2 27.0M29.0 3.2L27.0 -3.2M3.2 32.6L-3.2 31.4M32.6 3.2L31.4 -3.2M3.2 36.3L-3.2 35.7M36.3 3.2L35.7 -3.2M7.6 40.0L-7.6 40.0M40.0 7.6L40.0 -7.6M3.2 43.7L-3.2 44.3M43.7 3.2L44.3 -3.2M3.2 47.4L-3.2 48.6M47.4 3.2L48.6 -3.2M3.2 51.0L-3.2 53.0M51.0 3.2L53.0 -3.2M3.2 54.7L-3.2 57.3M54.7 3.2L57.3 -3.2M3.2 58.4L-3.2 61.6M58.4 3.2L61.6 -3.2M3.2 62.1L-3.2 65.9M62.1 3.2L65.9 -3.2M3.2 65.8L-3.2 70.2M65.8 3.2L70.2 -3.2M3.2 69.4L-3.2 74.6M69.4 3.2L74.6 -3.2M3.2 73.1L-3.2 78.9M73.1 3.2L78.9 -3.2M3.2 76.8L-3.2 83.2M76.8 3.2L83.2 -3.2M21.6 6.9L18.4 1.1M6.9 21.6L1.1 18.4M21.6 10.6L18.4 5.4M10.6 21.6L5.4 18.4M21.6 14.2L18.4 9.8M14.2 21.6L9.8 18.4M21.6 17.9L18.4 14.1M17.9 21.6L14.1 18.4M21.6 21.6L18.4 18.4M21.6 25.3L18.4 22.7M25.3 21.6L22.7 18.4M21.6 29.0L18.4 27.0M29.0 21.6L27.0 18.4M21.6 32.6L18.4 31.4M32.6 21.6L31.4 18.4M21.6 36.3L18.4 35.7M36.3 21.6L35.7 18.4M23.8 40.0L16.2 40.0M40.0 23.8L40.0 16.2M21.6 43.7L18.4 44.3M43.7 21.6L44.3 18.4M21.6 47.4L18.4 48.6M47.4 21.6L48.6 18.4M21.6 51.0L18.4 53.0M51.0 21.6L53.0 18.4M21.6 54.7L18.4 57.3M54.7 21.6L57.3 18.4M21.6 58.4L18.4 61.6M58.4 21.6L61.6 18.4M21.6 62.1L18.4 65.9M62.1 21.6L65.9 18.4M21.6 65.8L18.4 70.2M65.8 21.6L70.2 18.4M21.6 69.4L18.4 74.6M69.4 21.6L74.6 18.4M21.6 73.1L18.4 78.9M73.1 21.6L78.9 18.4M21.6 76.8L18.4 83.2M76.8 21.6L83.2 18.4M40.0 10.8L40.0 -2.8M10.8 40.0L-2.8 40.0M40.0 14.1L40.0 1.9M14.1 40.0L1.9 40.0M40.0 17.3L40.0 6.7M17.3 40.0L6.7 40.0M40.0 20.6L40.0 11.4M20.6 40.0L11.4 40.0M40.0 27.0L40.0 21.0M27.0 40.0L21.0 40.0M40.0 30.3L40.0 25.7M30.3 40.0L25.7 40.0M40.0 33.5L40.0 30.5M33.5 40.0L30.5 40.0M40.0 36.6L40.0 35.4M36.6 40.0L35.4 40.0M39.4 40.0h1.2M40.0 43.4L40.0 44.6M43.4 40.0L44.6 40.0M40.0 46.5L40.0 49.5M46.5 40.0L49.5 40.0M40.0 49.7L40.0 54.3M49.7 40.0L54.3 40.0M40.0 53.0L40.0 59.0M53.0 40.0L59.0 40.0M40.0 56.2L40.0 63.8M56.2 40.0L63.8 40.0M40.0 59.4L40.0 68.6M59.4 40.0L68.6 40.0M40.0 62.7L40.0 73.3M62.7 40.0L73.3 40.0M40.0 65.9L40.0 78.1M65.9 40.0L78.1 40.0M40.0 69.2L40.0 82.8M69.2 40.0L82.8 40.0M40.0 72.4L40.0 87.6M72.4 40.0L87.6 40.0M58.4 6.9L61.6 1.1M6.9 58.4L1.1 61.6M58.4 10.6L61.6 5.4M10.6 58.4L5.4 61.6M58.4 14.2L61.6 9.8M14.2 58.4L9.8 61.6M58.4 17.9L61.6 14.1M17.9 58.4L14.1 61.6M58.4 25.3L61.6 22.7M25.3 58.4L22.7 61.6M58.4 29.0L61.6 27.0M29.0 58.4L27.0 61.6M58.4 32.6L61.6 31.4M32.6 58.4L31.4 61.6M58.4 36.3L61.6 35.7M36.3 58.4L35.7 61.6M58.4 43.7L61.6 44.3M43.7 58.4L44.3 61.6M58.4 47.4L61.6 48.6M47.4 58.4L48.6 61.6M58.4 51.0L61.6 53.0M51.0 58.4L53.0 61.6M58.4 54.7L61.6 57.3M54.7 58.4L57.3 61.6M58.4 58.4L61.6 61.6M58.4 62.1L61.6 65.9M62.1 58.4L65.9 61.6M58.4 65.8L61.6 70.2M65.8 58.4L70.2 61.6M58.4 69.4L61.6 74.6M69.4 58.4L74.6 61.6M58.4 73.1L61.6 78.9M73.1 58.4L78.9 61.6M58.4 76.8L61.6 83.2M76.8 58.4L83.2 61.6M76.8 6.9L83.2 1.1M6.9 76.8L1.1 83.2M76.8 10.6L83.2 5.4M10.6 76.8L5.4 83.2M76.8 14.2L83.2 9.8M14.2 76.8L9.8 83.2M76.8 17.9L83.2 14.1M17.9 76.8L14.1 83.2M76.8 25.3L83.2 22.7M25.3 76.8L22.7 83.2M76.8 29.0L83.2 27.0M29.0 76.8L27.0 83.2M76.8 32.6L83.2 31.4M32.6 76.8L31.4 83.2M76.8 36.3L83.2 35.7M36.3 76.8L35.7 83.2M76.8 43.7L83.2 44.3M43.7 76.8L44.3 83.2M76.8 47.4L83.2 48.6M47.4 76.8L48.6 83.2M76.8 51.0L83.2 53.0M51.0 76.8L53.0 83.2M76.8 54.7L83.2 57.3M54.7 76.8L57.3 83.2M76.8 62.1L83.2 65.9M62.1 76.8L65.9 83.2M76.8 65.8L83.2 70.2M65.8 76.8L70.2 83.2M76.8 69.4L83.2 74.6M69.4 76.8L74.6 83.2M76.8 73.1L83.2 78.9M73.1 76.8L78.9 83.2M76.8 76.8L83.2 83.2" stroke="#111" stroke-width="1" fill="none"/></svg>
</div>
</body>
</html>
